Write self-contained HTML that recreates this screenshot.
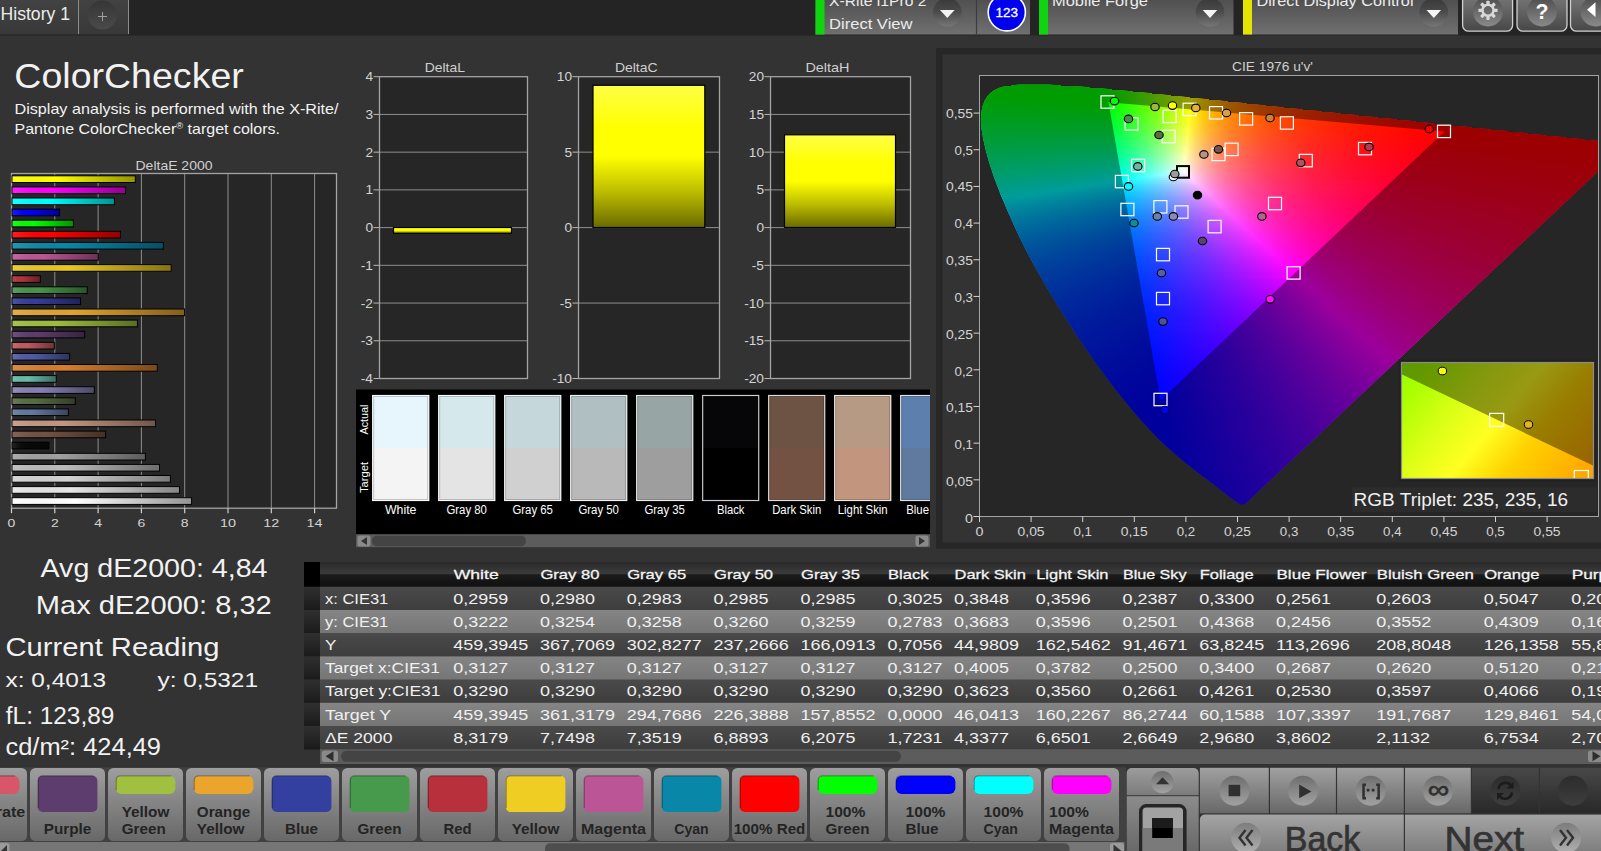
<!DOCTYPE html>
<html lang="en"><head><meta charset="utf-8"><title>ColorChecker</title>
<style>html,body{margin:0;padding:0;background:#333;overflow:hidden}svg{display:block;font-family:"Liberation Sans",sans-serif}</style>
</head><body>
<svg width="1601" height="851" viewBox="0 0 1601 851">
<defs>
<linearGradient id="gTab" x1="0" y1="0" x2="0" y2="1"><stop offset="0" stop-color="#424242"/><stop offset="1" stop-color="#383838"/></linearGradient>
<linearGradient id="gPanel" x1="0" y1="0" x2="0" y2="1"><stop offset="0" stop-color="#4e4e4e"/><stop offset="1" stop-color="#707070"/></linearGradient>
<linearGradient id="gBtn" x1="0" y1="0" x2="0" y2="1"><stop offset="0" stop-color="#7a7a7a"/><stop offset="0.35" stop-color="#6c6c6c"/><stop offset="1" stop-color="#474747"/></linearGradient>
<linearGradient id="gCirc" x1="0" y1="0" x2="0" y2="1"><stop offset="0" stop-color="#383838"/><stop offset="0.5" stop-color="#4c4c4c"/><stop offset="1" stop-color="#767676"/></linearGradient>
<linearGradient id="gCircBtn" x1="0" y1="0" x2="0" y2="1"><stop offset="0" stop-color="#4c4c4c"/><stop offset="1" stop-color="#8a8a8a"/></linearGradient>
<linearGradient id="gPlus" x1="0" y1="0" x2="0" y2="1"><stop offset="0" stop-color="#363636"/><stop offset="1" stop-color="#4a4a4a"/></linearGradient>
<linearGradient id="gShade" x1="0" y1="0" x2="1" y2="0"><stop offset="0" stop-color="#fff" stop-opacity="0.12"/><stop offset="0.35" stop-color="#000" stop-opacity="0"/><stop offset="1" stop-color="#000" stop-opacity="0.42"/></linearGradient>
<linearGradient id="gY" x1="0" y1="0" x2="0" y2="1"><stop offset="0" stop-color="#ffff46"/><stop offset="0.3" stop-color="#ffff00"/><stop offset="0.5" stop-color="#ffff00"/><stop offset="0.75" stop-color="#bcbc00"/><stop offset="1" stop-color="#6a6a00"/></linearGradient>
<linearGradient id="r0" gradientUnits="userSpaceOnUse" x1="1011" x2="1061"><stop offset="0" stop-color="#0f0"/><stop offset="1" stop-color="#0f0"/></linearGradient>
<linearGradient id="r1" gradientUnits="userSpaceOnUse" x1="999" x2="1090"><stop offset="0" stop-color="#0f0"/><stop offset="1" stop-color="#0f0"/></linearGradient>
<linearGradient id="r2" gradientUnits="userSpaceOnUse" x1="993" x2="1112"><stop offset="0" stop-color="#0f0"/><stop offset="0.9496" stop-color="#0f0"/><stop offset="1" stop-color="#0cff00"/></linearGradient>
<linearGradient id="r3" gradientUnits="userSpaceOnUse" x1="990" x2="1133"><stop offset="0" stop-color="#0f0"/><stop offset="0.8112" stop-color="#0f0"/><stop offset="1" stop-color="#3eff00"/></linearGradient>
<linearGradient id="r4" gradientUnits="userSpaceOnUse" x1="987" x2="1152"><stop offset="0" stop-color="#00ff02"/><stop offset="0.7273" stop-color="#0f0"/><stop offset="0.8606" stop-color="#3f0"/><stop offset="1" stop-color="#73ff00"/></linearGradient>
<linearGradient id="r5" gradientUnits="userSpaceOnUse" x1="985" x2="1171"><stop offset="0" stop-color="#00ff05"/><stop offset="0.2151" stop-color="#0f0"/><stop offset="0.6559" stop-color="#0f0"/><stop offset="0.7312" stop-color="#1eff00"/><stop offset="0.828" stop-color="#4dff00"/><stop offset="1" stop-color="#b1ff00"/></linearGradient>
<linearGradient id="r6" gradientUnits="userSpaceOnUse" x1="983" x2="1190"><stop offset="0" stop-color="#00ff09"/><stop offset="0.314" stop-color="#0f0"/><stop offset="0.6039" stop-color="#01ff00"/><stop offset="0.7005" stop-color="#2fff00"/><stop offset="0.8068" stop-color="#6dff00"/><stop offset="0.9082" stop-color="#b2ff00"/><stop offset="1" stop-color="#faff00"/></linearGradient>
<linearGradient id="r7" gradientUnits="userSpaceOnUse" x1="982" x2="1209"><stop offset="0" stop-color="#00ff0c"/><stop offset="0.3921" stop-color="#0f0"/><stop offset="0.5551" stop-color="#0f0"/><stop offset="0.6476" stop-color="#31ff00"/><stop offset="0.7445" stop-color="#70ff00"/><stop offset="0.837" stop-color="#b6ff00"/><stop offset="0.9207" stop-color="#ff0"/><stop offset="0.9604" stop-color="#fd0"/><stop offset="1" stop-color="#ffc200"/></linearGradient>
<linearGradient id="r8" gradientUnits="userSpaceOnUse" x1="981" x2="1228"><stop offset="0" stop-color="#00ff0f"/><stop offset="0.5142" stop-color="#0f0"/><stop offset="0.5911" stop-color="#2bff00"/><stop offset="0.6842" stop-color="#6cff00"/><stop offset="0.7652" stop-color="#afff00"/><stop offset="0.8502" stop-color="#fffe00"/><stop offset="0.919" stop-color="#ffc400"/><stop offset="1" stop-color="#ff9500"/></linearGradient>
<linearGradient id="r9" gradientUnits="userSpaceOnUse" x1="980" x2="1247"><stop offset="0" stop-color="#00ff13"/><stop offset="0.4831" stop-color="#01ff01"/><stop offset="0.5581" stop-color="#30ff00"/><stop offset="0.6367" stop-color="#6cff00"/><stop offset="0.7116" stop-color="#afff00"/><stop offset="0.7903" stop-color="#fffd00"/><stop offset="0.8315" stop-color="#ffd500"/><stop offset="0.8801" stop-color="#ffb100"/><stop offset="0.9363" stop-color="#ff9000"/><stop offset="1" stop-color="#ff7500"/></linearGradient>
<linearGradient id="r10" gradientUnits="userSpaceOnUse" x1="979" x2="1266"><stop offset="0" stop-color="#00ff16"/><stop offset="0.453" stop-color="#00ff06"/><stop offset="0.5226" stop-color="#30ff02"/><stop offset="0.5993" stop-color="#6fff00"/><stop offset="0.669" stop-color="#b3ff00"/><stop offset="0.7352" stop-color="#fdff00"/><stop offset="0.7875" stop-color="#ffcb00"/><stop offset="0.8467" stop-color="#ffa000"/><stop offset="0.9164" stop-color="#ff7b00"/><stop offset="1" stop-color="#ff5c00"/></linearGradient>
<linearGradient id="r11" gradientUnits="userSpaceOnUse" x1="979" x2="1284"><stop offset="0" stop-color="#00ff1a"/><stop offset="0.4262" stop-color="#00ff0a"/><stop offset="0.4885" stop-color="#2cff07"/><stop offset="0.5607" stop-color="#6cff03"/><stop offset="0.6295" stop-color="#b3ff00"/><stop offset="0.6918" stop-color="#feff00"/><stop offset="0.7508" stop-color="#ffc100"/><stop offset="0.8164" stop-color="#ff9200"/><stop offset="0.8984" stop-color="#ff6b00"/><stop offset="1" stop-color="#ff4a00"/></linearGradient>
<linearGradient id="r12" gradientUnits="userSpaceOnUse" x1="979" x2="1303"><stop offset="0" stop-color="#00ff1d"/><stop offset="0.4043" stop-color="#01ff0e"/><stop offset="0.466" stop-color="#31ff0b"/><stop offset="0.5309" stop-color="#6fff07"/><stop offset="0.5926" stop-color="#b3ff03"/><stop offset="0.6512" stop-color="#ff0"/><stop offset="0.679" stop-color="#ffdc00"/><stop offset="0.713" stop-color="#fb0"/><stop offset="0.787" stop-color="#ff8700"/><stop offset="0.8827" stop-color="#ff5c00"/><stop offset="1" stop-color="#ff3b00"/></linearGradient>
<linearGradient id="r13" gradientUnits="userSpaceOnUse" x1="979" x2="1322"><stop offset="0" stop-color="#00ff21"/><stop offset="0.3819" stop-color="#00ff13"/><stop offset="0.4402" stop-color="#30ff10"/><stop offset="0.5015" stop-color="#6eff0c"/><stop offset="0.5598" stop-color="#b3ff09"/><stop offset="0.6122" stop-color="#fcff05"/><stop offset="0.6152" stop-color="#fffe05"/><stop offset="0.6501" stop-color="#ffd101"/><stop offset="0.6822" stop-color="#ffb200"/><stop offset="0.7201" stop-color="#ff9500"/><stop offset="0.7609" stop-color="#ff7c00"/><stop offset="0.8659" stop-color="#ff5000"/><stop offset="1" stop-color="#ff2e00"/></linearGradient>
<linearGradient id="r14" gradientUnits="userSpaceOnUse" x1="979" x2="1341"><stop offset="0" stop-color="#00ff25"/><stop offset="0.3646" stop-color="#01ff18"/><stop offset="0.4171" stop-color="#30ff15"/><stop offset="0.4751" stop-color="#6eff12"/><stop offset="0.5304" stop-color="#b4ff0e"/><stop offset="0.5801" stop-color="#fcff0b"/><stop offset="0.616" stop-color="#ffd006"/><stop offset="0.6492" stop-color="#ffae03"/><stop offset="0.6878" stop-color="#ff9001"/><stop offset="0.7348" stop-color="#ff7300"/><stop offset="0.7873" stop-color="#ff5b00"/><stop offset="0.8481" stop-color="#ff4600"/><stop offset="1" stop-color="#ff2400"/></linearGradient>
<linearGradient id="r15" gradientUnits="userSpaceOnUse" x1="979" x2="1359"><stop offset="0" stop-color="#00ff28"/><stop offset="0.3474" stop-color="#01ff1d"/><stop offset="0.3974" stop-color="#2fff1a"/><stop offset="0.4526" stop-color="#6eff17"/><stop offset="0.5053" stop-color="#b4ff14"/><stop offset="0.5526" stop-color="#fdff11"/><stop offset="0.5868" stop-color="#ffd00b"/><stop offset="0.6237" stop-color="#ffa907"/><stop offset="0.6658" stop-color="#ff8704"/><stop offset="0.7132" stop-color="#ff6b01"/><stop offset="0.7711" stop-color="#ff5200"/><stop offset="0.8368" stop-color="#ff3d00"/><stop offset="1" stop-color="#ff1b00"/></linearGradient>
<linearGradient id="r16" gradientUnits="userSpaceOnUse" x1="979" x2="1378"><stop offset="0" stop-color="#00ff2c"/><stop offset="0.3308" stop-color="#0f2"/><stop offset="0.3784" stop-color="#2fff1f"/><stop offset="0.4311" stop-color="#6eff1d"/><stop offset="0.4812" stop-color="#b4ff1a"/><stop offset="0.5263" stop-color="#feff17"/><stop offset="0.5589" stop-color="#ffcf10"/><stop offset="0.5965" stop-color="#ffa50b"/><stop offset="0.6416" stop-color="#ff8107"/><stop offset="0.6917" stop-color="#ff6403"/><stop offset="0.7519" stop-color="#ff4b00"/><stop offset="0.8221" stop-color="#ff3500"/><stop offset="1" stop-color="#ff1400"/></linearGradient>
<linearGradient id="r17" gradientUnits="userSpaceOnUse" x1="979" x2="1397"><stop offset="0" stop-color="#00ff30"/><stop offset="0.3182" stop-color="#01ff27"/><stop offset="0.3636" stop-color="#31ff25"/><stop offset="0.4139" stop-color="#71ff22"/><stop offset="0.4593" stop-color="#b5ff20"/><stop offset="0.5024" stop-color="#ffff1d"/><stop offset="0.5359" stop-color="#ffca15"/><stop offset="0.5742" stop-color="#ffa00f"/><stop offset="0.6196" stop-color="#ff7b0a"/><stop offset="0.6722" stop-color="#ff5d05"/><stop offset="0.7344" stop-color="#ff4402"/><stop offset="0.8086" stop-color="#ff2e00"/><stop offset="1" stop-color="#ff0e00"/></linearGradient>
<linearGradient id="r18" gradientUnits="userSpaceOnUse" x1="979" x2="1416"><stop offset="0" stop-color="#00ff34"/><stop offset="0.3043" stop-color="#00ff2c"/><stop offset="0.3478" stop-color="#30ff2a"/><stop offset="0.3936" stop-color="#6dff28"/><stop offset="0.4371" stop-color="#b1ff26"/><stop offset="0.4805" stop-color="#fffe24"/><stop offset="0.5126" stop-color="#ffca1b"/><stop offset="0.5515" stop-color="#ff9d13"/><stop offset="0.5973" stop-color="#ff770d"/><stop offset="0.6522" stop-color="#ff5808"/><stop offset="0.7185" stop-color="#ff3e03"/><stop offset="0.7963" stop-color="#ff2800"/><stop offset="0.8902" stop-color="#ff1600"/><stop offset="1" stop-color="#ff0800"/></linearGradient>
<linearGradient id="r19" gradientUnits="userSpaceOnUse" x1="979" x2="1434"><stop offset="0" stop-color="#00ff38"/><stop offset="0.2923" stop-color="#00ff31"/><stop offset="0.3319" stop-color="#2dff30"/><stop offset="0.378" stop-color="#6dff2e"/><stop offset="0.4176" stop-color="#adff2d"/><stop offset="0.4615" stop-color="#fffd2a"/><stop offset="0.4945" stop-color="#ffc520"/><stop offset="0.5341" stop-color="#ff9717"/><stop offset="0.5802" stop-color="#ff7210"/><stop offset="0.6374" stop-color="#ff520a"/><stop offset="0.7055" stop-color="#ff3805"/><stop offset="0.7868" stop-color="#ff2301"/><stop offset="0.8835" stop-color="#f10"/><stop offset="1" stop-color="#ff0400"/></linearGradient>
<linearGradient id="r20" gradientUnits="userSpaceOnUse" x1="979" x2="1453"><stop offset="0" stop-color="#00ff3c"/><stop offset="0.2827" stop-color="#01ff37"/><stop offset="0.3207" stop-color="#2fff36"/><stop offset="0.3629" stop-color="#6dff34"/><stop offset="0.3987" stop-color="#af3"/><stop offset="0.443" stop-color="#fffc31"/><stop offset="0.4747" stop-color="#ffc425"/><stop offset="0.5148" stop-color="#ff941b"/><stop offset="0.5633" stop-color="#ff6d12"/><stop offset="0.6203" stop-color="#ff4d0c"/><stop offset="0.6899" stop-color="#ff3306"/><stop offset="0.7764" stop-color="#ff1e02"/><stop offset="0.8819" stop-color="#ff0c00"/><stop offset="1" stop-color="#f00"/></linearGradient>
<linearGradient id="r21" gradientUnits="userSpaceOnUse" x1="979" x2="1472"><stop offset="0" stop-color="#00ff40"/><stop offset="0.2718" stop-color="#00ff3c"/><stop offset="0.3083" stop-color="#2fff3b"/><stop offset="0.3469" stop-color="#69ff3b"/><stop offset="0.3813" stop-color="#a6ff3a"/><stop offset="0.4239" stop-color="#feff38"/><stop offset="0.426" stop-color="#fffb38"/><stop offset="0.4584" stop-color="#ffc02a"/><stop offset="0.499" stop-color="#ff8f1e"/><stop offset="0.5477" stop-color="#ff6815"/><stop offset="0.6085" stop-color="#ff470d"/><stop offset="0.6856" stop-color="#ff2c07"/><stop offset="0.7809" stop-color="#ff1602"/><stop offset="0.9209" stop-color="#ff0300"/><stop offset="1" stop-color="#f00"/></linearGradient>
<linearGradient id="r22" gradientUnits="userSpaceOnUse" x1="979" x2="1491"><stop offset="0" stop-color="#0f4"/><stop offset="0.2617" stop-color="#00ff42"/><stop offset="0.2969" stop-color="#2eff41"/><stop offset="0.3359" stop-color="#6cff41"/><stop offset="0.373" stop-color="#b2ff40"/><stop offset="0.4082" stop-color="#ffff40"/><stop offset="0.4238" stop-color="#ffde37"/><stop offset="0.4414" stop-color="#ffbf2f"/><stop offset="0.4824" stop-color="#ff8c22"/><stop offset="0.5332" stop-color="#ff6318"/><stop offset="0.5938" stop-color="#ff430f"/><stop offset="0.6777" stop-color="#ff2608"/><stop offset="0.7812" stop-color="#ff1103"/><stop offset="0.9141" stop-color="#f00"/><stop offset="1" stop-color="#f00"/></linearGradient>
<linearGradient id="r23" gradientUnits="userSpaceOnUse" x1="979" x2="1509"><stop offset="0" stop-color="#00ff48"/><stop offset="0.2547" stop-color="#01ff47"/><stop offset="0.2887" stop-color="#30ff47"/><stop offset="0.3264" stop-color="#70ff47"/><stop offset="0.3604" stop-color="#b2ff47"/><stop offset="0.3943" stop-color="#fffe47"/><stop offset="0.4094" stop-color="#ffdd3d"/><stop offset="0.4264" stop-color="#ffbe35"/><stop offset="0.4679" stop-color="#ff8926"/><stop offset="0.5189" stop-color="#ff601a"/><stop offset="0.583" stop-color="#ff3e11"/><stop offset="0.6717" stop-color="#ff2109"/><stop offset="0.783" stop-color="#ff0c03"/><stop offset="0.8792" stop-color="#f00"/><stop offset="1" stop-color="#f00"/></linearGradient>
<linearGradient id="r24" gradientUnits="userSpaceOnUse" x1="979" x2="1528"><stop offset="0" stop-color="#00ff4c"/><stop offset="0.2459" stop-color="#00ff4d"/><stop offset="0.2787" stop-color="#30ff4d"/><stop offset="0.3133" stop-color="#6cff4e"/><stop offset="0.3443" stop-color="#abff4e"/><stop offset="0.3807" stop-color="#fffd4e"/><stop offset="0.3971" stop-color="#ffd843"/><stop offset="0.4135" stop-color="#ffba3a"/><stop offset="0.4335" stop-color="#ff9e31"/><stop offset="0.4554" stop-color="#ff8529"/><stop offset="0.5064" stop-color="#ff5b1d"/><stop offset="0.5701" stop-color="#ff3a13"/><stop offset="0.663" stop-color="#ff1d0a"/><stop offset="0.7832" stop-color="#ff0703"/><stop offset="0.8452" stop-color="#ff0001"/><stop offset="1" stop-color="#f00"/></linearGradient>
<linearGradient id="r25" gradientUnits="userSpaceOnUse" x1="979" x2="1547"><stop offset="0" stop-color="#00ff50"/><stop offset="0.2377" stop-color="#00ff53"/><stop offset="0.2676" stop-color="#2cff54"/><stop offset="0.3011" stop-color="#68ff54"/><stop offset="0.331" stop-color="#a7ff55"/><stop offset="0.368" stop-color="#fffc55"/><stop offset="0.3838" stop-color="#ffd749"/><stop offset="0.4014" stop-color="#ffb73f"/><stop offset="0.4208" stop-color="#ff9a35"/><stop offset="0.4419" stop-color="#ff822d"/><stop offset="0.4947" stop-color="#ff571f"/><stop offset="0.5599" stop-color="#ff3614"/><stop offset="0.6567" stop-color="#ff190b"/><stop offset="0.7817" stop-color="#ff0304"/><stop offset="1" stop-color="#f00"/></linearGradient>
<linearGradient id="r26" gradientUnits="userSpaceOnUse" x1="979" x2="1566"><stop offset="0" stop-color="#00ff54"/><stop offset="0.2317" stop-color="#01ff59"/><stop offset="0.2606" stop-color="#2eff5a"/><stop offset="0.293" stop-color="#6bff5b"/><stop offset="0.3203" stop-color="#a7ff5c"/><stop offset="0.3543" stop-color="#feff5e"/><stop offset="0.356" stop-color="#fffb5d"/><stop offset="0.3714" stop-color="#ffd650"/><stop offset="0.3884" stop-color="#ffb644"/><stop offset="0.4072" stop-color="#ff993a"/><stop offset="0.4293" stop-color="#ff7f31"/><stop offset="0.4821" stop-color="#ff5422"/><stop offset="0.5486" stop-color="#ff3216"/><stop offset="0.6474" stop-color="#ff150c"/><stop offset="0.7734" stop-color="#ff0104"/><stop offset="1" stop-color="#f00"/></linearGradient>
<linearGradient id="r27" gradientUnits="userSpaceOnUse" x1="980" x2="1585"><stop offset="0" stop-color="#00ff59"/><stop offset="0.2231" stop-color="#00ff5f"/><stop offset="0.2529" stop-color="#31ff61"/><stop offset="0.2843" stop-color="#6fff62"/><stop offset="0.314" stop-color="#b4ff64"/><stop offset="0.3421" stop-color="#ff6"/><stop offset="0.357" stop-color="#ffd958"/><stop offset="0.3736" stop-color="#ffb74b"/><stop offset="0.3934" stop-color="#ff983f"/><stop offset="0.4149" stop-color="#ff7e36"/><stop offset="0.4678" stop-color="#ff5225"/><stop offset="0.5355" stop-color="#ff3018"/><stop offset="0.6314" stop-color="#ff140d"/><stop offset="0.7537" stop-color="#ff0006"/><stop offset="1" stop-color="#f00"/></linearGradient>
<linearGradient id="r28" gradientUnits="userSpaceOnUse" x1="980" x2="1601"><stop offset="0" stop-color="#00ff5d"/><stop offset="0.2174" stop-color="#0f6"/><stop offset="0.2448" stop-color="#2dff67"/><stop offset="0.2754" stop-color="#6bff69"/><stop offset="0.3043" stop-color="#b0ff6b"/><stop offset="0.3333" stop-color="#fffe6e"/><stop offset="0.3478" stop-color="#ffd85e"/><stop offset="0.3655" stop-color="#ffb350"/><stop offset="0.3849" stop-color="#ff9544"/><stop offset="0.4074" stop-color="#ff7a39"/><stop offset="0.4605" stop-color="#ff4e27"/><stop offset="0.5282" stop-color="#ff2c1a"/><stop offset="0.6184" stop-color="#ff120f"/><stop offset="0.7311" stop-color="#ff0007"/><stop offset="1" stop-color="#f00"/></linearGradient>
<linearGradient id="r29" gradientUnits="userSpaceOnUse" x1="981" x2="1601"><stop offset="0" stop-color="#00ff61"/><stop offset="0.2177" stop-color="#01ff6c"/><stop offset="0.2452" stop-color="#2fff6e"/><stop offset="0.2758" stop-color="#6eff71"/><stop offset="0.3016" stop-color="#acff73"/><stop offset="0.3323" stop-color="#fffd75"/><stop offset="0.3468" stop-color="#ffd765"/><stop offset="0.3645" stop-color="#ffb256"/><stop offset="0.3839" stop-color="#ff9449"/><stop offset="0.4065" stop-color="#ff793d"/><stop offset="0.4597" stop-color="#ff4d2a"/><stop offset="0.5274" stop-color="#ff2c1c"/><stop offset="0.6161" stop-color="#ff1211"/><stop offset="0.7274" stop-color="#ff0009"/><stop offset="1" stop-color="#f00"/></linearGradient>
<linearGradient id="r30" gradientUnits="userSpaceOnUse" x1="981" x2="1601"><stop offset="0" stop-color="#0f6"/><stop offset="0.2177" stop-color="#00ff72"/><stop offset="0.2452" stop-color="#2fff75"/><stop offset="0.2742" stop-color="#6aff78"/><stop offset="0.3" stop-color="#a8ff7b"/><stop offset="0.3323" stop-color="#fffc7d"/><stop offset="0.3468" stop-color="#ffd66c"/><stop offset="0.3645" stop-color="#ffb15c"/><stop offset="0.3839" stop-color="#ff934e"/><stop offset="0.4048" stop-color="#ff7942"/><stop offset="0.4581" stop-color="#ff4d2e"/><stop offset="0.5274" stop-color="#ff2b1f"/><stop offset="0.6145" stop-color="#ff1213"/><stop offset="0.7242" stop-color="#ff000a"/><stop offset="1" stop-color="#f00"/></linearGradient>
<linearGradient id="r31" gradientUnits="userSpaceOnUse" x1="981" x2="1601"><stop offset="0" stop-color="#00ff6a"/><stop offset="0.2177" stop-color="#00ff79"/><stop offset="0.2419" stop-color="#28ff7b"/><stop offset="0.2726" stop-color="#66ff7f"/><stop offset="0.2984" stop-color="#a4ff82"/><stop offset="0.3306" stop-color="#feff87"/><stop offset="0.3323" stop-color="#fffb85"/><stop offset="0.3468" stop-color="#ffd573"/><stop offset="0.3645" stop-color="#ffb062"/><stop offset="0.3839" stop-color="#ff9253"/><stop offset="0.4048" stop-color="#ff7847"/><stop offset="0.4581" stop-color="#ff4c32"/><stop offset="0.5258" stop-color="#ff2b22"/><stop offset="0.6129" stop-color="#ff1215"/><stop offset="0.721" stop-color="#ff000c"/><stop offset="1" stop-color="#ff0001"/></linearGradient>
<linearGradient id="r32" gradientUnits="userSpaceOnUse" x1="982" x2="1601"><stop offset="0" stop-color="#00ff6f"/><stop offset="0.2181" stop-color="#01ff80"/><stop offset="0.2456" stop-color="#30ff83"/><stop offset="0.2746" stop-color="#6dff87"/><stop offset="0.3021" stop-color="#b1ff8b"/><stop offset="0.3296" stop-color="#ffff90"/><stop offset="0.3441" stop-color="#ffd77c"/><stop offset="0.3619" stop-color="#ffb269"/><stop offset="0.3813" stop-color="#ff935a"/><stop offset="0.4023" stop-color="#ff794c"/><stop offset="0.4556" stop-color="#ff4c36"/><stop offset="0.5234" stop-color="#ff2b25"/><stop offset="0.609" stop-color="#ff1218"/><stop offset="0.7173" stop-color="#ff000e"/><stop offset="1" stop-color="#ff0002"/></linearGradient>
<linearGradient id="r33" gradientUnits="userSpaceOnUse" x1="982" x2="1601"><stop offset="0" stop-color="#00ff73"/><stop offset="0.2181" stop-color="#00ff87"/><stop offset="0.2456" stop-color="#30ff8a"/><stop offset="0.2746" stop-color="#6dff8f"/><stop offset="0.3021" stop-color="#b1ff94"/><stop offset="0.3296" stop-color="#fffe98"/><stop offset="0.3441" stop-color="#ffd683"/><stop offset="0.3619" stop-color="#ffb16f"/><stop offset="0.3813" stop-color="#ff925f"/><stop offset="0.4023" stop-color="#ff7851"/><stop offset="0.4556" stop-color="#ff4c39"/><stop offset="0.5234" stop-color="#ff2a27"/><stop offset="0.609" stop-color="#ff111a"/><stop offset="0.7141" stop-color="#ff0010"/><stop offset="1" stop-color="#ff0003"/></linearGradient>
<linearGradient id="r34" gradientUnits="userSpaceOnUse" x1="983" x2="1601"><stop offset="0" stop-color="#00ff78"/><stop offset="0.2168" stop-color="#00ff8e"/><stop offset="0.2411" stop-color="#29ff91"/><stop offset="0.2718" stop-color="#69ff96"/><stop offset="0.2977" stop-color="#a9ff9b"/><stop offset="0.3285" stop-color="#fffda1"/><stop offset="0.343" stop-color="#ffd58b"/><stop offset="0.3608" stop-color="#ffb076"/><stop offset="0.3803" stop-color="#ff9164"/><stop offset="0.4013" stop-color="#ff7756"/><stop offset="0.4547" stop-color="#ff4b3d"/><stop offset="0.5227" stop-color="#ff292a"/><stop offset="0.6052" stop-color="#ff121c"/><stop offset="0.7087" stop-color="#ff0012"/><stop offset="1" stop-color="#ff0003"/></linearGradient>
<linearGradient id="r35" gradientUnits="userSpaceOnUse" x1="984" x2="1601"><stop offset="0" stop-color="#00ff7d"/><stop offset="0.2172" stop-color="#01ff95"/><stop offset="0.2431" stop-color="#2eff99"/><stop offset="0.2723" stop-color="#6dff9f"/><stop offset="0.2966" stop-color="#a9ffa4"/><stop offset="0.3258" stop-color="#fdffab"/><stop offset="0.3274" stop-color="#fffca9"/><stop offset="0.342" stop-color="#ffd492"/><stop offset="0.3598" stop-color="#ffaf7c"/><stop offset="0.3793" stop-color="#ff906a"/><stop offset="0.4003" stop-color="#ff765b"/><stop offset="0.4538" stop-color="#ff4a40"/><stop offset="0.5219" stop-color="#ff292d"/><stop offset="0.6045" stop-color="#ff111e"/><stop offset="0.705" stop-color="#ff0013"/><stop offset="1" stop-color="#ff0004"/></linearGradient>
<linearGradient id="r36" gradientUnits="userSpaceOnUse" x1="984" x2="1601"><stop offset="0" stop-color="#00ff82"/><stop offset="0.2172" stop-color="#00ff9c"/><stop offset="0.2431" stop-color="#2effa1"/><stop offset="0.2707" stop-color="#69ffa7"/><stop offset="0.2998" stop-color="#b2ffae"/><stop offset="0.3258" stop-color="#feffb5"/><stop offset="0.3274" stop-color="#fffbb2"/><stop offset="0.342" stop-color="#ffd39a"/><stop offset="0.3582" stop-color="#ffb184"/><stop offset="0.3776" stop-color="#ff9171"/><stop offset="0.3987" stop-color="#ff7761"/><stop offset="0.423" stop-color="#ff5f52"/><stop offset="0.4522" stop-color="#ff4a45"/><stop offset="0.5203" stop-color="#ff2930"/><stop offset="0.6013" stop-color="#ff1121"/><stop offset="0.7018" stop-color="#ff0015"/><stop offset="1" stop-color="#ff0005"/></linearGradient>
<linearGradient id="r37" gradientUnits="userSpaceOnUse" x1="985" x2="1601"><stop offset="0" stop-color="#00ff87"/><stop offset="0.2159" stop-color="#00ffa3"/><stop offset="0.2403" stop-color="#2affa8"/><stop offset="0.2711" stop-color="#6cffaf"/><stop offset="0.2987" stop-color="#b2ffb6"/><stop offset="0.3247" stop-color="#ffffbe"/><stop offset="0.3393" stop-color="#ffd6a4"/><stop offset="0.3555" stop-color="#ffb38d"/><stop offset="0.375" stop-color="#ff9278"/><stop offset="0.3961" stop-color="#ff7867"/><stop offset="0.4205" stop-color="#ff6057"/><stop offset="0.4497" stop-color="#ff4a49"/><stop offset="0.5179" stop-color="#ff2833"/><stop offset="0.599" stop-color="#ff1123"/><stop offset="0.6981" stop-color="#ff0017"/><stop offset="1" stop-color="#ff0006"/></linearGradient>
<linearGradient id="r38" gradientUnits="userSpaceOnUse" x1="985" x2="1601"><stop offset="0" stop-color="#00ff8c"/><stop offset="0.2175" stop-color="#01ffab"/><stop offset="0.2435" stop-color="#30ffb1"/><stop offset="0.2711" stop-color="#6cffb8"/><stop offset="0.2971" stop-color="#aeffbf"/><stop offset="0.3247" stop-color="#fffec7"/><stop offset="0.3393" stop-color="#ffd5ab"/><stop offset="0.3555" stop-color="#ffb294"/><stop offset="0.375" stop-color="#ff917e"/><stop offset="0.3961" stop-color="#ff776c"/><stop offset="0.4205" stop-color="#ff5f5c"/><stop offset="0.4497" stop-color="#ff494d"/><stop offset="0.5179" stop-color="#ff2836"/><stop offset="0.5974" stop-color="#ff1125"/><stop offset="0.6948" stop-color="#ff0019"/><stop offset="1" stop-color="#ff0007"/></linearGradient>
<linearGradient id="r39" gradientUnits="userSpaceOnUse" x1="986" x2="1601"><stop offset="0" stop-color="#00ff91"/><stop offset="0.1187" stop-color="#00ffa0"/><stop offset="0.2163" stop-color="#00ffb3"/><stop offset="0.2423" stop-color="#2fffb9"/><stop offset="0.2699" stop-color="#6cffc0"/><stop offset="0.2943" stop-color="#aaffc8"/><stop offset="0.3236" stop-color="#fffdd0"/><stop offset="0.3382" stop-color="#ffd4b3"/><stop offset="0.3545" stop-color="#ffb19b"/><stop offset="0.374" stop-color="#ff9084"/><stop offset="0.3951" stop-color="#ff7671"/><stop offset="0.4195" stop-color="#ff5e60"/><stop offset="0.4488" stop-color="#ff4850"/><stop offset="0.5171" stop-color="#ff2738"/><stop offset="0.5951" stop-color="#ff1028"/><stop offset="0.6911" stop-color="#ff001b"/><stop offset="1" stop-color="#ff0008"/></linearGradient>
<linearGradient id="r40" gradientUnits="userSpaceOnUse" x1="987" x2="1601"><stop offset="0" stop-color="#00ff96"/><stop offset="0.1189" stop-color="#00ffa7"/><stop offset="0.2166" stop-color="#01ffbb"/><stop offset="0.241" stop-color="#2effc1"/><stop offset="0.2687" stop-color="#6bffc9"/><stop offset="0.2932" stop-color="#aaffd1"/><stop offset="0.3208" stop-color="#fdffdc"/><stop offset="0.3225" stop-color="#fffcda"/><stop offset="0.3371" stop-color="#ffd2bb"/><stop offset="0.3534" stop-color="#ffafa1"/><stop offset="0.373" stop-color="#ff8f8a"/><stop offset="0.3941" stop-color="#ff7576"/><stop offset="0.4463" stop-color="#ff4955"/><stop offset="0.5147" stop-color="#ff273c"/><stop offset="0.5928" stop-color="#ff102a"/><stop offset="0.6873" stop-color="#ff001d"/><stop offset="1" stop-color="#ff0009"/></linearGradient>
<linearGradient id="r41" gradientUnits="userSpaceOnUse" x1="987" x2="1601"><stop offset="0" stop-color="#00ff9b"/><stop offset="0.1189" stop-color="#00ffad"/><stop offset="0.2166" stop-color="#00ffc3"/><stop offset="0.241" stop-color="#2dffc9"/><stop offset="0.2687" stop-color="#6bffd2"/><stop offset="0.2948" stop-color="#afffdc"/><stop offset="0.3208" stop-color="#feffe6"/><stop offset="0.3225" stop-color="#fffae3"/><stop offset="0.3371" stop-color="#ffd1c3"/><stop offset="0.3534" stop-color="#ffaea8"/><stop offset="0.373" stop-color="#ff8e90"/><stop offset="0.3941" stop-color="#ff747b"/><stop offset="0.4463" stop-color="#ff4859"/><stop offset="0.5147" stop-color="#ff263f"/><stop offset="0.5912" stop-color="#ff102d"/><stop offset="0.684" stop-color="#ff001f"/><stop offset="1" stop-color="#ff000a"/></linearGradient>
<linearGradient id="r42" gradientUnits="userSpaceOnUse" x1="988" x2="1601"><stop offset="0" stop-color="#00ffa1"/><stop offset="0.1175" stop-color="#00ffb4"/><stop offset="0.2153" stop-color="#00ffcb"/><stop offset="0.2398" stop-color="#2dffd2"/><stop offset="0.2692" stop-color="#6fffdc"/><stop offset="0.2953" stop-color="#b4ffe6"/><stop offset="0.3197" stop-color="#fffff1"/><stop offset="0.3344" stop-color="#ffd4cf"/><stop offset="0.3507" stop-color="#ffb0b2"/><stop offset="0.3703" stop-color="#ff8f97"/><stop offset="0.3915" stop-color="#ff7482"/><stop offset="0.416" stop-color="#ff5c6e"/><stop offset="0.4437" stop-color="#ff485e"/><stop offset="0.5122" stop-color="#ff2642"/><stop offset="0.5889" stop-color="#ff102f"/><stop offset="0.6803" stop-color="#ff0021"/><stop offset="0.8189" stop-color="#ff0015"/><stop offset="1" stop-color="#ff000b"/></linearGradient>
<linearGradient id="r43" gradientUnits="userSpaceOnUse" x1="989" x2="1601"><stop offset="0" stop-color="#00ffa6"/><stop offset="0.1176" stop-color="#00ffba"/><stop offset="0.2157" stop-color="#01ffd3"/><stop offset="0.2402" stop-color="#2fffdb"/><stop offset="0.268" stop-color="#6effe5"/><stop offset="0.2925" stop-color="#b0fff0"/><stop offset="0.3186" stop-color="#fffefb"/><stop offset="0.3333" stop-color="#ffd3d7"/><stop offset="0.3497" stop-color="#ffafb9"/><stop offset="0.3676" stop-color="#ff91a0"/><stop offset="0.3889" stop-color="#ff7588"/><stop offset="0.4134" stop-color="#ff5d74"/><stop offset="0.4412" stop-color="#ff4862"/><stop offset="0.5098" stop-color="#ff2645"/><stop offset="0.585" stop-color="#ff1032"/><stop offset="0.6765" stop-color="#ff0024"/><stop offset="0.817" stop-color="#ff0016"/><stop offset="1" stop-color="#ff000c"/></linearGradient>
<linearGradient id="r44" gradientUnits="userSpaceOnUse" x1="989" x2="1600"><stop offset="0" stop-color="#00ffac"/><stop offset="0.1178" stop-color="#00ffc1"/><stop offset="0.216" stop-color="#00ffdb"/><stop offset="0.2373" stop-color="#28ffe3"/><stop offset="0.2619" stop-color="#5effec"/><stop offset="0.2831" stop-color="#94fff5"/><stop offset="0.3028" stop-color="#cdffff"/><stop offset="0.3208" stop-color="#fef6ff"/><stop offset="0.3224" stop-color="#fff2fc"/><stop offset="0.3372" stop-color="#ffcad9"/><stop offset="0.3535" stop-color="#ffa8bb"/><stop offset="0.3732" stop-color="#ff88a0"/><stop offset="0.3944" stop-color="#ff6f89"/><stop offset="0.4468" stop-color="#ff4464"/><stop offset="0.5155" stop-color="#ff2347"/><stop offset="0.5876" stop-color="#ff0f34"/><stop offset="0.6743" stop-color="#ff0026"/><stop offset="0.8151" stop-color="#ff0018"/><stop offset="1" stop-color="#ff000d"/></linearGradient>
<linearGradient id="r45" gradientUnits="userSpaceOnUse" x1="990" x2="1598"><stop offset="0" stop-color="#00ffb1"/><stop offset="0.1184" stop-color="#00ffc8"/><stop offset="0.2155" stop-color="#00ffe4"/><stop offset="0.2467" stop-color="#3cfff0"/><stop offset="0.2812" stop-color="#90ffff"/><stop offset="0.3257" stop-color="#ffe7fc"/><stop offset="0.3405" stop-color="#ffc1da"/><stop offset="0.3569" stop-color="#ffa1bd"/><stop offset="0.3766" stop-color="#ff83a2"/><stop offset="0.398" stop-color="#ff6a8b"/><stop offset="0.4523" stop-color="#ff4065"/><stop offset="0.5214" stop-color="#ff2148"/><stop offset="0.5905" stop-color="#ff0e36"/><stop offset="0.6711" stop-color="#ff0028"/><stop offset="0.8125" stop-color="#ff0019"/><stop offset="1" stop-color="#ff000e"/></linearGradient>
<linearGradient id="r46" gradientUnits="userSpaceOnUse" x1="991" x2="1596"><stop offset="0" stop-color="#00ffb7"/><stop offset="0.119" stop-color="#00ffcf"/><stop offset="0.2165" stop-color="#01ffed"/><stop offset="0.238" stop-color="#2afff5"/><stop offset="0.2612" stop-color="#5dffff"/><stop offset="0.3289" stop-color="#ffdcfd"/><stop offset="0.3438" stop-color="#ffb9dc"/><stop offset="0.362" stop-color="#ff97bc"/><stop offset="0.3818" stop-color="#ff7ba2"/><stop offset="0.4033" stop-color="#ff648c"/><stop offset="0.4579" stop-color="#ff3c66"/><stop offset="0.5273" stop-color="#ff1f49"/><stop offset="0.5934" stop-color="#ff0d38"/><stop offset="0.6694" stop-color="#ff002b"/><stop offset="0.8116" stop-color="#ff001b"/><stop offset="1" stop-color="#ff000f"/></linearGradient>
<linearGradient id="r47" gradientUnits="userSpaceOnUse" x1="991" x2="1594"><stop offset="0" stop-color="#00ffbd"/><stop offset="0.1194" stop-color="#00ffd6"/><stop offset="0.2172" stop-color="#00fff6"/><stop offset="0.2388" stop-color="#29ffff"/><stop offset="0.2687" stop-color="#68f2ff"/><stop offset="0.3333" stop-color="#ffd2fe"/><stop offset="0.3483" stop-color="#ffb1dd"/><stop offset="0.3665" stop-color="#ff91be"/><stop offset="0.3864" stop-color="#ff76a4"/><stop offset="0.408" stop-color="#ff608e"/><stop offset="0.4627" stop-color="#ff3a68"/><stop offset="0.5323" stop-color="#ff1d4b"/><stop offset="0.5954" stop-color="#ff0c3a"/><stop offset="0.6683" stop-color="#ff002d"/><stop offset="0.8109" stop-color="#ff001d"/><stop offset="1" stop-color="#ff0010"/></linearGradient>
<linearGradient id="r48" gradientUnits="userSpaceOnUse" x1="992" x2="1591"><stop offset="0" stop-color="#00ffc2"/><stop offset="0.1185" stop-color="#0fd"/><stop offset="0.217" stop-color="#0ff"/><stop offset="0.2387" stop-color="#27f6ff"/><stop offset="0.2705" stop-color="#67e8ff"/><stop offset="0.3372" stop-color="#ffc9ff"/><stop offset="0.3523" stop-color="#ffa9de"/><stop offset="0.3706" stop-color="#ff8bc0"/><stop offset="0.3907" stop-color="#ff71a6"/><stop offset="0.414" stop-color="#ff5b8e"/><stop offset="0.4691" stop-color="#ff3669"/><stop offset="0.5392" stop-color="#ff1a4c"/><stop offset="0.6678" stop-color="#ff002f"/><stop offset="0.8114" stop-color="#ff001e"/><stop offset="1" stop-color="#ff0012"/></linearGradient>
<linearGradient id="r49" gradientUnits="userSpaceOnUse" x1="993" x2="1589"><stop offset="0" stop-color="#00ffc8"/><stop offset="0.1057" stop-color="#00ffe1"/><stop offset="0.1946" stop-color="#0ff"/><stop offset="0.2181" stop-color="#01f6ff"/><stop offset="0.2752" stop-color="#6edeff"/><stop offset="0.3406" stop-color="#ffc0ff"/><stop offset="0.3574" stop-color="#ff9fdc"/><stop offset="0.3742" stop-color="#ff85c1"/><stop offset="0.3943" stop-color="#ff6da8"/><stop offset="0.4178" stop-color="#ff5790"/><stop offset="0.4732" stop-color="#ff346b"/><stop offset="0.5436" stop-color="#ff194e"/><stop offset="0.6661" stop-color="#ff0032"/><stop offset="0.8087" stop-color="#ff0020"/><stop offset="1" stop-color="#ff0013"/></linearGradient>
<linearGradient id="r50" gradientUnits="userSpaceOnUse" x1="994" x2="1587"><stop offset="0" stop-color="#00ffcf"/><stop offset="0.09275" stop-color="#00ffe5"/><stop offset="0.172" stop-color="#0ff"/><stop offset="0.2175" stop-color="#0ef"/><stop offset="0.2715" stop-color="#63d7ff"/><stop offset="0.3457" stop-color="#ffb4fc"/><stop offset="0.3609" stop-color="#ff98de"/><stop offset="0.3794" stop-color="#ff7dc0"/><stop offset="0.4233" stop-color="#ff5291"/><stop offset="0.4789" stop-color="#ff306c"/><stop offset="0.5514" stop-color="#ff164f"/><stop offset="0.6644" stop-color="#ff0034"/><stop offset="0.8078" stop-color="#f02"/><stop offset="1" stop-color="#ff0014"/></linearGradient>
<linearGradient id="r51" gradientUnits="userSpaceOnUse" x1="994" x2="1585"><stop offset="0" stop-color="#00ffd5"/><stop offset="0.1506" stop-color="#0ff"/><stop offset="0.2183" stop-color="#00e6ff"/><stop offset="0.2403" stop-color="#24ddff"/><stop offset="0.2741" stop-color="#62cfff"/><stop offset="0.3503" stop-color="#ffacfd"/><stop offset="0.3655" stop-color="#ff91df"/><stop offset="0.3824" stop-color="#ff7ac4"/><stop offset="0.423" stop-color="#ff5297"/><stop offset="0.4738" stop-color="#ff3373"/><stop offset="0.5364" stop-color="#ff1a57"/><stop offset="0.6633" stop-color="#ff0037"/><stop offset="0.8071" stop-color="#ff0024"/><stop offset="1" stop-color="#ff0015"/></linearGradient>
<linearGradient id="r52" gradientUnits="userSpaceOnUse" x1="995" x2="1583"><stop offset="0" stop-color="#00ffdb"/><stop offset="0.1276" stop-color="#0ff"/><stop offset="0.2194" stop-color="#01ddff"/><stop offset="0.2789" stop-color="#68c6ff"/><stop offset="0.3537" stop-color="#ffa4fd"/><stop offset="0.369" stop-color="#ff8be0"/><stop offset="0.3861" stop-color="#ff75c6"/><stop offset="0.4269" stop-color="#ff4e99"/><stop offset="0.4779" stop-color="#ff3075"/><stop offset="0.5408" stop-color="#ff1959"/><stop offset="0.6616" stop-color="#ff003a"/><stop offset="0.8061" stop-color="#ff0026"/><stop offset="1" stop-color="#ff0017"/></linearGradient>
<linearGradient id="r53" gradientUnits="userSpaceOnUse" x1="996" x2="1581"><stop offset="0" stop-color="#00ffe1"/><stop offset="0.106" stop-color="#0ff"/><stop offset="0.2188" stop-color="#00d6ff"/><stop offset="0.2803" stop-color="#68beff"/><stop offset="0.3573" stop-color="#ff9dfe"/><stop offset="0.3897" stop-color="#ff70c7"/><stop offset="0.4308" stop-color="#ff4b9b"/><stop offset="0.4821" stop-color="#ff2e77"/><stop offset="0.5453" stop-color="#ff175a"/><stop offset="0.6598" stop-color="#ff003c"/><stop offset="0.8051" stop-color="#ff0027"/><stop offset="1" stop-color="#ff0018"/></linearGradient>
<linearGradient id="r54" gradientUnits="userSpaceOnUse" x1="997" x2="1579"><stop offset="0" stop-color="#00ffe8"/><stop offset="0.08247" stop-color="#0ff"/><stop offset="0.2182" stop-color="#00cfff"/><stop offset="0.2423" stop-color="#24c6ff"/><stop offset="0.2818" stop-color="#67b7ff"/><stop offset="0.3608" stop-color="#ff96ff"/><stop offset="0.3935" stop-color="#ff6bc9"/><stop offset="0.4347" stop-color="#ff479c"/><stop offset="0.4863" stop-color="#ff2b78"/><stop offset="0.5498" stop-color="#ff155c"/><stop offset="0.6581" stop-color="#ff003f"/><stop offset="0.8041" stop-color="#ff0029"/><stop offset="1" stop-color="#ff0019"/></linearGradient>
<linearGradient id="r55" gradientUnits="userSpaceOnUse" x1="997" x2="1577"><stop offset="0" stop-color="#0fe"/><stop offset="0.06034" stop-color="#0ff"/><stop offset="0.2207" stop-color="#01c8ff"/><stop offset="0.2879" stop-color="#6dafff"/><stop offset="0.3655" stop-color="#ff8fff"/><stop offset="0.4" stop-color="#ff64c8"/><stop offset="0.4414" stop-color="#ff439c"/><stop offset="0.4931" stop-color="#ff2879"/><stop offset="0.5552" stop-color="#ff145e"/><stop offset="0.6569" stop-color="#ff0042"/><stop offset="0.8034" stop-color="#ff002b"/><stop offset="1" stop-color="#ff001a"/></linearGradient>
<linearGradient id="r56" gradientUnits="userSpaceOnUse" x1="998" x2="1574"><stop offset="0" stop-color="#00fff5"/><stop offset="0.03646" stop-color="#0ff"/><stop offset="0.2205" stop-color="#00c2ff"/><stop offset="0.2847" stop-color="#64aaff"/><stop offset="0.3715" stop-color="#ff86fc"/><stop offset="0.4045" stop-color="#ff60c9"/><stop offset="0.4462" stop-color="#ff409e"/><stop offset="0.4983" stop-color="#ff267b"/><stop offset="0.5608" stop-color="#ff125f"/><stop offset="0.6545" stop-color="#ff0045"/><stop offset="0.7344" stop-color="#ff0036"/><stop offset="1" stop-color="#ff001c"/></linearGradient>
<linearGradient id="r57" gradientUnits="userSpaceOnUse" x1="999" x2="1572"><stop offset="0" stop-color="#00fffc"/><stop offset="0.05934" stop-color="#00f1ff"/><stop offset="0.2199" stop-color="#00bcff"/><stop offset="0.2443" stop-color="#21b3ff"/><stop offset="0.2862" stop-color="#63a4ff"/><stop offset="0.3752" stop-color="#ff80fd"/><stop offset="0.4101" stop-color="#ff5ac8"/><stop offset="0.452" stop-color="#ff3c9e"/><stop offset="0.5026" stop-color="#ff247c"/><stop offset="0.5654" stop-color="#ff1061"/><stop offset="0.6527" stop-color="#ff0048"/><stop offset="0.7382" stop-color="#ff0038"/><stop offset="1" stop-color="#ff001d"/></linearGradient>
<linearGradient id="r58" gradientUnits="userSpaceOnUse" x1="1000" x2="1570"><stop offset="0" stop-color="#00fbff"/><stop offset="0.2211" stop-color="#00b6ff"/><stop offset="0.2912" stop-color="#689dff"/><stop offset="0.3789" stop-color="#ff7afe"/><stop offset="0.414" stop-color="#ff56c9"/><stop offset="0.4561" stop-color="#ff39a0"/><stop offset="0.507" stop-color="#ff227e"/><stop offset="0.5702" stop-color="#ff0f62"/><stop offset="0.6509" stop-color="#ff004b"/><stop offset="0.7421" stop-color="#ff0039"/><stop offset="1" stop-color="#ff001f"/></linearGradient>
<linearGradient id="r59" gradientUnits="userSpaceOnUse" x1="1001" x2="1568"><stop offset="0" stop-color="#00f5ff"/><stop offset="0.2205" stop-color="#00b0ff"/><stop offset="0.2928" stop-color="#6897ff"/><stop offset="0.3827" stop-color="#ff74fe"/><stop offset="0.418" stop-color="#ff52cb"/><stop offset="0.4603" stop-color="#ff36a1"/><stop offset="0.5115" stop-color="#ff1f80"/><stop offset="0.575" stop-color="#ff0d64"/><stop offset="0.649" stop-color="#ff004e"/><stop offset="0.746" stop-color="#ff003b"/><stop offset="1" stop-color="#ff0020"/></linearGradient>
<linearGradient id="r60" gradientUnits="userSpaceOnUse" x1="1002" x2="1566"><stop offset="0" stop-color="#0ef"/><stop offset="0.2216" stop-color="#01abff"/><stop offset="0.2979" stop-color="#6d90ff"/><stop offset="0.3865" stop-color="#ff6fff"/><stop offset="0.422" stop-color="#ff4ecc"/><stop offset="0.4645" stop-color="#ff33a3"/><stop offset="0.516" stop-color="#ff1d81"/><stop offset="0.578" stop-color="#ff0c66"/><stop offset="0.6472" stop-color="#ff0051"/><stop offset="0.7482" stop-color="#ff003d"/><stop offset="1" stop-color="#ff0021"/></linearGradient>
<linearGradient id="r61" gradientUnits="userSpaceOnUse" x1="1002" x2="1564"><stop offset="0" stop-color="#00e8ff"/><stop offset="0.2224" stop-color="#00a6ff"/><stop offset="0.3007" stop-color="#6d8bff"/><stop offset="0.3915" stop-color="#ff6aff"/><stop offset="0.427" stop-color="#ff4acd"/><stop offset="0.4698" stop-color="#ff30a4"/><stop offset="0.5214" stop-color="#ff1b83"/><stop offset="0.5836" stop-color="#ff0b67"/><stop offset="0.6459" stop-color="#ff0054"/><stop offset="0.7509" stop-color="#ff003e"/><stop offset="1" stop-color="#ff0023"/></linearGradient>
<linearGradient id="r62" gradientUnits="userSpaceOnUse" x1="1003" x2="1562"><stop offset="0" stop-color="#00e2ff"/><stop offset="0.2218" stop-color="#00a1ff"/><stop offset="0.297" stop-color="#6488ff"/><stop offset="0.3971" stop-color="#ff63fd"/><stop offset="0.4329" stop-color="#ff45cc"/><stop offset="0.4758" stop-color="#ff2da4"/><stop offset="0.5277" stop-color="#ff1983"/><stop offset="0.5886" stop-color="#ff0969"/><stop offset="0.644" stop-color="#ff0057"/><stop offset="0.7549" stop-color="#ff0040"/><stop offset="1" stop-color="#ff0024"/></linearGradient>
<linearGradient id="r63" gradientUnits="userSpaceOnUse" x1="1004" x2="1560"><stop offset="0" stop-color="#00dcff"/><stop offset="0.223" stop-color="#019bff"/><stop offset="0.3022" stop-color="#6982ff"/><stop offset="0.4011" stop-color="#ff5efd"/><stop offset="0.4371" stop-color="#ff42cd"/><stop offset="0.4802" stop-color="#ff2aa5"/><stop offset="0.5324" stop-color="#ff1785"/><stop offset="0.5935" stop-color="#ff086a"/><stop offset="0.6421" stop-color="#ff005b"/><stop offset="0.759" stop-color="#ff0041"/><stop offset="1" stop-color="#ff0026"/></linearGradient>
<linearGradient id="r64" gradientUnits="userSpaceOnUse" x1="1005" x2="1557"><stop offset="0" stop-color="#00d7ff"/><stop offset="0.2228" stop-color="#0097ff"/><stop offset="0.3043" stop-color="#697dff"/><stop offset="0.4058" stop-color="#ff5afe"/><stop offset="0.442" stop-color="#ff3ece"/><stop offset="0.4837" stop-color="#ff28a8"/><stop offset="0.5362" stop-color="#ff1687"/><stop offset="0.5978" stop-color="#ff076c"/><stop offset="0.6413" stop-color="#ff005e"/><stop offset="0.7627" stop-color="#ff0043"/><stop offset="1" stop-color="#ff0027"/></linearGradient>
<linearGradient id="r65" gradientUnits="userSpaceOnUse" x1="1006" x2="1555"><stop offset="0" stop-color="#00d1ff"/><stop offset="0.2222" stop-color="#0093ff"/><stop offset="0.2568" stop-color="#2888ff"/><stop offset="0.306" stop-color="#6878ff"/><stop offset="0.4098" stop-color="#ff55fe"/><stop offset="0.4463" stop-color="#ff3bcf"/><stop offset="0.49" stop-color="#ff25a8"/><stop offset="0.541" stop-color="#ff1488"/><stop offset="0.6029" stop-color="#ff066d"/><stop offset="0.6375" stop-color="#ff0062"/><stop offset="0.765" stop-color="#ff0045"/><stop offset="1" stop-color="#ff0029"/></linearGradient>
<linearGradient id="r66" gradientUnits="userSpaceOnUse" x1="1007" x2="1553"><stop offset="0" stop-color="#0cf"/><stop offset="0.2234" stop-color="#018eff"/><stop offset="0.3114" stop-color="#6d73ff"/><stop offset="0.4139" stop-color="#ff51ff"/><stop offset="0.4505" stop-color="#ff38d0"/><stop offset="0.4927" stop-color="#ff24ab"/><stop offset="0.544" stop-color="#ff138b"/><stop offset="0.6062" stop-color="#ff056f"/><stop offset="0.6355" stop-color="#f06"/><stop offset="0.7674" stop-color="#ff0047"/><stop offset="1" stop-color="#ff002a"/></linearGradient>
<linearGradient id="r67" gradientUnits="userSpaceOnUse" x1="1008" x2="1551"><stop offset="0" stop-color="#00c7ff"/><stop offset="0.2228" stop-color="#008aff"/><stop offset="0.3131" stop-color="#6c6fff"/><stop offset="0.418" stop-color="#ff4dff"/><stop offset="0.4549" stop-color="#ff35d1"/><stop offset="0.4991" stop-color="#ff20ab"/><stop offset="0.5506" stop-color="#ff108b"/><stop offset="0.6114" stop-color="#ff0371"/><stop offset="0.6851" stop-color="#ff005a"/><stop offset="0.7716" stop-color="#ff0048"/><stop offset="1" stop-color="#ff002c"/></linearGradient>
<linearGradient id="r68" gradientUnits="userSpaceOnUse" x1="1009" x2="1549"><stop offset="0" stop-color="#00c2ff"/><stop offset="0.2222" stop-color="#0086ff"/><stop offset="0.3093" stop-color="#656cff"/><stop offset="0.4241" stop-color="#ff47fd"/><stop offset="0.4611" stop-color="#ff31d0"/><stop offset="0.5037" stop-color="#ff1eac"/><stop offset="0.5556" stop-color="#ff0f8c"/><stop offset="0.6167" stop-color="#ff0272"/><stop offset="0.6889" stop-color="#ff005c"/><stop offset="0.7759" stop-color="#ff004a"/><stop offset="1" stop-color="#ff002d"/></linearGradient>
<linearGradient id="r69" gradientUnits="userSpaceOnUse" x1="1009" x2="1547"><stop offset="0" stop-color="#00bdff"/><stop offset="0.2249" stop-color="#0182ff"/><stop offset="0.316" stop-color="#6967ff"/><stop offset="0.4294" stop-color="#ff43fd"/><stop offset="0.4665" stop-color="#ff2ed1"/><stop offset="0.5093" stop-color="#ff1cad"/><stop offset="0.5595" stop-color="#ff0d8f"/><stop offset="0.6208" stop-color="#ff0174"/><stop offset="0.6933" stop-color="#ff005e"/><stop offset="0.7788" stop-color="#ff004b"/><stop offset="1" stop-color="#ff002f"/></linearGradient>
<linearGradient id="r70" gradientUnits="userSpaceOnUse" x1="1010" x2="1545"><stop offset="0" stop-color="#00b9ff"/><stop offset="0.2243" stop-color="#007fff"/><stop offset="0.3178" stop-color="#6964ff"/><stop offset="0.4336" stop-color="#ff40fe"/><stop offset="0.471" stop-color="#ff2bd2"/><stop offset="0.514" stop-color="#ff1aae"/><stop offset="0.5664" stop-color="#ff0b8f"/><stop offset="0.6262" stop-color="#ff0075"/><stop offset="0.6972" stop-color="#ff0060"/><stop offset="0.7813" stop-color="#ff004d"/><stop offset="1" stop-color="#ff0030"/></linearGradient>
<linearGradient id="r71" gradientUnits="userSpaceOnUse" x1="1011" x2="1543"><stop offset="0" stop-color="#00b4ff"/><stop offset="0.2237" stop-color="#007bff"/><stop offset="0.2632" stop-color="#2870ff"/><stop offset="0.3195" stop-color="#6860ff"/><stop offset="0.438" stop-color="#ff3cfe"/><stop offset="0.4756" stop-color="#ff28d3"/><stop offset="0.5188" stop-color="#ff18af"/><stop offset="0.5695" stop-color="#ff0a91"/><stop offset="0.6297" stop-color="#f07"/><stop offset="0.7011" stop-color="#ff0061"/><stop offset="0.7838" stop-color="#ff004f"/><stop offset="1" stop-color="#ff0032"/></linearGradient>
<linearGradient id="r72" gradientUnits="userSpaceOnUse" x1="1012" x2="1540"><stop offset="0" stop-color="#00b0ff"/><stop offset="0.2254" stop-color="#0177ff"/><stop offset="0.3258" stop-color="#6c5bff"/><stop offset="0.4432" stop-color="#ff39ff"/><stop offset="0.4792" stop-color="#ff26d6"/><stop offset="0.5227" stop-color="#ff16b2"/><stop offset="0.5739" stop-color="#ff0993"/><stop offset="0.6345" stop-color="#ff0079"/><stop offset="0.7045" stop-color="#ff0063"/><stop offset="0.7879" stop-color="#ff0051"/><stop offset="1" stop-color="#ff0034"/></linearGradient>
<linearGradient id="r73" gradientUnits="userSpaceOnUse" x1="1013" x2="1538"><stop offset="0" stop-color="#00abff"/><stop offset="0.2248" stop-color="#0074ff"/><stop offset="0.3276" stop-color="#6c58ff"/><stop offset="0.4476" stop-color="#ff35ff"/><stop offset="0.4857" stop-color="#ff23d5"/><stop offset="0.5295" stop-color="#ff14b2"/><stop offset="0.581" stop-color="#ff0793"/><stop offset="0.64" stop-color="#ff007a"/><stop offset="0.7105" stop-color="#ff0065"/><stop offset="0.7924" stop-color="#ff0052"/><stop offset="1" stop-color="#ff0035"/></linearGradient>
<linearGradient id="r74" gradientUnits="userSpaceOnUse" x1="1014" x2="1536"><stop offset="0" stop-color="#00a7ff"/><stop offset="0.2261" stop-color="#0170ff"/><stop offset="0.3257" stop-color="#6756ff"/><stop offset="0.454" stop-color="#ff31fd"/><stop offset="0.4904" stop-color="#ff20d6"/><stop offset="0.5345" stop-color="#ff12b3"/><stop offset="0.5862" stop-color="#ff0695"/><stop offset="0.6456" stop-color="#ff007c"/><stop offset="0.7146" stop-color="#f06"/><stop offset="0.795" stop-color="#ff0054"/><stop offset="1" stop-color="#ff0037"/></linearGradient>
<linearGradient id="r75" gradientUnits="userSpaceOnUse" x1="1015" x2="1534"><stop offset="0" stop-color="#00a3ff"/><stop offset="0.2254" stop-color="#006dff"/><stop offset="0.3295" stop-color="#6952ff"/><stop offset="0.4586" stop-color="#ff2efe"/><stop offset="0.4952" stop-color="#ff1ed7"/><stop offset="0.5395" stop-color="#ff10b4"/><stop offset="0.6146" stop-color="#ff008b"/><stop offset="0.6493" stop-color="#ff007d"/><stop offset="0.7187" stop-color="#ff0068"/><stop offset="0.7977" stop-color="#ff0056"/><stop offset="1" stop-color="#ff0039"/></linearGradient>
<linearGradient id="r76" gradientUnits="userSpaceOnUse" x1="1016" x2="1532"><stop offset="0" stop-color="#009fff"/><stop offset="0.2248" stop-color="#006bff"/><stop offset="0.3314" stop-color="#694fff"/><stop offset="0.4632" stop-color="#ff2bfe"/><stop offset="0.5" stop-color="#ff1cd7"/><stop offset="0.5446" stop-color="#ff0eb5"/><stop offset="0.6143" stop-color="#ff008f"/><stop offset="0.6531" stop-color="#ff007f"/><stop offset="0.7209" stop-color="#ff006a"/><stop offset="0.8004" stop-color="#ff0058"/><stop offset="1" stop-color="#ff003a"/></linearGradient>
<linearGradient id="r77" gradientUnits="userSpaceOnUse" x1="1017" x2="1530"><stop offset="0" stop-color="#009bff"/><stop offset="0.2261" stop-color="#0167ff"/><stop offset="0.3372" stop-color="#6c4bff"/><stop offset="0.4678" stop-color="#ff28fe"/><stop offset="0.5049" stop-color="#ff19d8"/><stop offset="0.5478" stop-color="#ff0db7"/><stop offset="0.6121" stop-color="#ff0093"/><stop offset="0.6569" stop-color="#ff0081"/><stop offset="0.8031" stop-color="#ff0059"/><stop offset="1" stop-color="#ff003c"/></linearGradient>
<linearGradient id="r78" gradientUnits="userSpaceOnUse" x1="1018" x2="1528"><stop offset="0" stop-color="#0098ff"/><stop offset="0.2255" stop-color="#0065ff"/><stop offset="0.3392" stop-color="#6c48ff"/><stop offset="0.4725" stop-color="#ff25ff"/><stop offset="0.5098" stop-color="#ff17d9"/><stop offset="0.5549" stop-color="#ff0ab7"/><stop offset="0.6098" stop-color="#ff0098"/><stop offset="0.6627" stop-color="#ff0082"/><stop offset="0.8078" stop-color="#ff005b"/><stop offset="1" stop-color="#ff003e"/></linearGradient>
<linearGradient id="r79" gradientUnits="userSpaceOnUse" x1="1019" x2="1526"><stop offset="0" stop-color="#0094ff"/><stop offset="0.2249" stop-color="#0062ff"/><stop offset="0.2742" stop-color="#2b56ff"/><stop offset="0.3412" stop-color="#6c46ff"/><stop offset="0.4773" stop-color="#f2f"/><stop offset="0.5148" stop-color="#ff15da"/><stop offset="0.5582" stop-color="#ff09b9"/><stop offset="0.6075" stop-color="#ff009d"/><stop offset="0.6667" stop-color="#ff0084"/><stop offset="0.8087" stop-color="#ff005d"/><stop offset="1" stop-color="#ff0040"/></linearGradient>
<linearGradient id="r80" gradientUnits="userSpaceOnUse" x1="1020" x2="1523"><stop offset="0" stop-color="#0090ff"/><stop offset="0.2266" stop-color="#015fff"/><stop offset="0.34" stop-color="#6744ff"/><stop offset="0.4851" stop-color="#ff1ffd"/><stop offset="0.5229" stop-color="#ff12d9"/><stop offset="0.5666" stop-color="#ff07b9"/><stop offset="0.6064" stop-color="#ff00a2"/><stop offset="0.672" stop-color="#ff0086"/><stop offset="0.8131" stop-color="#ff005f"/><stop offset="1" stop-color="#ff0042"/></linearGradient>
<linearGradient id="r81" gradientUnits="userSpaceOnUse" x1="1021" x2="1521"><stop offset="0" stop-color="#008dff"/><stop offset="0.226" stop-color="#005cff"/><stop offset="0.344" stop-color="#6941ff"/><stop offset="0.49" stop-color="#ff1cfe"/><stop offset="0.528" stop-color="#ff10d9"/><stop offset="0.57" stop-color="#ff06bb"/><stop offset="0.604" stop-color="#ff00a7"/><stop offset="0.676" stop-color="#f08"/><stop offset="0.816" stop-color="#ff0061"/><stop offset="1" stop-color="#f04"/></linearGradient>
<linearGradient id="r82" gradientUnits="userSpaceOnUse" x1="1022" x2="1519"><stop offset="0" stop-color="#008aff"/><stop offset="0.2254" stop-color="#005aff"/><stop offset="0.3461" stop-color="#693eff"/><stop offset="0.495" stop-color="#ff1afe"/><stop offset="0.5332" stop-color="#ff0eda"/><stop offset="0.5755" stop-color="#ff04bc"/><stop offset="0.6258" stop-color="#ff00a0"/><stop offset="0.6821" stop-color="#ff0089"/><stop offset="0.8189" stop-color="#ff0063"/><stop offset="1" stop-color="#ff0045"/></linearGradient>
<linearGradient id="r83" gradientUnits="userSpaceOnUse" x1="1023" x2="1517"><stop offset="0" stop-color="#0086ff"/><stop offset="0.2267" stop-color="#0157ff"/><stop offset="0.3522" stop-color="#6c3bff"/><stop offset="0.5" stop-color="#ff17fe"/><stop offset="0.5385" stop-color="#ff0cdb"/><stop offset="0.581" stop-color="#ff03bd"/><stop offset="0.6296" stop-color="#ff00a2"/><stop offset="0.6862" stop-color="#ff008b"/><stop offset="0.8219" stop-color="#ff0065"/><stop offset="1" stop-color="#ff0047"/></linearGradient>
<linearGradient id="r84" gradientUnits="userSpaceOnUse" x1="1024" x2="1515"><stop offset="0" stop-color="#0083ff"/><stop offset="0.2261" stop-color="#05f"/><stop offset="0.3544" stop-color="#6c38ff"/><stop offset="0.5051" stop-color="#ff15ff"/><stop offset="0.5438" stop-color="#ff0adc"/><stop offset="0.5866" stop-color="#ff01be"/><stop offset="0.6354" stop-color="#ff00a3"/><stop offset="0.6904" stop-color="#ff008c"/><stop offset="0.8248" stop-color="#f06"/><stop offset="1" stop-color="#ff0049"/></linearGradient>
<linearGradient id="r85" gradientUnits="userSpaceOnUse" x1="1025" x2="1513"><stop offset="0" stop-color="#0080ff"/><stop offset="0.2254" stop-color="#0053ff"/><stop offset="0.2807" stop-color="#2a47ff"/><stop offset="0.3566" stop-color="#6b36ff"/><stop offset="0.5102" stop-color="#ff13ff"/><stop offset="0.5492" stop-color="#ff08dc"/><stop offset="0.5902" stop-color="#ff00c0"/><stop offset="0.6393" stop-color="#ff00a5"/><stop offset="0.6947" stop-color="#ff008e"/><stop offset="0.8279" stop-color="#ff0068"/><stop offset="1" stop-color="#ff004b"/></linearGradient>
<linearGradient id="r86" gradientUnits="userSpaceOnUse" x1="1026" x2="1511"><stop offset="0" stop-color="#007dff"/><stop offset="0.2268" stop-color="#0150ff"/><stop offset="0.3567" stop-color="#6934ff"/><stop offset="0.5175" stop-color="#ff10fd"/><stop offset="0.5546" stop-color="#ff07dd"/><stop offset="0.5979" stop-color="#ff00bf"/><stop offset="0.6454" stop-color="#ff00a6"/><stop offset="0.701" stop-color="#ff008f"/><stop offset="0.833" stop-color="#ff006a"/><stop offset="1" stop-color="#ff004d"/></linearGradient>
<linearGradient id="r87" gradientUnits="userSpaceOnUse" x1="1027" x2="1509"><stop offset="0" stop-color="#007aff"/><stop offset="0.2261" stop-color="#004eff"/><stop offset="0.3589" stop-color="#6932ff"/><stop offset="0.5228" stop-color="#ff0efe"/><stop offset="0.5602" stop-color="#ff05de"/><stop offset="0.6037" stop-color="#ff00c0"/><stop offset="0.7054" stop-color="#ff0091"/><stop offset="0.834" stop-color="#ff006c"/><stop offset="1" stop-color="#ff004f"/></linearGradient>
<linearGradient id="r88" gradientUnits="userSpaceOnUse" x1="1028" x2="1506"><stop offset="0" stop-color="#07f"/><stop offset="0.228" stop-color="#014cff"/><stop offset="0.364" stop-color="#6a2fff"/><stop offset="0.5293" stop-color="#ff0cfe"/><stop offset="0.5669" stop-color="#ff03de"/><stop offset="0.6088" stop-color="#ff00c2"/><stop offset="0.7092" stop-color="#ff0093"/><stop offset="0.8368" stop-color="#ff006e"/><stop offset="1" stop-color="#ff0051"/></linearGradient>
<linearGradient id="r89" gradientUnits="userSpaceOnUse" x1="1029" x2="1504"><stop offset="0" stop-color="#0074ff"/><stop offset="0.2274" stop-color="#004aff"/><stop offset="0.3684" stop-color="#6c2dff"/><stop offset="0.5347" stop-color="#ff0aff"/><stop offset="0.5811" stop-color="#ff00d9"/><stop offset="0.6147" stop-color="#ff00c3"/><stop offset="0.7137" stop-color="#ff0095"/><stop offset="0.84" stop-color="#ff0070"/><stop offset="1" stop-color="#ff0054"/></linearGradient>
<linearGradient id="r90" gradientUnits="userSpaceOnUse" x1="1030" x2="1502"><stop offset="0" stop-color="#0072ff"/><stop offset="0.2267" stop-color="#0048ff"/><stop offset="0.3708" stop-color="#6b2bff"/><stop offset="0.5403" stop-color="#ff08ff"/><stop offset="0.5784" stop-color="#ff00df"/><stop offset="0.6186" stop-color="#ff00c5"/><stop offset="0.7182" stop-color="#ff0097"/><stop offset="0.8432" stop-color="#ff0072"/><stop offset="1" stop-color="#ff0056"/></linearGradient>
<linearGradient id="r91" gradientUnits="userSpaceOnUse" x1="1032" x2="1500"><stop offset="0" stop-color="#006fff"/><stop offset="0.2265" stop-color="#0145ff"/><stop offset="0.3739" stop-color="#6d29ff"/><stop offset="0.5449" stop-color="#ff06ff"/><stop offset="0.5748" stop-color="#ff00e6"/><stop offset="0.6239" stop-color="#ff00c6"/><stop offset="0.7222" stop-color="#ff0098"/><stop offset="0.8462" stop-color="#ff0074"/><stop offset="1" stop-color="#ff0058"/></linearGradient>
<linearGradient id="r92" gradientUnits="userSpaceOnUse" x1="1033" x2="1498"><stop offset="0" stop-color="#006cff"/><stop offset="0.2258" stop-color="#04f"/><stop offset="0.3763" stop-color="#6d27ff"/><stop offset="0.5505" stop-color="#fe04ff"/><stop offset="0.6301" stop-color="#ff00c7"/><stop offset="0.7269" stop-color="#ff009a"/><stop offset="0.8495" stop-color="#ff0076"/><stop offset="1" stop-color="#ff005a"/></linearGradient>
<linearGradient id="r93" gradientUnits="userSpaceOnUse" x1="1034" x2="1496"><stop offset="0" stop-color="#006aff"/><stop offset="0.2251" stop-color="#0042ff"/><stop offset="0.3745" stop-color="#6926ff"/><stop offset="0.5584" stop-color="#ff02fe"/><stop offset="0.6364" stop-color="#ff00c7"/><stop offset="0.7316" stop-color="#ff009c"/><stop offset="0.8506" stop-color="#ff0079"/><stop offset="1" stop-color="#ff005c"/></linearGradient>
<linearGradient id="r94" gradientUnits="userSpaceOnUse" x1="1035" x2="1494"><stop offset="0" stop-color="#0067ff"/><stop offset="0.2266" stop-color="#0140ff"/><stop offset="0.3813" stop-color="#6c23ff"/><stop offset="0.5643" stop-color="#ff00fe"/><stop offset="0.6405" stop-color="#ff00c9"/><stop offset="0.7364" stop-color="#ff009e"/><stop offset="0.854" stop-color="#ff007b"/><stop offset="1" stop-color="#ff005e"/></linearGradient>
<linearGradient id="r95" gradientUnits="userSpaceOnUse" x1="1036" x2="1492"><stop offset="0" stop-color="#0065ff"/><stop offset="0.2259" stop-color="#003eff"/><stop offset="0.3838" stop-color="#6c21ff"/><stop offset="0.5702" stop-color="#f0f"/><stop offset="0.6469" stop-color="#ff00ca"/><stop offset="0.7412" stop-color="#ff009f"/><stop offset="0.8575" stop-color="#ff007d"/><stop offset="1" stop-color="#ff0060"/></linearGradient>
<linearGradient id="r96" gradientUnits="userSpaceOnUse" x1="1037" x2="1489"><stop offset="0" stop-color="#0062ff"/><stop offset="0.2257" stop-color="#003cff"/><stop offset="0.3872" stop-color="#6b20ff"/><stop offset="0.5774" stop-color="#f0f"/><stop offset="0.6549" stop-color="#ff00cb"/><stop offset="0.7478" stop-color="#ff00a1"/><stop offset="0.8606" stop-color="#ff007f"/><stop offset="1" stop-color="#ff0063"/></linearGradient>
<linearGradient id="r97" gradientUnits="userSpaceOnUse" x1="1038" x2="1487"><stop offset="0" stop-color="#0060ff"/><stop offset="0.2272" stop-color="#013aff"/><stop offset="0.392" stop-color="#6d1dff"/><stop offset="0.5568" stop-color="#e900ff"/><stop offset="0.5835" stop-color="#f0f"/><stop offset="0.6592" stop-color="#ff00cd"/><stop offset="0.7528" stop-color="#ff00a3"/><stop offset="0.8641" stop-color="#ff0081"/><stop offset="1" stop-color="#ff0065"/></linearGradient>
<linearGradient id="r98" gradientUnits="userSpaceOnUse" x1="1039" x2="1485"><stop offset="0" stop-color="#005eff"/><stop offset="0.2265" stop-color="#0039ff"/><stop offset="0.3946" stop-color="#6c1cff"/><stop offset="0.5538" stop-color="#e200ff"/><stop offset="0.5897" stop-color="#fe00ff"/><stop offset="0.6659" stop-color="#ff00cd"/><stop offset="0.7578" stop-color="#ff00a4"/><stop offset="0.8677" stop-color="#ff0083"/><stop offset="1" stop-color="#ff0068"/></linearGradient>
<linearGradient id="r99" gradientUnits="userSpaceOnUse" x1="1041" x2="1483"><stop offset="0" stop-color="#005bff"/><stop offset="0.224" stop-color="#0037ff"/><stop offset="0.3914" stop-color="#691bff"/><stop offset="0.5498" stop-color="#db00ff"/><stop offset="0.5973" stop-color="#ff00fe"/><stop offset="0.6719" stop-color="#ff00ce"/><stop offset="0.7624" stop-color="#ff00a6"/><stop offset="0.871" stop-color="#ff0085"/><stop offset="1" stop-color="#ff006a"/></linearGradient>
<linearGradient id="r100" gradientUnits="userSpaceOnUse" x1="1042" x2="1481"><stop offset="0" stop-color="#0059ff"/><stop offset="0.2255" stop-color="#0135ff"/><stop offset="0.3986" stop-color="#6c19ff"/><stop offset="0.5467" stop-color="#d500ff"/><stop offset="0.6036" stop-color="#ff00fe"/><stop offset="0.6765" stop-color="#ff00d0"/><stop offset="0.7654" stop-color="#ff00a8"/><stop offset="0.8724" stop-color="#f08"/><stop offset="1" stop-color="#ff006d"/></linearGradient>
<linearGradient id="r101" gradientUnits="userSpaceOnUse" x1="1043" x2="1479"><stop offset="0" stop-color="#0057ff"/><stop offset="0.2248" stop-color="#0034ff"/><stop offset="0.4014" stop-color="#6b17ff"/><stop offset="0.5436" stop-color="#ce00ff"/><stop offset="0.6101" stop-color="#f0f"/><stop offset="0.6835" stop-color="#ff00d0"/><stop offset="0.7706" stop-color="#f0a"/><stop offset="0.8761" stop-color="#ff008a"/><stop offset="1" stop-color="#ff006f"/></linearGradient>
<linearGradient id="r102" gradientUnits="userSpaceOnUse" x1="1044" x2="1477"><stop offset="0" stop-color="#05f"/><stop offset="0.2263" stop-color="#0132ff"/><stop offset="0.3695" stop-color="#551bff"/><stop offset="0.5404" stop-color="#c800ff"/><stop offset="0.6166" stop-color="#f0f"/><stop offset="0.6905" stop-color="#ff00d1"/><stop offset="0.776" stop-color="#ff00ac"/><stop offset="0.8776" stop-color="#ff008c"/><stop offset="1" stop-color="#ff0071"/></linearGradient>
<linearGradient id="r103" gradientUnits="userSpaceOnUse" x1="1045" x2="1475"><stop offset="0" stop-color="#0053ff"/><stop offset="0.2256" stop-color="#0131ff"/><stop offset="0.3674" stop-color="#521bff"/><stop offset="0.5372" stop-color="#c200ff"/><stop offset="0.6233" stop-color="#f0f"/><stop offset="0.6953" stop-color="#ff00d3"/><stop offset="0.7814" stop-color="#ff00ad"/><stop offset="0.8814" stop-color="#ff008e"/><stop offset="1" stop-color="#ff0074"/></linearGradient>
<linearGradient id="r104" gradientUnits="userSpaceOnUse" x1="1047" x2="1473"><stop offset="0" stop-color="#0050ff"/><stop offset="0.223" stop-color="#002fff"/><stop offset="0.3615" stop-color="#4e1aff"/><stop offset="0.5305" stop-color="#ba00ff"/><stop offset="0.6291" stop-color="#f0f"/><stop offset="0.7019" stop-color="#ff00d3"/><stop offset="0.7864" stop-color="#ff00af"/><stop offset="0.885" stop-color="#ff0090"/><stop offset="1" stop-color="#f07"/></linearGradient>
<linearGradient id="r105" gradientUnits="userSpaceOnUse" x1="1048" x2="1470"><stop offset="0" stop-color="#004eff"/><stop offset="0.2251" stop-color="#012eff"/><stop offset="0.3626" stop-color="#4c19ff"/><stop offset="0.5284" stop-color="#b400ff"/><stop offset="0.6398" stop-color="#ff00fe"/><stop offset="0.7085" stop-color="#ff00d5"/><stop offset="0.7915" stop-color="#ff00b1"/><stop offset="0.8886" stop-color="#ff0093"/><stop offset="1" stop-color="#ff007a"/></linearGradient>
<linearGradient id="r106" gradientUnits="userSpaceOnUse" x1="1049" x2="1468"><stop offset="0" stop-color="#004cff"/><stop offset="0.2243" stop-color="#002dff"/><stop offset="0.3604" stop-color="#4a18ff"/><stop offset="0.5251" stop-color="#af00ff"/><stop offset="0.6468" stop-color="#ff00fe"/><stop offset="0.716" stop-color="#ff00d6"/><stop offset="0.7971" stop-color="#ff00b3"/><stop offset="0.8902" stop-color="#ff0096"/><stop offset="1" stop-color="#ff007c"/></linearGradient>
<linearGradient id="r107" gradientUnits="userSpaceOnUse" x1="1050" x2="1466"><stop offset="0" stop-color="#004bff"/><stop offset="0.2236" stop-color="#002bff"/><stop offset="0.3582" stop-color="#4718ff"/><stop offset="0.5216" stop-color="#a900ff"/><stop offset="0.6538" stop-color="#f0f"/><stop offset="0.7212" stop-color="#ff00d8"/><stop offset="0.8005" stop-color="#ff00b5"/><stop offset="0.8918" stop-color="#ff0098"/><stop offset="1" stop-color="#ff007f"/></linearGradient>
<linearGradient id="r108" gradientUnits="userSpaceOnUse" x1="1051" x2="1464"><stop offset="0" stop-color="#0049ff"/><stop offset="0.2252" stop-color="#012aff"/><stop offset="0.3559" stop-color="#4417ff"/><stop offset="0.5182" stop-color="#a400ff"/><stop offset="0.661" stop-color="#f0f"/><stop offset="0.7288" stop-color="#ff00d8"/><stop offset="0.8063" stop-color="#ff00b7"/><stop offset="0.8959" stop-color="#ff009a"/><stop offset="1" stop-color="#ff0082"/></linearGradient>
<linearGradient id="r109" gradientUnits="userSpaceOnUse" x1="1053" x2="1462"><stop offset="0" stop-color="#0047ff"/><stop offset="0.2225" stop-color="#0029ff"/><stop offset="0.3521" stop-color="#4216ff"/><stop offset="0.5134" stop-color="#9e00ff"/><stop offset="0.6675" stop-color="#f0f"/><stop offset="0.7359" stop-color="#ff00d9"/><stop offset="0.8117" stop-color="#ff00b9"/><stop offset="0.8998" stop-color="#ff009d"/><stop offset="1" stop-color="#ff0085"/></linearGradient>
<linearGradient id="r110" gradientUnits="userSpaceOnUse" x1="1054" x2="1460"><stop offset="0" stop-color="#0045ff"/><stop offset="0.2217" stop-color="#0027ff"/><stop offset="0.3498" stop-color="#3f16ff"/><stop offset="0.5099" stop-color="#90f"/><stop offset="0.6749" stop-color="#f0f"/><stop offset="0.7414" stop-color="#ff00da"/><stop offset="0.8153" stop-color="#f0b"/><stop offset="0.9015" stop-color="#ff009f"/><stop offset="1" stop-color="#ff0087"/></linearGradient>
<linearGradient id="r111" gradientUnits="userSpaceOnUse" x1="1055" x2="1458"><stop offset="0" stop-color="#0043ff"/><stop offset="0.2233" stop-color="#0126ff"/><stop offset="0.3499" stop-color="#3e15ff"/><stop offset="0.5062" stop-color="#9400ff"/><stop offset="0.6849" stop-color="#ff00fe"/><stop offset="0.7494" stop-color="#ff00db"/><stop offset="0.8213" stop-color="#ff00bd"/><stop offset="0.9057" stop-color="#ff00a1"/><stop offset="1" stop-color="#ff008a"/></linearGradient>
<linearGradient id="r112" gradientUnits="userSpaceOnUse" x1="1056" x2="1456"><stop offset="0" stop-color="#0041ff"/><stop offset="0.2225" stop-color="#0025ff"/><stop offset="0.3475" stop-color="#3c14ff"/><stop offset="0.5025" stop-color="#8f00ff"/><stop offset="0.69" stop-color="#fe00ff"/><stop offset="0.7575" stop-color="#ff00db"/><stop offset="0.8275" stop-color="#ff00be"/><stop offset="0.9075" stop-color="#ff00a4"/><stop offset="1" stop-color="#ff008d"/></linearGradient>
<linearGradient id="r113" gradientUnits="userSpaceOnUse" x1="1058" x2="1453"><stop offset="0" stop-color="#003fff"/><stop offset="0.2203" stop-color="#0024ff"/><stop offset="0.3418" stop-color="#3814ff"/><stop offset="0.4987" stop-color="#8a00ff"/><stop offset="0.6987" stop-color="#fe00ff"/><stop offset="0.7671" stop-color="#ff00dc"/><stop offset="0.8329" stop-color="#ff00c1"/><stop offset="1" stop-color="#ff0091"/></linearGradient>
<linearGradient id="r114" gradientUnits="userSpaceOnUse" x1="1059" x2="1451"><stop offset="0" stop-color="#003eff"/><stop offset="0.2219" stop-color="#0122ff"/><stop offset="0.3418" stop-color="#3713ff"/><stop offset="0.4949" stop-color="#8600ff"/><stop offset="0.7092" stop-color="#f0f"/><stop offset="0.7704" stop-color="#ff00df"/><stop offset="0.8367" stop-color="#ff00c3"/><stop offset="1" stop-color="#ff0094"/></linearGradient>
<linearGradient id="r115" gradientUnits="userSpaceOnUse" x1="1060" x2="1449"><stop offset="0" stop-color="#003cff"/><stop offset="0.2211" stop-color="#0021ff"/><stop offset="0.3393" stop-color="#3512ff"/><stop offset="0.4884" stop-color="#8000ff"/><stop offset="0.7172" stop-color="#f0f"/><stop offset="0.7763" stop-color="#ff00e0"/><stop offset="0.8432" stop-color="#ff00c5"/><stop offset="1" stop-color="#ff0097"/></linearGradient>
<linearGradient id="r116" gradientUnits="userSpaceOnUse" x1="1061" x2="1447"><stop offset="0" stop-color="#003bff"/><stop offset="0.2228" stop-color="#0120ff"/><stop offset="0.3394" stop-color="#3412ff"/><stop offset="0.4845" stop-color="#7c00ff"/><stop offset="0.7254" stop-color="#f0f"/><stop offset="0.8497" stop-color="#ff00c6"/><stop offset="1" stop-color="#ff009a"/></linearGradient>
<linearGradient id="r117" gradientUnits="userSpaceOnUse" x1="1063" x2="1445"><stop offset="0" stop-color="#0039ff"/><stop offset="0.2199" stop-color="#011fff"/><stop offset="0.3325" stop-color="#3111ff"/><stop offset="0.4791" stop-color="#70f"/><stop offset="0.733" stop-color="#fe00ff"/><stop offset="0.8534" stop-color="#ff00c9"/><stop offset="1" stop-color="#ff009d"/></linearGradient>
<linearGradient id="r118" gradientUnits="userSpaceOnUse" x1="1064" x2="1443"><stop offset="0" stop-color="#0037ff"/><stop offset="0.219" stop-color="#001eff"/><stop offset="0.3298" stop-color="#2f11ff"/><stop offset="0.4749" stop-color="#7300ff"/><stop offset="0.7414" stop-color="#fe00ff"/><stop offset="0.8602" stop-color="#ff00ca"/><stop offset="1" stop-color="#ff00a0"/></linearGradient>
<linearGradient id="r119" gradientUnits="userSpaceOnUse" x1="1065" x2="1441"><stop offset="0" stop-color="#0036ff"/><stop offset="0.2207" stop-color="#011dff"/><stop offset="0.4707" stop-color="#6f00ff"/><stop offset="0.75" stop-color="#fe00ff"/><stop offset="0.867" stop-color="#f0c"/><stop offset="1" stop-color="#ff00a4"/></linearGradient>
<linearGradient id="r120" gradientUnits="userSpaceOnUse" x1="1067" x2="1439"><stop offset="0" stop-color="#0034ff"/><stop offset="0.2177" stop-color="#011cff"/><stop offset="0.4651" stop-color="#6b00ff"/><stop offset="0.7608" stop-color="#f0f"/><stop offset="0.8683" stop-color="#ff00cf"/><stop offset="1" stop-color="#ff00a7"/></linearGradient>
<linearGradient id="r121" gradientUnits="userSpaceOnUse" x1="1068" x2="1436"><stop offset="0" stop-color="#03f"/><stop offset="0.2174" stop-color="#001bff"/><stop offset="0.462" stop-color="#6700ff"/><stop offset="0.7717" stop-color="#f0f"/><stop offset="0.8777" stop-color="#ff00d1"/><stop offset="1" stop-color="#ff00ab"/></linearGradient>
<linearGradient id="r122" gradientUnits="userSpaceOnUse" x1="1069" x2="1434"><stop offset="0" stop-color="#0031ff"/><stop offset="0.2192" stop-color="#011aff"/><stop offset="0.4575" stop-color="#6300ff"/><stop offset="0.7808" stop-color="#f0f"/><stop offset="0.8822" stop-color="#ff00d3"/><stop offset="1" stop-color="#ff00af"/></linearGradient>
<linearGradient id="r123" gradientUnits="userSpaceOnUse" x1="1071" x2="1432"><stop offset="0" stop-color="#002fff"/><stop offset="0.2161" stop-color="#0019ff"/><stop offset="0.4515" stop-color="#5f00ff"/><stop offset="0.7895" stop-color="#fe00ff"/><stop offset="0.8892" stop-color="#ff00d5"/><stop offset="1" stop-color="#ff00b2"/></linearGradient>
<linearGradient id="r124" gradientUnits="userSpaceOnUse" x1="1072" x2="1430"><stop offset="0" stop-color="#002eff"/><stop offset="0.2179" stop-color="#0118ff"/><stop offset="0.4469" stop-color="#5b00ff"/><stop offset="0.6229" stop-color="#a0f"/><stop offset="0.7989" stop-color="#fe00ff"/><stop offset="0.8966" stop-color="#ff00d6"/><stop offset="1" stop-color="#ff00b6"/></linearGradient>
<linearGradient id="r125" gradientUnits="userSpaceOnUse" x1="1073" x2="1428"><stop offset="0" stop-color="#002dff"/><stop offset="0.2169" stop-color="#0117ff"/><stop offset="0.4394" stop-color="#5700ff"/><stop offset="0.6225" stop-color="#a600ff"/><stop offset="0.8085" stop-color="#fe00ff"/><stop offset="0.9014" stop-color="#ff00d9"/><stop offset="1" stop-color="#ff00b9"/></linearGradient>
<linearGradient id="r126" gradientUnits="userSpaceOnUse" x1="1074" x2="1426"><stop offset="0" stop-color="#002bff"/><stop offset="0.2159" stop-color="#0016ff"/><stop offset="0.4347" stop-color="#5300ff"/><stop offset="0.625" stop-color="#a400ff"/><stop offset="0.821" stop-color="#f0f"/><stop offset="0.9034" stop-color="#ff00dc"/><stop offset="1" stop-color="#ff00bd"/></linearGradient>
<linearGradient id="r127" gradientUnits="userSpaceOnUse" x1="1076" x2="1424"><stop offset="0" stop-color="#002aff"/><stop offset="0.2126" stop-color="#0015ff"/><stop offset="0.4282" stop-color="#5000ff"/><stop offset="0.6264" stop-color="#a200ff"/><stop offset="0.8305" stop-color="#f0f"/><stop offset="0.9109" stop-color="#ff00de"/><stop offset="1" stop-color="#ff00c1"/></linearGradient>
<linearGradient id="r128" gradientUnits="userSpaceOnUse" x1="1077" x2="1422"><stop offset="0" stop-color="#0029ff"/><stop offset="0.2145" stop-color="#0114ff"/><stop offset="0.4232" stop-color="#4c00ff"/><stop offset="0.629" stop-color="#a000ff"/><stop offset="0.8406" stop-color="#f0f"/><stop offset="0.9188" stop-color="#ff00df"/><stop offset="1" stop-color="#ff00c5"/></linearGradient>
<linearGradient id="r129" gradientUnits="userSpaceOnUse" x1="1078" x2="1419"><stop offset="0" stop-color="#0027ff"/><stop offset="0.2141" stop-color="#0013ff"/><stop offset="0.4194" stop-color="#4900ff"/><stop offset="0.6334" stop-color="#9f00ff"/><stop offset="0.8534" stop-color="#fe00ff"/><stop offset="1" stop-color="#ff00ca"/></linearGradient>
<linearGradient id="r130" gradientUnits="userSpaceOnUse" x1="1080" x2="1417"><stop offset="0" stop-color="#0026ff"/><stop offset="0.2107" stop-color="#0012ff"/><stop offset="0.4125" stop-color="#4600ff"/><stop offset="0.635" stop-color="#9d00ff"/><stop offset="0.8635" stop-color="#fe00ff"/><stop offset="1" stop-color="#ff00ce"/></linearGradient>
<linearGradient id="r131" gradientUnits="userSpaceOnUse" x1="1081" x2="1415"><stop offset="0" stop-color="#0025ff"/><stop offset="0.2126" stop-color="#0111ff"/><stop offset="0.4072" stop-color="#4300ff"/><stop offset="0.6347" stop-color="#9a00ff"/><stop offset="0.8772" stop-color="#f0f"/><stop offset="1" stop-color="#ff00d2"/></linearGradient>
<linearGradient id="r132" gradientUnits="userSpaceOnUse" x1="1083" x2="1413"><stop offset="0" stop-color="#0023ff"/><stop offset="0.2091" stop-color="#01f"/><stop offset="0.4" stop-color="#3f00ff"/><stop offset="0.6394" stop-color="#90f"/><stop offset="0.8879" stop-color="#f0f"/><stop offset="1" stop-color="#ff00d6"/></linearGradient>
<linearGradient id="r133" gradientUnits="userSpaceOnUse" x1="1084" x2="1411"><stop offset="0" stop-color="#02f"/><stop offset="0.208" stop-color="#0010ff"/><stop offset="0.3945" stop-color="#3c00ff"/><stop offset="0.6422" stop-color="#9700ff"/><stop offset="0.8991" stop-color="#f0f"/><stop offset="1" stop-color="#ff00da"/></linearGradient>
<linearGradient id="r134" gradientUnits="userSpaceOnUse" x1="1085" x2="1409"><stop offset="0" stop-color="#0021ff"/><stop offset="0.2099" stop-color="#010fff"/><stop offset="0.3889" stop-color="#3900ff"/><stop offset="0.6451" stop-color="#9600ff"/><stop offset="0.9105" stop-color="#f0f"/><stop offset="1" stop-color="#ff00df"/></linearGradient>
<linearGradient id="r135" gradientUnits="userSpaceOnUse" x1="1087" x2="1407"><stop offset="0" stop-color="#0020ff"/><stop offset="0.2062" stop-color="#000eff"/><stop offset="0.3812" stop-color="#3700ff"/><stop offset="0.6469" stop-color="#9400ff"/><stop offset="0.9219" stop-color="#fe00ff"/><stop offset="1" stop-color="#ff00e3"/></linearGradient>
<linearGradient id="r136" gradientUnits="userSpaceOnUse" x1="1088" x2="1405"><stop offset="0" stop-color="#001fff"/><stop offset="0.2082" stop-color="#010dff"/><stop offset="0.3722" stop-color="#30f"/><stop offset="0.6467" stop-color="#9100ff"/><stop offset="0.9338" stop-color="#fe00ff"/><stop offset="1" stop-color="#ff00e8"/></linearGradient>
<linearGradient id="r137" gradientUnits="userSpaceOnUse" x1="1089" x2="1402"><stop offset="0" stop-color="#001dff"/><stop offset="0.2109" stop-color="#010cff"/><stop offset="0.3674" stop-color="#3000ff"/><stop offset="0.6518" stop-color="#8f00ff"/><stop offset="0.9489" stop-color="#fe00ff"/><stop offset="1" stop-color="#ff00ed"/></linearGradient>
<linearGradient id="r138" gradientUnits="userSpaceOnUse" x1="1091" x2="1400"><stop offset="0" stop-color="#001cff"/><stop offset="0.2104" stop-color="#020bff"/><stop offset="0.3592" stop-color="#2d00ff"/><stop offset="0.5631" stop-color="#6f00ff"/><stop offset="0.9644" stop-color="#f0f"/><stop offset="1" stop-color="#ff00f2"/></linearGradient>
<linearGradient id="r139" gradientUnits="userSpaceOnUse" x1="1092" x2="1398"><stop offset="0" stop-color="#001bff"/><stop offset="0.2124" stop-color="#020bff"/><stop offset="0.3529" stop-color="#2a00ff"/><stop offset="0.6569" stop-color="#8c00ff"/><stop offset="0.9771" stop-color="#f0f"/><stop offset="1" stop-color="#ff00f7"/></linearGradient>
<linearGradient id="r140" gradientUnits="userSpaceOnUse" x1="1094" x2="1396"><stop offset="0" stop-color="#001aff"/><stop offset="0.1987" stop-color="#000bff"/><stop offset="0.2152" stop-color="#0409ff"/><stop offset="0.3444" stop-color="#2800ff"/><stop offset="0.5464" stop-color="#60f"/><stop offset="0.9901" stop-color="#f0f"/><stop offset="1" stop-color="#ff00fc"/></linearGradient>
<linearGradient id="r141" gradientUnits="userSpaceOnUse" x1="1095" x2="1394"><stop offset="0" stop-color="#0019ff"/><stop offset="0.1973" stop-color="#000aff"/><stop offset="0.2174" stop-color="#0409ff"/><stop offset="0.3378" stop-color="#2500ff"/><stop offset="0.5853" stop-color="#7000ff"/><stop offset="1" stop-color="#fd00ff"/></linearGradient>
<linearGradient id="r142" gradientUnits="userSpaceOnUse" x1="1097" x2="1392"><stop offset="0" stop-color="#0018ff"/><stop offset="0.1966" stop-color="#0009ff"/><stop offset="0.2169" stop-color="#0508ff"/><stop offset="0.3288" stop-color="#2300ff"/><stop offset="0.5864" stop-color="#6f00ff"/><stop offset="1" stop-color="#f800ff"/></linearGradient>
<linearGradient id="r143" gradientUnits="userSpaceOnUse" x1="1098" x2="1390"><stop offset="0" stop-color="#0017ff"/><stop offset="0.1952" stop-color="#0009ff"/><stop offset="0.2158" stop-color="#0407ff"/><stop offset="0.3219" stop-color="#2000ff"/><stop offset="0.5856" stop-color="#6d00ff"/><stop offset="1" stop-color="#f300ff"/></linearGradient>
<linearGradient id="r144" gradientUnits="userSpaceOnUse" x1="1100" x2="1388"><stop offset="0" stop-color="#0015ff"/><stop offset="0.191" stop-color="#0008ff"/><stop offset="0.2118" stop-color="#0407ff"/><stop offset="0.309" stop-color="#1d00ff"/><stop offset="0.5799" stop-color="#6900ff"/><stop offset="1" stop-color="#ef00ff"/></linearGradient>
<linearGradient id="r145" gradientUnits="userSpaceOnUse" x1="1101" x2="1385"><stop offset="0" stop-color="#0014ff"/><stop offset="0.1937" stop-color="#0007ff"/><stop offset="0.2148" stop-color="#0506ff"/><stop offset="0.3028" stop-color="#1a00ff"/><stop offset="0.581" stop-color="#6700ff"/><stop offset="1" stop-color="#e900ff"/></linearGradient>
<linearGradient id="r146" gradientUnits="userSpaceOnUse" x1="1102" x2="1383"><stop offset="0" stop-color="#0014ff"/><stop offset="0.1922" stop-color="#0007ff"/><stop offset="0.2135" stop-color="#0405ff"/><stop offset="0.2954" stop-color="#1800ff"/><stop offset="0.5801" stop-color="#6500ff"/><stop offset="1" stop-color="#e400ff"/></linearGradient>
<linearGradient id="r147" gradientUnits="userSpaceOnUse" x1="1104" x2="1381"><stop offset="0" stop-color="#0012ff"/><stop offset="0.1877" stop-color="#0006ff"/><stop offset="0.2094" stop-color="#0405ff"/><stop offset="0.2852" stop-color="#1600ff"/><stop offset="0.5776" stop-color="#6300ff"/><stop offset="1" stop-color="#e000ff"/></linearGradient>
<linearGradient id="r148" gradientUnits="userSpaceOnUse" x1="1106" x2="1379"><stop offset="0" stop-color="#01f"/><stop offset="0.1868" stop-color="#0005ff"/><stop offset="0.2088" stop-color="#0404ff"/><stop offset="0.2747" stop-color="#1400ff"/><stop offset="0.5788" stop-color="#6200ff"/><stop offset="1" stop-color="#db00ff"/></linearGradient>
<linearGradient id="r149" gradientUnits="userSpaceOnUse" x1="1107" x2="1377"><stop offset="0" stop-color="#0010ff"/><stop offset="0.1852" stop-color="#0005ff"/><stop offset="0.2074" stop-color="#0403ff"/><stop offset="0.5778" stop-color="#6000ff"/><stop offset="1" stop-color="#d700ff"/></linearGradient>
<linearGradient id="r150" gradientUnits="userSpaceOnUse" x1="1109" x2="1375"><stop offset="0" stop-color="#000fff"/><stop offset="0.1842" stop-color="#0004ff"/><stop offset="0.2068" stop-color="#0503ff"/><stop offset="0.5752" stop-color="#5e00ff"/><stop offset="1" stop-color="#d300ff"/></linearGradient>
<linearGradient id="r151" gradientUnits="userSpaceOnUse" x1="1110" x2="1373"><stop offset="0" stop-color="#000eff"/><stop offset="0.1825" stop-color="#0004ff"/><stop offset="0.2053" stop-color="#0402ff"/><stop offset="0.5741" stop-color="#5c00ff"/><stop offset="1" stop-color="#ce00ff"/></linearGradient>
<linearGradient id="r152" gradientUnits="userSpaceOnUse" x1="1112" x2="1371"><stop offset="0" stop-color="#000dff"/><stop offset="0.1776" stop-color="#0003ff"/><stop offset="0.2008" stop-color="#0402ff"/><stop offset="0.5714" stop-color="#5a00ff"/><stop offset="1" stop-color="#ca00ff"/></linearGradient>
<linearGradient id="r153" gradientUnits="userSpaceOnUse" x1="1113" x2="1368"><stop offset="0" stop-color="#000dff"/><stop offset="0.1804" stop-color="#0002ff"/><stop offset="0.2" stop-color="#0401ff"/><stop offset="0.5686" stop-color="#5700ff"/><stop offset="1" stop-color="#c500ff"/></linearGradient>
<linearGradient id="r154" gradientUnits="userSpaceOnUse" x1="1115" x2="1366"><stop offset="0" stop-color="#000cff"/><stop offset="0.1753" stop-color="#0002ff"/><stop offset="0.1992" stop-color="#0401ff"/><stop offset="0.5697" stop-color="#5600ff"/><stop offset="1" stop-color="#c100ff"/></linearGradient>
<linearGradient id="r155" gradientUnits="userSpaceOnUse" x1="1116" x2="1364"><stop offset="0" stop-color="#000bff"/><stop offset="0.1734" stop-color="#0001ff"/><stop offset="0.1976" stop-color="#0400ff"/><stop offset="0.5685" stop-color="#5400ff"/><stop offset="1" stop-color="#bd00ff"/></linearGradient>
<linearGradient id="r156" gradientUnits="userSpaceOnUse" x1="1118" x2="1362"><stop offset="0" stop-color="#000aff"/><stop offset="0.1721" stop-color="#0001ff"/><stop offset="0.1967" stop-color="#0400ff"/><stop offset="0.5697" stop-color="#5300ff"/><stop offset="1" stop-color="#b900ff"/></linearGradient>
<linearGradient id="r157" gradientUnits="userSpaceOnUse" x1="1120" x2="1360"><stop offset="0" stop-color="#0009ff"/><stop offset="0.1667" stop-color="#00f"/><stop offset="0.1958" stop-color="#0500ff"/><stop offset="0.5667" stop-color="#5100ff"/><stop offset="1" stop-color="#b600ff"/></linearGradient>
<linearGradient id="r158" gradientUnits="userSpaceOnUse" x1="1121" x2="1358"><stop offset="0" stop-color="#0008ff"/><stop offset="0.1646" stop-color="#00f"/><stop offset="0.1941" stop-color="#0500ff"/><stop offset="0.5654" stop-color="#4f00ff"/><stop offset="1" stop-color="#b200ff"/></linearGradient>
<linearGradient id="r159" gradientUnits="userSpaceOnUse" x1="1123" x2="1356"><stop offset="0" stop-color="#0007ff"/><stop offset="0.1631" stop-color="#00f"/><stop offset="0.1931" stop-color="#0500ff"/><stop offset="0.5665" stop-color="#4e00ff"/><stop offset="1" stop-color="#ae00ff"/></linearGradient>
<linearGradient id="r160" gradientUnits="userSpaceOnUse" x1="1124" x2="1354"><stop offset="0" stop-color="#0006ff"/><stop offset="0.1609" stop-color="#00f"/><stop offset="0.1913" stop-color="#0500ff"/><stop offset="0.5652" stop-color="#4d00ff"/><stop offset="1" stop-color="#ab00ff"/></linearGradient>
<linearGradient id="r161" gradientUnits="userSpaceOnUse" x1="1126" x2="1351"><stop offset="0" stop-color="#0006ff"/><stop offset="0.1556" stop-color="#00f"/><stop offset="0.1867" stop-color="#0400ff"/><stop offset="0.56" stop-color="#4a00ff"/><stop offset="1" stop-color="#a600ff"/></linearGradient>
<linearGradient id="r162" gradientUnits="userSpaceOnUse" x1="1128" x2="1349"><stop offset="0" stop-color="#0005ff"/><stop offset="0.1538" stop-color="#00f"/><stop offset="0.1855" stop-color="#0500ff"/><stop offset="0.5611" stop-color="#4900ff"/><stop offset="1" stop-color="#a300ff"/></linearGradient>
<linearGradient id="r163" gradientUnits="userSpaceOnUse" x1="1130" x2="1347"><stop offset="0" stop-color="#0004ff"/><stop offset="0.1475" stop-color="#00f"/><stop offset="0.1843" stop-color="#0500ff"/><stop offset="0.5576" stop-color="#4700ff"/><stop offset="1" stop-color="#9f00ff"/></linearGradient>
<linearGradient id="r164" gradientUnits="userSpaceOnUse" x1="1131" x2="1345"><stop offset="0" stop-color="#0003ff"/><stop offset="0.1495" stop-color="#00f"/><stop offset="0.1822" stop-color="#0500ff"/><stop offset="0.5561" stop-color="#4600ff"/><stop offset="1" stop-color="#9c00ff"/></linearGradient>
<linearGradient id="r165" gradientUnits="userSpaceOnUse" x1="1133" x2="1343"><stop offset="0" stop-color="#0002ff"/><stop offset="0.1429" stop-color="#00f"/><stop offset="0.181" stop-color="#0500ff"/><stop offset="0.5571" stop-color="#4500ff"/><stop offset="1" stop-color="#9800ff"/></linearGradient>
<linearGradient id="r166" gradientUnits="userSpaceOnUse" x1="1135" x2="1341"><stop offset="0" stop-color="#0001ff"/><stop offset="0.1359" stop-color="#00f"/><stop offset="0.1796" stop-color="#0600ff"/><stop offset="0.5583" stop-color="#40f"/><stop offset="1" stop-color="#9500ff"/></linearGradient>
<linearGradient id="r167" gradientUnits="userSpaceOnUse" x1="1136" x2="1339"><stop offset="0" stop-color="#0001ff"/><stop offset="0.1379" stop-color="#00f"/><stop offset="0.1823" stop-color="#0600ff"/><stop offset="0.5567" stop-color="#4300ff"/><stop offset="1" stop-color="#9200ff"/></linearGradient>
<linearGradient id="r168" gradientUnits="userSpaceOnUse" x1="1138" x2="1337"><stop offset="0" stop-color="#00f"/><stop offset="0.1307" stop-color="#00f"/><stop offset="0.1809" stop-color="#0700ff"/><stop offset="0.5578" stop-color="#4200ff"/><stop offset="1" stop-color="#8f00ff"/></linearGradient>
<linearGradient id="r169" gradientUnits="userSpaceOnUse" x1="1140" x2="1334"><stop offset="0" stop-color="#00f"/><stop offset="0.1237" stop-color="#00f"/><stop offset="0.1804" stop-color="#0700ff"/><stop offset="0.5567" stop-color="#4000ff"/><stop offset="1" stop-color="#8b00ff"/></linearGradient>
<linearGradient id="r170" gradientUnits="userSpaceOnUse" x1="1142" x2="1332"><stop offset="0" stop-color="#00f"/><stop offset="0.1211" stop-color="#00f"/><stop offset="0.1789" stop-color="#0800ff"/><stop offset="0.5579" stop-color="#4000ff"/><stop offset="1" stop-color="#80f"/></linearGradient>
<linearGradient id="r171" gradientUnits="userSpaceOnUse" x1="1144" x2="1330"><stop offset="0" stop-color="#00f"/><stop offset="0.1129" stop-color="#00f"/><stop offset="0.1828" stop-color="#0900ff"/><stop offset="1" stop-color="#8500ff"/></linearGradient>
<linearGradient id="r172" gradientUnits="userSpaceOnUse" x1="1146" x2="1328"><stop offset="0" stop-color="#00f"/><stop offset="0.1099" stop-color="#00f"/><stop offset="0.1813" stop-color="#0900ff"/><stop offset="1" stop-color="#8200ff"/></linearGradient>
<linearGradient id="r173" gradientUnits="userSpaceOnUse" x1="1147" x2="1326"><stop offset="0" stop-color="#00f"/><stop offset="0.1061" stop-color="#00f"/><stop offset="0.1844" stop-color="#0900ff"/><stop offset="1" stop-color="#7f00ff"/></linearGradient>
<linearGradient id="r174" gradientUnits="userSpaceOnUse" x1="1149" x2="1324"><stop offset="0" stop-color="#00f"/><stop offset="0.09714" stop-color="#00f"/><stop offset="0.1886" stop-color="#0b00ff"/><stop offset="1" stop-color="#7c00ff"/></linearGradient>
<linearGradient id="r175" gradientUnits="userSpaceOnUse" x1="1151" x2="1322"><stop offset="0" stop-color="#00f"/><stop offset="0.09357" stop-color="#00f"/><stop offset="0.193" stop-color="#0c00ff"/><stop offset="1" stop-color="#7900ff"/></linearGradient>
<linearGradient id="r176" gradientUnits="userSpaceOnUse" x1="1153" x2="1320"><stop offset="0" stop-color="#00f"/><stop offset="0.08383" stop-color="#00f"/><stop offset="0.1976" stop-color="#0d00ff"/><stop offset="1" stop-color="#7600ff"/></linearGradient>
<linearGradient id="r177" gradientUnits="userSpaceOnUse" x1="1155" x2="1317"><stop offset="0" stop-color="#00f"/><stop offset="0.08025" stop-color="#00f"/><stop offset="0.2099" stop-color="#0f00ff"/><stop offset="1" stop-color="#7300ff"/></linearGradient>
<linearGradient id="r178" gradientUnits="userSpaceOnUse" x1="1157" x2="1315"><stop offset="0" stop-color="#00f"/><stop offset="0.06962" stop-color="#00f"/><stop offset="0.2215" stop-color="#1000ff"/><stop offset="1" stop-color="#7000ff"/></linearGradient>
<linearGradient id="r179" gradientUnits="userSpaceOnUse" x1="1159" x2="1313"><stop offset="0" stop-color="#00f"/><stop offset="0.05844" stop-color="#00f"/><stop offset="0.2338" stop-color="#1200ff"/><stop offset="1" stop-color="#6e00ff"/></linearGradient>
<linearGradient id="r180" gradientUnits="userSpaceOnUse" x1="1162" x2="1311"><stop offset="0" stop-color="#00f"/><stop offset="0.04698" stop-color="#00f"/><stop offset="0.2752" stop-color="#1700ff"/><stop offset="1" stop-color="#6b00ff"/></linearGradient>
<linearGradient id="r181" gradientUnits="userSpaceOnUse" x1="1164" x2="1309"><stop offset="0" stop-color="#00f"/><stop offset="0.3034" stop-color="#1b00ff"/><stop offset="1" stop-color="#6800ff"/></linearGradient>
<linearGradient id="r182" gradientUnits="userSpaceOnUse" x1="1166" x2="1307"><stop offset="0" stop-color="#00f"/><stop offset="0.3333" stop-color="#1e00ff"/><stop offset="1" stop-color="#60f"/></linearGradient>
<linearGradient id="r183" gradientUnits="userSpaceOnUse" x1="1168" x2="1305"><stop offset="0" stop-color="#00f"/><stop offset="0.3796" stop-color="#20f"/><stop offset="1" stop-color="#6300ff"/></linearGradient>
<linearGradient id="r184" gradientUnits="userSpaceOnUse" x1="1170" x2="1303"><stop offset="0" stop-color="#00f"/><stop offset="1" stop-color="#6100ff"/></linearGradient>
<linearGradient id="r185" gradientUnits="userSpaceOnUse" x1="1173" x2="1300"><stop offset="0" stop-color="#0200ff"/><stop offset="1" stop-color="#5e00ff"/></linearGradient>
<linearGradient id="r186" gradientUnits="userSpaceOnUse" x1="1175" x2="1298"><stop offset="0" stop-color="#0300ff"/><stop offset="1" stop-color="#5b00ff"/></linearGradient>
<linearGradient id="r187" gradientUnits="userSpaceOnUse" x1="1177" x2="1296"><stop offset="0" stop-color="#0400ff"/><stop offset="1" stop-color="#5900ff"/></linearGradient>
<linearGradient id="r188" gradientUnits="userSpaceOnUse" x1="1180" x2="1294"><stop offset="0" stop-color="#0500ff"/><stop offset="1" stop-color="#5600ff"/></linearGradient>
<linearGradient id="r189" gradientUnits="userSpaceOnUse" x1="1182" x2="1292"><stop offset="0" stop-color="#0600ff"/><stop offset="1" stop-color="#5400ff"/></linearGradient>
<linearGradient id="r190" gradientUnits="userSpaceOnUse" x1="1185" x2="1290"><stop offset="0" stop-color="#0800ff"/><stop offset="1" stop-color="#5200ff"/></linearGradient>
<linearGradient id="r191" gradientUnits="userSpaceOnUse" x1="1187" x2="1288"><stop offset="0" stop-color="#0900ff"/><stop offset="1" stop-color="#5000ff"/></linearGradient>
<linearGradient id="r192" gradientUnits="userSpaceOnUse" x1="1190" x2="1286"><stop offset="0" stop-color="#0b00ff"/><stop offset="1" stop-color="#4d00ff"/></linearGradient>
<linearGradient id="r193" gradientUnits="userSpaceOnUse" x1="1192" x2="1284"><stop offset="0" stop-color="#0c00ff"/><stop offset="1" stop-color="#4b00ff"/></linearGradient>
<linearGradient id="r194" gradientUnits="userSpaceOnUse" x1="1195" x2="1281"><stop offset="0" stop-color="#0d00ff"/><stop offset="1" stop-color="#4800ff"/></linearGradient>
<linearGradient id="r195" gradientUnits="userSpaceOnUse" x1="1198" x2="1279"><stop offset="0" stop-color="#0f00ff"/><stop offset="1" stop-color="#4600ff"/></linearGradient>
<linearGradient id="r196" gradientUnits="userSpaceOnUse" x1="1200" x2="1277"><stop offset="0" stop-color="#1000ff"/><stop offset="1" stop-color="#40f"/></linearGradient>
<linearGradient id="r197" gradientUnits="userSpaceOnUse" x1="1203" x2="1275"><stop offset="0" stop-color="#10f"/><stop offset="1" stop-color="#4200ff"/></linearGradient>
<linearGradient id="r198" gradientUnits="userSpaceOnUse" x1="1206" x2="1273"><stop offset="0" stop-color="#1300ff"/><stop offset="1" stop-color="#4000ff"/></linearGradient>
<linearGradient id="r199" gradientUnits="userSpaceOnUse" x1="1208" x2="1271"><stop offset="0" stop-color="#1400ff"/><stop offset="1" stop-color="#3e00ff"/></linearGradient>
<linearGradient id="r200" gradientUnits="userSpaceOnUse" x1="1211" x2="1269"><stop offset="0" stop-color="#1600ff"/><stop offset="1" stop-color="#3c00ff"/></linearGradient>
<linearGradient id="r201" gradientUnits="userSpaceOnUse" x1="1213" x2="1267"><stop offset="0" stop-color="#1600ff"/><stop offset="1" stop-color="#3a00ff"/></linearGradient>
<linearGradient id="r202" gradientUnits="userSpaceOnUse" x1="1216" x2="1264"><stop offset="0" stop-color="#1800ff"/><stop offset="1" stop-color="#3800ff"/></linearGradient>
<linearGradient id="r203" gradientUnits="userSpaceOnUse" x1="1219" x2="1262"><stop offset="0" stop-color="#1a00ff"/><stop offset="1" stop-color="#3600ff"/></linearGradient>
<linearGradient id="r204" gradientUnits="userSpaceOnUse" x1="1221" x2="1260"><stop offset="0" stop-color="#1a00ff"/><stop offset="1" stop-color="#3400ff"/></linearGradient>
<linearGradient id="r205" gradientUnits="userSpaceOnUse" x1="1224" x2="1258"><stop offset="0" stop-color="#1c00ff"/><stop offset="1" stop-color="#3200ff"/></linearGradient>
<linearGradient id="r206" gradientUnits="userSpaceOnUse" x1="1226" x2="1256"><stop offset="0" stop-color="#1d00ff"/><stop offset="1" stop-color="#3000ff"/></linearGradient>
<linearGradient id="r207" gradientUnits="userSpaceOnUse" x1="1229" x2="1254"><stop offset="0" stop-color="#1e00ff"/><stop offset="1" stop-color="#2e00ff"/></linearGradient>
<linearGradient id="r208" gradientUnits="userSpaceOnUse" x1="1232" x2="1252"><stop offset="0" stop-color="#2000ff"/><stop offset="1" stop-color="#2d00ff"/></linearGradient>
<linearGradient id="r209" gradientUnits="userSpaceOnUse" x1="1234" x2="1250"><stop offset="0" stop-color="#2100ff"/><stop offset="1" stop-color="#2b00ff"/></linearGradient>
<linearGradient id="gIn" gradientUnits="userSpaceOnUse" x1="1412.03" y1="349.46" x2="1582.97" y2="491.54"><stop offset="0" stop-color="#98ff00"/><stop offset="0.112613" stop-color="#a8ff00"/><stop offset="0.337838" stop-color="#e0ff18"/><stop offset="0.5" stop-color="#ffff20"/><stop offset="0.68018" stop-color="#ffd000"/><stop offset="1" stop-color="#ffa000"/></linearGradient>
<linearGradient id="gH1" x1="0" y1="0" x2="0" y2="1"><stop offset="0" stop-color="#2a2a2a"/><stop offset="1" stop-color="#3c3c3c"/></linearGradient>
<linearGradient id="gH2" x1="0" y1="0" x2="0" y2="1"><stop offset="0" stop-color="#1c1c1c"/><stop offset="1" stop-color="#0f0f0f"/></linearGradient>
<linearGradient id="gRd" x1="0" y1="0" x2="0" y2="1"><stop offset="0" stop-color="#4a4a4a"/><stop offset="1" stop-color="#3d3d3d"/></linearGradient>
<linearGradient id="gRl" x1="0" y1="0" x2="0" y2="1"><stop offset="0" stop-color="#858585"/><stop offset="1" stop-color="#757575"/></linearGradient>
<linearGradient id="gRh" x1="0" y1="0" x2="0" y2="1"><stop offset="0" stop-color="#303030"/><stop offset="1" stop-color="#1a1a1a"/></linearGradient>
<linearGradient id="gSB" x1="0" y1="0" x2="0" y2="1"><stop offset="0" stop-color="#9e9e9e"/><stop offset="1" stop-color="#686868"/></linearGradient>
<linearGradient id="gSw" x1="0" y1="0" x2="0" y2="1"><stop offset="0" stop-color="#000"/><stop offset="0.25" stop-color="#000"/></linearGradient>
<linearGradient id="gB1" x1="0" y1="0" x2="0" y2="1"><stop offset="0" stop-color="#a0a0a0"/><stop offset="1" stop-color="#686868"/></linearGradient>
<linearGradient id="gB2" x1="0" y1="0" x2="0" y2="1"><stop offset="0" stop-color="#9c9c9c"/><stop offset="1" stop-color="#7c7c7c"/></linearGradient>
<linearGradient id="gB3" x1="0" y1="0" x2="0" y2="1"><stop offset="0" stop-color="#8c8c8c"/><stop offset="1" stop-color="#686868"/></linearGradient>
<linearGradient id="gBd" x1="0" y1="0" x2="0" y2="1"><stop offset="0" stop-color="#484848"/><stop offset="1" stop-color="#282828"/></linearGradient>
<linearGradient id="gBN" x1="0" y1="0" x2="0" y2="1"><stop offset="0" stop-color="#a4a4a4"/><stop offset="1" stop-color="#7e7e7e"/></linearGradient>
<linearGradient id="gC1" x1="0" y1="0" x2="0" y2="1"><stop offset="0" stop-color="#6e6e6e"/><stop offset="1" stop-color="#a2a2a2"/></linearGradient>
<linearGradient id="gC2" x1="0" y1="0" x2="0" y2="1"><stop offset="0" stop-color="#2c2c2c"/><stop offset="1" stop-color="#3e3e3e"/></linearGradient>
<linearGradient id="gC3" x1="0" y1="0" x2="0" y2="1"><stop offset="0" stop-color="#7c7c7c"/><stop offset="1" stop-color="#b0b0b0"/></linearGradient>
</defs>
<rect x="0" y="0" width="1601" height="851" fill="#333"/>
<rect x="0" y="0" width="1601" height="35.5" fill="#242424"/>
<rect x="0" y="0" width="128.5" height="34.5" fill="url(#gTab)"/>
<line x1="78.5" y1="0" x2="78.5" y2="34" stroke="#8c8c8c" stroke-width="1"/>
<line x1="128.5" y1="0" x2="128.5" y2="34" stroke="#8c8c8c" stroke-width="1"/>
<text x="0.5" y="20.2" font-size="18" fill="#ececec" textLength="69.5" lengthAdjust="spacingAndGlyphs">History 1</text>
<circle cx="102.3" cy="15" r="14.5" fill="url(#gPlus)"/>
<line x1="98" y1="16.5" x2="107" y2="16.5" stroke="#a0a0a0" stroke-width="1"/>
<line x1="102.5" y1="12" x2="102.5" y2="21" stroke="#a0a0a0" stroke-width="1"/>
<rect x="815.5" y="-2" width="214.5" height="36.5" fill="url(#gPanel)"/>
<rect x="815.5" y="-2" width="9" height="36.5" fill="#0fd40f"/>
<line x1="976.5" y1="0" x2="976.5" y2="34.5" stroke="#3c3c3c" stroke-width="1.2"/>
<rect x="1039" y="-2" width="194.5" height="36.5" fill="url(#gPanel)"/>
<rect x="1039" y="-2" width="9" height="36.5" fill="#0fd40f"/>
<rect x="1243" y="-2" width="215" height="36.5" fill="url(#gPanel)"/>
<rect x="1243" y="-2" width="9" height="36.5" fill="#e4e400"/>
<circle cx="947.3" cy="12.3" r="14.3" fill="url(#gCirc)"/>
<path d="M940.0 10.0h14.6l-7.3 8z" fill="#f4f4f4"/>
<circle cx="1210" cy="12.3" r="14.3" fill="url(#gCirc)"/>
<path d="M1202.7 10.0h14.6l-7.3 8z" fill="#f4f4f4"/>
<circle cx="1433.8" cy="12.3" r="14.3" fill="url(#gCirc)"/>
<path d="M1426.5 10.0h14.6l-7.3 8z" fill="#f4f4f4"/>
<text x="829" y="6.3" font-size="14.8" fill="#ececec" textLength="97.5" lengthAdjust="spacingAndGlyphs">X-Rite i1Pro 2</text>
<text x="829" y="28.7" font-size="14.8" fill="#ececec" textLength="83.5" lengthAdjust="spacingAndGlyphs">Direct View</text>
<text x="1052" y="6.3" font-size="14.8" fill="#ececec" textLength="96" lengthAdjust="spacingAndGlyphs">Mobile Forge</text>
<text x="1256.5" y="6.3" font-size="14.8" fill="#ececec" textLength="157" lengthAdjust="spacingAndGlyphs">Direct Display Control</text>
<circle cx="1006.8" cy="12.3" r="18.6" fill="#0000ee" stroke="#fff" stroke-width="1.6"/>
<text x="1006.8" y="16.8" font-size="12.5" fill="#fff" text-anchor="middle" textLength="22.5" lengthAdjust="spacingAndGlyphs" stroke="#fff" stroke-width="0.3">123</text>
<rect x="1462.6" y="-10" width="50" height="41.2" rx="6" fill="url(#gBtn)" stroke="#d0d0d0" stroke-width="1.3"/>
<rect x="1517" y="-10" width="50" height="41.2" rx="6" fill="url(#gBtn)" stroke="#d0d0d0" stroke-width="1.3"/>
<rect x="1570.5" y="-10" width="50" height="41.2" rx="6" fill="url(#gBtn)" stroke="#d0d0d0" stroke-width="1.3"/>
<circle cx="1488" cy="11.5" r="15" fill="url(#gCircBtn)"/>
<circle cx="1542" cy="11.5" r="15" fill="url(#gCircBtn)"/>
<circle cx="1595.5" cy="11.5" r="15" fill="url(#gCircBtn)"/>
<g transform="translate(1488,10.3)" fill="#d8d8d8"><rect x="-1.65" y="-9.6" width="3.3" height="4" rx="0.7" transform="rotate(0)"/><rect x="-1.65" y="-9.6" width="3.3" height="4" rx="0.7" transform="rotate(45)"/><rect x="-1.65" y="-9.6" width="3.3" height="4" rx="0.7" transform="rotate(90)"/><rect x="-1.65" y="-9.6" width="3.3" height="4" rx="0.7" transform="rotate(135)"/><rect x="-1.65" y="-9.6" width="3.3" height="4" rx="0.7" transform="rotate(180)"/><rect x="-1.65" y="-9.6" width="3.3" height="4" rx="0.7" transform="rotate(225)"/><rect x="-1.65" y="-9.6" width="3.3" height="4" rx="0.7" transform="rotate(270)"/><rect x="-1.65" y="-9.6" width="3.3" height="4" rx="0.7" transform="rotate(315)"/></g><circle cx="1488" cy="10.3" r="5.5" fill="none" stroke="#d8d8d8" stroke-width="2.4"/>
<text x="1542" y="19.3" font-size="22" fill="#fff" text-anchor="middle" textLength="13" lengthAdjust="spacingAndGlyphs" font-weight="bold">?</text>
<path d="M1587 9.7L1595.5 2.3V17.1z" fill="#fff"/>
<text x="14.3" y="87.5" font-size="35" fill="#f2f2f2" textLength="229.5" lengthAdjust="spacingAndGlyphs">ColorChecker</text>
<text x="14.5" y="114.3" font-size="14.5" fill="#f2f2f2" textLength="324" lengthAdjust="spacingAndGlyphs">Display analysis is performed with the X-Rite/</text>
<text x="14.5" y="134.3" font-size="14.5" fill="#f2f2f2" textLength="265.5" lengthAdjust="spacingAndGlyphs">Pantone ColorChecker<tspan font-size="8.5" dy="-5.5">®</tspan><tspan dy="5.5"> target colors.</tspan></text>
<text x="174" y="170" font-size="13.5" fill="#d0d0d0" text-anchor="middle" textLength="77" lengthAdjust="spacingAndGlyphs">DeltaE 2000</text>
<rect x="11.5" y="173.5" width="325" height="334.7" fill="#262626"/>
<line x1="54.8" y1="173.5" x2="54.8" y2="508.2" stroke="#8e8e8e" stroke-width="1"/>
<line x1="98.1" y1="173.5" x2="98.1" y2="508.2" stroke="#8e8e8e" stroke-width="1"/>
<line x1="141.4" y1="173.5" x2="141.4" y2="508.2" stroke="#8e8e8e" stroke-width="1"/>
<line x1="184.7" y1="173.5" x2="184.7" y2="508.2" stroke="#8e8e8e" stroke-width="1"/>
<line x1="228" y1="173.5" x2="228" y2="508.2" stroke="#8e8e8e" stroke-width="1"/>
<line x1="271.3" y1="173.5" x2="271.3" y2="508.2" stroke="#8e8e8e" stroke-width="1"/>
<line x1="314.6" y1="173.5" x2="314.6" y2="508.2" stroke="#8e8e8e" stroke-width="1"/>
<rect x="11.5" y="173.5" width="325.0" height="334.7" fill="none" stroke="#a4a4a4" stroke-width="1.3"/>
<line x1="11.5" y1="508.2" x2="11.5" y2="513.2" stroke="#d0d0d0" stroke-width="1.2"/>
<text x="11.5" y="526.9" font-size="11.6" fill="#d4d4d4" text-anchor="middle" textLength="7.8" lengthAdjust="spacingAndGlyphs">0</text>
<line x1="54.8" y1="508.2" x2="54.8" y2="513.2" stroke="#d0d0d0" stroke-width="1.2"/>
<text x="54.8" y="526.9" font-size="11.6" fill="#d4d4d4" text-anchor="middle" textLength="7.8" lengthAdjust="spacingAndGlyphs">2</text>
<line x1="98.1" y1="508.2" x2="98.1" y2="513.2" stroke="#d0d0d0" stroke-width="1.2"/>
<text x="98.1" y="526.9" font-size="11.6" fill="#d4d4d4" text-anchor="middle" textLength="7.8" lengthAdjust="spacingAndGlyphs">4</text>
<line x1="141.4" y1="508.2" x2="141.4" y2="513.2" stroke="#d0d0d0" stroke-width="1.2"/>
<text x="141.4" y="526.9" font-size="11.6" fill="#d4d4d4" text-anchor="middle" textLength="7.8" lengthAdjust="spacingAndGlyphs">6</text>
<line x1="184.7" y1="508.2" x2="184.7" y2="513.2" stroke="#d0d0d0" stroke-width="1.2"/>
<text x="184.7" y="526.9" font-size="11.6" fill="#d4d4d4" text-anchor="middle" textLength="7.8" lengthAdjust="spacingAndGlyphs">8</text>
<line x1="228" y1="508.2" x2="228" y2="513.2" stroke="#d0d0d0" stroke-width="1.2"/>
<text x="228" y="526.9" font-size="11.6" fill="#d4d4d4" text-anchor="middle" textLength="16" lengthAdjust="spacingAndGlyphs">10</text>
<line x1="271.3" y1="508.2" x2="271.3" y2="513.2" stroke="#d0d0d0" stroke-width="1.2"/>
<text x="271.3" y="526.9" font-size="11.6" fill="#d4d4d4" text-anchor="middle" textLength="16" lengthAdjust="spacingAndGlyphs">12</text>
<line x1="314.6" y1="508.2" x2="314.6" y2="513.2" stroke="#d0d0d0" stroke-width="1.2"/>
<text x="314.6" y="526.9" font-size="11.6" fill="#d4d4d4" text-anchor="middle" textLength="16" lengthAdjust="spacingAndGlyphs">14</text>
<rect x="12" y="175.8" width="123.3" height="6.7" fill="#ffff00"/>
<rect x="12" y="175.8" width="123.3" height="6.7" fill="url(#gShade)" stroke="#000" stroke-width="1"/>
<rect x="12" y="186.9" width="113.6" height="6.7" fill="#ff00ff"/>
<rect x="12" y="186.9" width="113.6" height="6.7" fill="url(#gShade)" stroke="#000" stroke-width="1"/>
<rect x="12" y="198" width="102.4" height="6.7" fill="#00ffff"/>
<rect x="12" y="198" width="102.4" height="6.7" fill="url(#gShade)" stroke="#000" stroke-width="1"/>
<rect x="12" y="209.1" width="47.6" height="6.7" fill="#0000ff"/>
<rect x="12" y="209.1" width="47.6" height="6.7" fill="url(#gShade)" stroke="#000" stroke-width="1"/>
<rect x="12" y="220.2" width="61.4" height="6.7" fill="#00ff00"/>
<rect x="12" y="220.2" width="61.4" height="6.7" fill="url(#gShade)" stroke="#000" stroke-width="1"/>
<rect x="12" y="231.3" width="108.5" height="6.7" fill="#ff0000"/>
<rect x="12" y="231.3" width="108.5" height="6.7" fill="url(#gShade)" stroke="#000" stroke-width="1"/>
<rect x="12" y="242.4" width="151.4" height="6.7" fill="#0888a8"/>
<rect x="12" y="242.4" width="151.4" height="6.7" fill="url(#gShade)" stroke="#000" stroke-width="1"/>
<rect x="12" y="253.5" width="86.3" height="6.7" fill="#bb5695"/>
<rect x="12" y="253.5" width="86.3" height="6.7" fill="url(#gShade)" stroke="#000" stroke-width="1"/>
<rect x="12" y="264.6" width="159.2" height="6.7" fill="#e7c71f"/>
<rect x="12" y="264.6" width="159.2" height="6.7" fill="url(#gShade)" stroke="#000" stroke-width="1"/>
<rect x="12" y="275.7" width="28.4" height="6.7" fill="#af363c"/>
<rect x="12" y="275.7" width="28.4" height="6.7" fill="url(#gShade)" stroke="#000" stroke-width="1"/>
<rect x="12" y="286.8" width="75.3" height="6.7" fill="#469449"/>
<rect x="12" y="286.8" width="75.3" height="6.7" fill="url(#gShade)" stroke="#000" stroke-width="1"/>
<rect x="12" y="297.9" width="68.5" height="6.7" fill="#383d96"/>
<rect x="12" y="297.9" width="68.5" height="6.7" fill="url(#gShade)" stroke="#000" stroke-width="1"/>
<rect x="12" y="309" width="172.6" height="6.7" fill="#e0a32e"/>
<rect x="12" y="309" width="172.6" height="6.7" fill="url(#gShade)" stroke="#000" stroke-width="1"/>
<rect x="12" y="320.1" width="125.4" height="6.7" fill="#9dbc40"/>
<rect x="12" y="320.1" width="125.4" height="6.7" fill="url(#gShade)" stroke="#000" stroke-width="1"/>
<rect x="12" y="331.2" width="72.7" height="6.7" fill="#5e3c6c"/>
<rect x="12" y="331.2" width="72.7" height="6.7" fill="url(#gShade)" stroke="#000" stroke-width="1"/>
<rect x="12" y="342.3" width="42.3" height="6.7" fill="#c15a63"/>
<rect x="12" y="342.3" width="42.3" height="6.7" fill="url(#gShade)" stroke="#000" stroke-width="1"/>
<rect x="12" y="353.4" width="57.6" height="6.7" fill="#505ba6"/>
<rect x="12" y="353.4" width="57.6" height="6.7" fill="url(#gShade)" stroke="#000" stroke-width="1"/>
<rect x="12" y="364.5" width="145.3" height="6.7" fill="#d67e2c"/>
<rect x="12" y="364.5" width="145.3" height="6.7" fill="url(#gShade)" stroke="#000" stroke-width="1"/>
<rect x="12" y="375.6" width="44.3" height="6.7" fill="#67bdaa"/>
<rect x="12" y="375.6" width="44.3" height="6.7" fill="url(#gShade)" stroke="#000" stroke-width="1"/>
<rect x="12" y="386.7" width="82.3" height="6.7" fill="#8580b1"/>
<rect x="12" y="386.7" width="82.3" height="6.7" fill="url(#gShade)" stroke="#000" stroke-width="1"/>
<rect x="12" y="397.8" width="63.3" height="6.7" fill="#576c43"/>
<rect x="12" y="397.8" width="63.3" height="6.7" fill="url(#gShade)" stroke="#000" stroke-width="1"/>
<rect x="12" y="408.9" width="56.4" height="6.7" fill="#627a9d"/>
<rect x="12" y="408.9" width="56.4" height="6.7" fill="url(#gShade)" stroke="#000" stroke-width="1"/>
<rect x="12" y="420" width="143.6" height="6.7" fill="#c29682"/>
<rect x="12" y="420" width="143.6" height="6.7" fill="url(#gShade)" stroke="#000" stroke-width="1"/>
<rect x="12" y="431.1" width="93.7" height="6.7" fill="#735244"/>
<rect x="12" y="431.1" width="93.7" height="6.7" fill="url(#gShade)" stroke="#000" stroke-width="1"/>
<rect x="12" y="442.2" width="36.9" height="6.7" fill="#0a0a0a"/>
<rect x="12" y="442.2" width="36.9" height="6.7" fill="url(#gShade)" stroke="#000" stroke-width="1"/>
<rect x="12" y="453.3" width="133.4" height="6.7" fill="#a0a0a0"/>
<rect x="12" y="453.3" width="133.4" height="6.7" fill="url(#gShade)" stroke="#000" stroke-width="1"/>
<rect x="12" y="464.4" width="147.5" height="6.7" fill="#bcbcbc"/>
<rect x="12" y="464.4" width="147.5" height="6.7" fill="url(#gShade)" stroke="#000" stroke-width="1"/>
<rect x="12" y="475.5" width="158.4" height="6.7" fill="#d2d2d2"/>
<rect x="12" y="475.5" width="158.4" height="6.7" fill="url(#gShade)" stroke="#000" stroke-width="1"/>
<rect x="12" y="486.6" width="167.5" height="6.7" fill="#e6e6e6"/>
<rect x="12" y="486.6" width="167.5" height="6.7" fill="url(#gShade)" stroke="#000" stroke-width="1"/>
<rect x="12" y="497.7" width="179.6" height="6.7" fill="#ffffff"/>
<rect x="12" y="497.7" width="179.6" height="6.7" fill="url(#gShade)" stroke="#000" stroke-width="1"/>
<text x="40.5" y="577" font-size="26" fill="#f2f2f2" textLength="227" lengthAdjust="spacingAndGlyphs">Avg dE2000: 4,84</text>
<text x="35.8" y="613.5" font-size="26" fill="#f2f2f2" textLength="236" lengthAdjust="spacingAndGlyphs">Max dE2000: 8,32</text>
<text x="5.5" y="655.7" font-size="26" fill="#f2f2f2" textLength="214" lengthAdjust="spacingAndGlyphs">Current Reading</text>
<text x="5.5" y="687.3" font-size="21" fill="#f2f2f2" textLength="100.5" lengthAdjust="spacingAndGlyphs">x: 0,4013</text>
<text x="157.5" y="687.3" font-size="21" fill="#f2f2f2" textLength="100.5" lengthAdjust="spacingAndGlyphs">y: 0,5321</text>
<text x="5.8" y="724.3" font-size="23" fill="#f2f2f2" textLength="108.5" lengthAdjust="spacingAndGlyphs">fL: 123,89</text>
<text x="5.5" y="754.6" font-size="23" fill="#f2f2f2" textLength="155.5" lengthAdjust="spacingAndGlyphs">cd/m²: 424,49</text>
<rect x="379.5" y="76.7" width="148" height="301.8" fill="#262626"/>
<line x1="373.5" y1="76.7" x2="379.5" y2="76.7" stroke="#b8b8b8" stroke-width="1"/>
<text x="373" y="81.2" font-size="12.5" fill="#d4d4d4" text-anchor="end" textLength="7.6" lengthAdjust="spacingAndGlyphs">4</text>
<line x1="379.5" y1="114.425" x2="527.5" y2="114.425" stroke="#8e8e8e" stroke-width="1"/>
<line x1="373.5" y1="114.425" x2="379.5" y2="114.425" stroke="#b8b8b8" stroke-width="1"/>
<text x="373" y="118.925" font-size="12.5" fill="#d4d4d4" text-anchor="end" textLength="7.6" lengthAdjust="spacingAndGlyphs">3</text>
<line x1="379.5" y1="152.15" x2="527.5" y2="152.15" stroke="#8e8e8e" stroke-width="1"/>
<line x1="373.5" y1="152.15" x2="379.5" y2="152.15" stroke="#b8b8b8" stroke-width="1"/>
<text x="373" y="156.65" font-size="12.5" fill="#d4d4d4" text-anchor="end" textLength="7.6" lengthAdjust="spacingAndGlyphs">2</text>
<line x1="379.5" y1="189.875" x2="527.5" y2="189.875" stroke="#8e8e8e" stroke-width="1"/>
<line x1="373.5" y1="189.875" x2="379.5" y2="189.875" stroke="#b8b8b8" stroke-width="1"/>
<text x="373" y="194.375" font-size="12.5" fill="#d4d4d4" text-anchor="end" textLength="7.6" lengthAdjust="spacingAndGlyphs">1</text>
<line x1="379.5" y1="227.6" x2="527.5" y2="227.6" stroke="#8e8e8e" stroke-width="1"/>
<line x1="373.5" y1="227.6" x2="379.5" y2="227.6" stroke="#b8b8b8" stroke-width="1"/>
<text x="373" y="232.1" font-size="12.5" fill="#d4d4d4" text-anchor="end" textLength="7.6" lengthAdjust="spacingAndGlyphs">0</text>
<line x1="379.5" y1="265.325" x2="527.5" y2="265.325" stroke="#8e8e8e" stroke-width="1"/>
<line x1="373.5" y1="265.325" x2="379.5" y2="265.325" stroke="#b8b8b8" stroke-width="1"/>
<text x="373" y="269.825" font-size="12.5" fill="#d4d4d4" text-anchor="end" textLength="12.2" lengthAdjust="spacingAndGlyphs">-1</text>
<line x1="379.5" y1="303.05" x2="527.5" y2="303.05" stroke="#8e8e8e" stroke-width="1"/>
<line x1="373.5" y1="303.05" x2="379.5" y2="303.05" stroke="#b8b8b8" stroke-width="1"/>
<text x="373" y="307.55" font-size="12.5" fill="#d4d4d4" text-anchor="end" textLength="12.2" lengthAdjust="spacingAndGlyphs">-2</text>
<line x1="379.5" y1="340.775" x2="527.5" y2="340.775" stroke="#8e8e8e" stroke-width="1"/>
<line x1="373.5" y1="340.775" x2="379.5" y2="340.775" stroke="#b8b8b8" stroke-width="1"/>
<text x="373" y="345.275" font-size="12.5" fill="#d4d4d4" text-anchor="end" textLength="12.2" lengthAdjust="spacingAndGlyphs">-3</text>
<line x1="373.5" y1="378.5" x2="379.5" y2="378.5" stroke="#b8b8b8" stroke-width="1"/>
<text x="373" y="383" font-size="12.5" fill="#d4d4d4" text-anchor="end" textLength="12.2" lengthAdjust="spacingAndGlyphs">-4</text>
<rect x="379.5" y="76.7" width="148.0" height="301.8" fill="none" stroke="#a4a4a4" stroke-width="1.3"/>
<text x="424.7" y="71.5" font-size="13.5" fill="#d0d0d0" textLength="40.3" lengthAdjust="spacingAndGlyphs">DeltaL</text>
<rect x="393.5" y="227.5" width="118.0" height="5.800000000000011" fill="url(#gY)" stroke="#000" stroke-width="1.2"/>
<rect x="578.5" y="76.7" width="141" height="301.8" fill="#262626"/>
<line x1="572.5" y1="76.7" x2="578.5" y2="76.7" stroke="#b8b8b8" stroke-width="1"/>
<text x="572" y="81.2" font-size="12.5" fill="#d4d4d4" text-anchor="end" textLength="15.2" lengthAdjust="spacingAndGlyphs">10</text>
<line x1="578.5" y1="152.15" x2="719.5" y2="152.15" stroke="#8e8e8e" stroke-width="1"/>
<line x1="572.5" y1="152.15" x2="578.5" y2="152.15" stroke="#b8b8b8" stroke-width="1"/>
<text x="572" y="156.65" font-size="12.5" fill="#d4d4d4" text-anchor="end" textLength="7.6" lengthAdjust="spacingAndGlyphs">5</text>
<line x1="578.5" y1="227.6" x2="719.5" y2="227.6" stroke="#8e8e8e" stroke-width="1"/>
<line x1="572.5" y1="227.6" x2="578.5" y2="227.6" stroke="#b8b8b8" stroke-width="1"/>
<text x="572" y="232.1" font-size="12.5" fill="#d4d4d4" text-anchor="end" textLength="7.6" lengthAdjust="spacingAndGlyphs">0</text>
<line x1="578.5" y1="303.05" x2="719.5" y2="303.05" stroke="#8e8e8e" stroke-width="1"/>
<line x1="572.5" y1="303.05" x2="578.5" y2="303.05" stroke="#b8b8b8" stroke-width="1"/>
<text x="572" y="307.55" font-size="12.5" fill="#d4d4d4" text-anchor="end" textLength="12.2" lengthAdjust="spacingAndGlyphs">-5</text>
<line x1="572.5" y1="378.5" x2="578.5" y2="378.5" stroke="#b8b8b8" stroke-width="1"/>
<text x="572" y="383" font-size="12.5" fill="#d4d4d4" text-anchor="end" textLength="19.8" lengthAdjust="spacingAndGlyphs">-10</text>
<rect x="578.5" y="76.7" width="141.0" height="301.8" fill="none" stroke="#a4a4a4" stroke-width="1.3"/>
<text x="614.9" y="71.5" font-size="13.5" fill="#d0d0d0" textLength="42.7" lengthAdjust="spacingAndGlyphs">DeltaC</text>
<rect x="593" y="85.3" width="111.79999999999995" height="142.2" fill="url(#gY)" stroke="#000" stroke-width="1.2"/>
<rect x="770.5" y="76.7" width="140" height="301.8" fill="#262626"/>
<line x1="764.5" y1="76.7" x2="770.5" y2="76.7" stroke="#b8b8b8" stroke-width="1"/>
<text x="764" y="81.2" font-size="12.5" fill="#d4d4d4" text-anchor="end" textLength="15.2" lengthAdjust="spacingAndGlyphs">20</text>
<line x1="770.5" y1="114.425" x2="910.5" y2="114.425" stroke="#8e8e8e" stroke-width="1"/>
<line x1="764.5" y1="114.425" x2="770.5" y2="114.425" stroke="#b8b8b8" stroke-width="1"/>
<text x="764" y="118.925" font-size="12.5" fill="#d4d4d4" text-anchor="end" textLength="15.2" lengthAdjust="spacingAndGlyphs">15</text>
<line x1="770.5" y1="152.15" x2="910.5" y2="152.15" stroke="#8e8e8e" stroke-width="1"/>
<line x1="764.5" y1="152.15" x2="770.5" y2="152.15" stroke="#b8b8b8" stroke-width="1"/>
<text x="764" y="156.65" font-size="12.5" fill="#d4d4d4" text-anchor="end" textLength="15.2" lengthAdjust="spacingAndGlyphs">10</text>
<line x1="770.5" y1="189.875" x2="910.5" y2="189.875" stroke="#8e8e8e" stroke-width="1"/>
<line x1="764.5" y1="189.875" x2="770.5" y2="189.875" stroke="#b8b8b8" stroke-width="1"/>
<text x="764" y="194.375" font-size="12.5" fill="#d4d4d4" text-anchor="end" textLength="7.6" lengthAdjust="spacingAndGlyphs">5</text>
<line x1="770.5" y1="227.6" x2="910.5" y2="227.6" stroke="#8e8e8e" stroke-width="1"/>
<line x1="764.5" y1="227.6" x2="770.5" y2="227.6" stroke="#b8b8b8" stroke-width="1"/>
<text x="764" y="232.1" font-size="12.5" fill="#d4d4d4" text-anchor="end" textLength="7.6" lengthAdjust="spacingAndGlyphs">0</text>
<line x1="770.5" y1="265.325" x2="910.5" y2="265.325" stroke="#8e8e8e" stroke-width="1"/>
<line x1="764.5" y1="265.325" x2="770.5" y2="265.325" stroke="#b8b8b8" stroke-width="1"/>
<text x="764" y="269.825" font-size="12.5" fill="#d4d4d4" text-anchor="end" textLength="12.2" lengthAdjust="spacingAndGlyphs">-5</text>
<line x1="770.5" y1="303.05" x2="910.5" y2="303.05" stroke="#8e8e8e" stroke-width="1"/>
<line x1="764.5" y1="303.05" x2="770.5" y2="303.05" stroke="#b8b8b8" stroke-width="1"/>
<text x="764" y="307.55" font-size="12.5" fill="#d4d4d4" text-anchor="end" textLength="19.8" lengthAdjust="spacingAndGlyphs">-10</text>
<line x1="770.5" y1="340.775" x2="910.5" y2="340.775" stroke="#8e8e8e" stroke-width="1"/>
<line x1="764.5" y1="340.775" x2="770.5" y2="340.775" stroke="#b8b8b8" stroke-width="1"/>
<text x="764" y="345.275" font-size="12.5" fill="#d4d4d4" text-anchor="end" textLength="19.8" lengthAdjust="spacingAndGlyphs">-15</text>
<line x1="764.5" y1="378.5" x2="770.5" y2="378.5" stroke="#b8b8b8" stroke-width="1"/>
<text x="764" y="383" font-size="12.5" fill="#d4d4d4" text-anchor="end" textLength="19.8" lengthAdjust="spacingAndGlyphs">-20</text>
<rect x="770.5" y="76.7" width="140.0" height="301.8" fill="none" stroke="#a4a4a4" stroke-width="1.3"/>
<text x="805.4" y="71.5" font-size="13.5" fill="#d0d0d0" textLength="44" lengthAdjust="spacingAndGlyphs">DeltaH</text>
<rect x="784.5" y="134.8" width="111.0" height="92.69999999999999" fill="url(#gY)" stroke="#000" stroke-width="1.2"/>
<rect x="356" y="389.5" width="574" height="158" fill="#000"/>
<clipPath id="cSw"><rect x="356" y="389.5" width="574" height="158"/></clipPath><g clip-path="url(#cSw)">
<rect x="372.2" y="395" width="57" height="53" fill="#e6f6fc"/>
<rect x="372.2" y="448" width="57" height="53" fill="#f4f4f4"/>
<rect x="372.7" y="395.5" width="56" height="105" fill="none" stroke="#fff" stroke-opacity="0.8" stroke-width="1.2"/>
<rect x="373.7" y="396.5" width="54" height="103" fill="none" stroke="#000" stroke-opacity="0.2" stroke-width="1"/>
<text x="400.7" y="514.2" font-size="12" fill="#fff" text-anchor="middle" textLength="31.5" lengthAdjust="spacingAndGlyphs">White</text>
<rect x="438.2" y="395" width="57" height="53" fill="#d5e8ec"/>
<rect x="438.2" y="448" width="57" height="53" fill="#e4e4e4"/>
<rect x="438.7" y="395.5" width="56" height="105" fill="none" stroke="#fff" stroke-opacity="0.8" stroke-width="1.2"/>
<rect x="439.7" y="396.5" width="54" height="103" fill="none" stroke="#000" stroke-opacity="0.2" stroke-width="1"/>
<text x="466.7" y="514.2" font-size="12" fill="#fff" text-anchor="middle" textLength="40.5" lengthAdjust="spacingAndGlyphs">Gray 80</text>
<rect x="504.2" y="395" width="57" height="53" fill="#c5d7da"/>
<rect x="504.2" y="448" width="57" height="53" fill="#d0d0d0"/>
<rect x="504.7" y="395.5" width="56" height="105" fill="none" stroke="#fff" stroke-opacity="0.8" stroke-width="1.2"/>
<rect x="505.7" y="396.5" width="54" height="103" fill="none" stroke="#000" stroke-opacity="0.2" stroke-width="1"/>
<text x="532.7" y="514.2" font-size="12" fill="#fff" text-anchor="middle" textLength="40.5" lengthAdjust="spacingAndGlyphs">Gray 65</text>
<rect x="570.2" y="395" width="57" height="53" fill="#b0c0c2"/>
<rect x="570.2" y="448" width="57" height="53" fill="#b9b9b9"/>
<rect x="570.7" y="395.5" width="56" height="105" fill="none" stroke="#fff" stroke-opacity="0.8" stroke-width="1.2"/>
<rect x="571.7" y="396.5" width="54" height="103" fill="none" stroke="#000" stroke-opacity="0.2" stroke-width="1"/>
<text x="598.7" y="514.2" font-size="12" fill="#fff" text-anchor="middle" textLength="40.5" lengthAdjust="spacingAndGlyphs">Gray 50</text>
<rect x="636.2" y="395" width="57" height="53" fill="#98a5a5"/>
<rect x="636.2" y="448" width="57" height="53" fill="#9e9e9e"/>
<rect x="636.7" y="395.5" width="56" height="105" fill="none" stroke="#fff" stroke-opacity="0.8" stroke-width="1.2"/>
<rect x="637.7" y="396.5" width="54" height="103" fill="none" stroke="#000" stroke-opacity="0.2" stroke-width="1"/>
<text x="664.7" y="514.2" font-size="12" fill="#fff" text-anchor="middle" textLength="40.5" lengthAdjust="spacingAndGlyphs">Gray 35</text>
<rect x="702.2" y="395" width="57" height="53" fill="#060507"/>
<rect x="702.2" y="448" width="57" height="53" fill="#000000"/>
<rect x="702.7" y="395.5" width="56" height="105" fill="none" stroke="#fff" stroke-opacity="0.8" stroke-width="1.2"/>
<rect x="703.7" y="396.5" width="54" height="103" fill="none" stroke="#000" stroke-opacity="0.2" stroke-width="1"/>
<text x="730.7" y="514.2" font-size="12" fill="#fff" text-anchor="middle" textLength="27.5" lengthAdjust="spacingAndGlyphs">Black</text>
<rect x="768.2" y="395" width="57" height="53" fill="#6c5343"/>
<rect x="768.2" y="448" width="57" height="53" fill="#735243"/>
<rect x="768.7" y="395.5" width="56" height="105" fill="none" stroke="#fff" stroke-opacity="0.8" stroke-width="1.2"/>
<rect x="769.7" y="396.5" width="54" height="103" fill="none" stroke="#000" stroke-opacity="0.2" stroke-width="1"/>
<text x="796.7" y="514.2" font-size="12" fill="#fff" text-anchor="middle" textLength="49" lengthAdjust="spacingAndGlyphs">Dark Skin</text>
<rect x="834.2" y="395" width="57" height="53" fill="#b69a84"/>
<rect x="834.2" y="448" width="57" height="53" fill="#c2957f"/>
<rect x="834.7" y="395.5" width="56" height="105" fill="none" stroke="#fff" stroke-opacity="0.8" stroke-width="1.2"/>
<rect x="835.7" y="396.5" width="54" height="103" fill="none" stroke="#000" stroke-opacity="0.2" stroke-width="1"/>
<text x="862.7" y="514.2" font-size="12" fill="#fff" text-anchor="middle" textLength="50" lengthAdjust="spacingAndGlyphs">Light Skin</text>
<rect x="900.2" y="395" width="57" height="53" fill="#5d7fae"/>
<rect x="900.2" y="448" width="57" height="53" fill="#5f7a9c"/>
<rect x="900.7" y="395.5" width="56" height="105" fill="none" stroke="#fff" stroke-opacity="0.8" stroke-width="1.2"/>
<rect x="901.7" y="396.5" width="54" height="103" fill="none" stroke="#000" stroke-opacity="0.2" stroke-width="1"/>
<text x="928.7" y="514.2" font-size="12" fill="#fff" text-anchor="middle" textLength="45" lengthAdjust="spacingAndGlyphs">Blue Sky</text>
</g>
<text transform="translate(367.7,419.5) rotate(-90)" font-size="11.5" fill="#fff" text-anchor="middle" textLength="30" lengthAdjust="spacingAndGlyphs">Actual</text>
<text transform="translate(367.7,477.5) rotate(-90)" font-size="11.5" fill="#fff" text-anchor="middle" textLength="31" lengthAdjust="spacingAndGlyphs">Target</text>
<rect x="356" y="534.2" width="574" height="13.3" fill="#5c5c5c"/>
<rect x="357.5" y="535.5" width="13" height="11" rx="2" fill="#8a8a8a"/><path d="M361 541l6-4v8z" fill="#333"/>
<rect x="915.5" y="535.5" width="13" height="11" rx="2" fill="#8a8a8a"/><path d="M925 541l-6-4v8z" fill="#333"/>
<rect x="372" y="535.8" width="154" height="10.4" rx="5" fill="#444"/>
<rect x="936" y="48" width="680" height="500.7" fill="#272727"/>
<rect x="942.7" y="54.5" width="680" height="488" fill="#333"/>
<rect x="979.5" y="75.5" width="619" height="441" fill="#262626"/>
<text x="1272.5" y="70.6" font-size="13.5" fill="#d0d0d0" text-anchor="middle" textLength="81" lengthAdjust="spacingAndGlyphs">CIE 1976 u'v'</text>
<clipPath id="cPlot"><rect x="979.5" y="75.5" width="619.0" height="441.0"/></clipPath>
<clipPath id="cLoc"><path d="M1244.6 504.4L1244.5 504.3L1244.4 504.3L1244.3 504.4L1244.2 504.5L1244.1 504.5L1243.9 504.4L1243.7 504.4L1243.6 504.5L1243.6 504.7L1243.4 504.8L1243.3 504.8L1243.1 504.8L1242.8 504.8L1242.4 504.8L1242.1 504.8L1241.8 504.8L1241.5 504.7L1241.1 504.6L1240.5 504.4L1239.8 504.1L1238.8 503.5L1237.7 502.8L1236.5 502.0L1235.1 501.0L1233.5 499.8L1231.6 498.5L1229.5 496.9L1227.1 495.1L1224.6 493.0L1221.8 490.8L1218.7 488.4L1215.3 485.8L1211.4 482.8L1207.2 479.6L1202.5 476.0L1197.5 472.2L1192.2 468.0L1186.3 463.4L1180.0 458.2L1173.2 452.3L1166.0 445.9L1158.1 438.4L1149.3 429.3L1139.3 418.2L1128.2 405.3L1116.5 390.8L1104.2 374.6L1091.4 356.8L1078.2 337.4L1065.0 317.0L1051.9 296.1L1039.3 274.8L1027.7 253.5L1017.5 232.9L1008.6 213.3L1000.8 194.9L994.4 178.2L989.4 163.2L985.7 150.1L983.1 138.6L981.5 128.7L980.9 120.2L981.2 112.9L982.4 106.6L984.3 101.2L987.0 96.7L990.3 93.1L994.2 90.2L998.6 88.1L1003.4 86.6L1008.5 85.6L1013.9 85.0L1019.5 84.6L1025.3 84.4L1031.2 84.4L1037.0 84.4L1042.9 84.4L1048.9 84.6L1055.0 84.9L1061.3 85.2L1067.7 85.6L1074.4 86.0L1081.3 86.6L1088.4 87.2L1095.8 87.8L1103.5 88.5L1111.5 89.3L1119.8 90.1L1128.5 90.9L1137.5 91.8L1146.9 92.8L1156.7 93.8L1166.9 94.9L1177.5 96.0L1188.6 97.2L1200.0 98.4L1211.9 99.6L1224.3 101.0L1237.1 102.3L1250.2 103.7L1263.8 105.2L1277.8 106.7L1292.1 108.2L1306.7 109.8L1321.6 111.3L1336.7 113.0L1351.9 114.6L1366.8 116.2L1381.4 117.7L1395.9 119.3L1410.4 120.8L1424.6 122.3L1438.2 123.8L1451.2 125.2L1463.6 126.5L1475.5 127.7L1486.7 128.9L1497.3 130.1L1507.2 131.1L1516.4 132.1L1524.9 133.0L1532.9 133.9L1540.4 134.7L1547.3 135.4L1553.8 136.1L1560.0 136.8L1565.9 137.4L1571.3 138.0L1576.4 138.5L1581.2 139.0L1585.6 139.5L1589.6 139.9L1593.2 140.3L1596.4 140.6L1599.2 140.9L1601.8 141.2L1604.2 141.5L1606.3 141.7L1608.2 141.9L1609.8 142.1L1611.2 142.2L1612.4 142.3L1613.4 142.5L1614.4 142.6L1615.4 142.7L1616.2 142.8L1617.0 142.8L1617.7 142.9L1618.5 143.0L1619.3 143.1L1620.0 143.2L1620.7 143.2L1621.3 143.3L1621.7 143.3L1622.0 143.4L1622.2 143.4L1622.5 143.4L1622.6 143.4L1622.8 143.5L1622.8 143.5L1627.2 144.0Z"/></clipPath>
<g clip-path="url(#cPlot)"><g clip-path="url(#cLoc)">
<rect x="1011" y="84" width="50" height="2.6" fill="url(#r0)"/>
<rect x="999" y="86" width="91" height="2.6" fill="url(#r1)"/>
<rect x="993" y="88" width="119" height="2.6" fill="url(#r2)"/>
<rect x="990" y="90" width="143" height="2.6" fill="url(#r3)"/>
<rect x="987" y="92" width="165" height="2.6" fill="url(#r4)"/>
<rect x="985" y="94" width="186" height="2.6" fill="url(#r5)"/>
<rect x="983" y="96" width="207" height="2.6" fill="url(#r6)"/>
<rect x="982" y="98" width="227" height="2.6" fill="url(#r7)"/>
<rect x="981" y="100" width="247" height="2.6" fill="url(#r8)"/>
<rect x="980" y="102" width="267" height="2.6" fill="url(#r9)"/>
<rect x="979" y="104" width="287" height="2.6" fill="url(#r10)"/>
<rect x="979" y="106" width="305" height="2.6" fill="url(#r11)"/>
<rect x="979" y="108" width="324" height="2.6" fill="url(#r12)"/>
<rect x="979" y="110" width="343" height="2.6" fill="url(#r13)"/>
<rect x="979" y="112" width="362" height="2.6" fill="url(#r14)"/>
<rect x="979" y="114" width="380" height="2.6" fill="url(#r15)"/>
<rect x="979" y="116" width="399" height="2.6" fill="url(#r16)"/>
<rect x="979" y="118" width="418" height="2.6" fill="url(#r17)"/>
<rect x="979" y="120" width="437" height="2.6" fill="url(#r18)"/>
<rect x="979" y="122" width="455" height="2.6" fill="url(#r19)"/>
<rect x="979" y="124" width="474" height="2.6" fill="url(#r20)"/>
<rect x="979" y="126" width="493" height="2.6" fill="url(#r21)"/>
<rect x="979" y="128" width="512" height="2.6" fill="url(#r22)"/>
<rect x="979" y="130" width="530" height="2.6" fill="url(#r23)"/>
<rect x="979" y="132" width="549" height="2.6" fill="url(#r24)"/>
<rect x="979" y="134" width="568" height="2.6" fill="url(#r25)"/>
<rect x="979" y="136" width="587" height="2.6" fill="url(#r26)"/>
<rect x="980" y="138" width="605" height="2.6" fill="url(#r27)"/>
<rect x="980" y="140" width="621" height="2.6" fill="url(#r28)"/>
<rect x="981" y="142" width="620" height="2.6" fill="url(#r29)"/>
<rect x="981" y="144" width="620" height="2.6" fill="url(#r30)"/>
<rect x="981" y="146" width="620" height="2.6" fill="url(#r31)"/>
<rect x="982" y="148" width="619" height="2.6" fill="url(#r32)"/>
<rect x="982" y="150" width="619" height="2.6" fill="url(#r33)"/>
<rect x="983" y="152" width="618" height="2.6" fill="url(#r34)"/>
<rect x="984" y="154" width="617" height="2.6" fill="url(#r35)"/>
<rect x="984" y="156" width="617" height="2.6" fill="url(#r36)"/>
<rect x="985" y="158" width="616" height="2.6" fill="url(#r37)"/>
<rect x="985" y="160" width="616" height="2.6" fill="url(#r38)"/>
<rect x="986" y="162" width="615" height="2.6" fill="url(#r39)"/>
<rect x="987" y="164" width="614" height="2.6" fill="url(#r40)"/>
<rect x="987" y="166" width="614" height="2.6" fill="url(#r41)"/>
<rect x="988" y="168" width="613" height="2.6" fill="url(#r42)"/>
<rect x="989" y="170" width="612" height="2.6" fill="url(#r43)"/>
<rect x="989" y="172" width="611" height="2.6" fill="url(#r44)"/>
<rect x="990" y="174" width="608" height="2.6" fill="url(#r45)"/>
<rect x="991" y="176" width="605" height="2.6" fill="url(#r46)"/>
<rect x="991" y="178" width="603" height="2.6" fill="url(#r47)"/>
<rect x="992" y="180" width="599" height="2.6" fill="url(#r48)"/>
<rect x="993" y="182" width="596" height="2.6" fill="url(#r49)"/>
<rect x="994" y="184" width="593" height="2.6" fill="url(#r50)"/>
<rect x="994" y="186" width="591" height="2.6" fill="url(#r51)"/>
<rect x="995" y="188" width="588" height="2.6" fill="url(#r52)"/>
<rect x="996" y="190" width="585" height="2.6" fill="url(#r53)"/>
<rect x="997" y="192" width="582" height="2.6" fill="url(#r54)"/>
<rect x="997" y="194" width="580" height="2.6" fill="url(#r55)"/>
<rect x="998" y="196" width="576" height="2.6" fill="url(#r56)"/>
<rect x="999" y="198" width="573" height="2.6" fill="url(#r57)"/>
<rect x="1000" y="200" width="570" height="2.6" fill="url(#r58)"/>
<rect x="1001" y="202" width="567" height="2.6" fill="url(#r59)"/>
<rect x="1002" y="204" width="564" height="2.6" fill="url(#r60)"/>
<rect x="1002" y="206" width="562" height="2.6" fill="url(#r61)"/>
<rect x="1003" y="208" width="559" height="2.6" fill="url(#r62)"/>
<rect x="1004" y="210" width="556" height="2.6" fill="url(#r63)"/>
<rect x="1005" y="212" width="552" height="2.6" fill="url(#r64)"/>
<rect x="1006" y="214" width="549" height="2.6" fill="url(#r65)"/>
<rect x="1007" y="216" width="546" height="2.6" fill="url(#r66)"/>
<rect x="1008" y="218" width="543" height="2.6" fill="url(#r67)"/>
<rect x="1009" y="220" width="540" height="2.6" fill="url(#r68)"/>
<rect x="1009" y="222" width="538" height="2.6" fill="url(#r69)"/>
<rect x="1010" y="224" width="535" height="2.6" fill="url(#r70)"/>
<rect x="1011" y="226" width="532" height="2.6" fill="url(#r71)"/>
<rect x="1012" y="228" width="528" height="2.6" fill="url(#r72)"/>
<rect x="1013" y="230" width="525" height="2.6" fill="url(#r73)"/>
<rect x="1014" y="232" width="522" height="2.6" fill="url(#r74)"/>
<rect x="1015" y="234" width="519" height="2.6" fill="url(#r75)"/>
<rect x="1016" y="236" width="516" height="2.6" fill="url(#r76)"/>
<rect x="1017" y="238" width="513" height="2.6" fill="url(#r77)"/>
<rect x="1018" y="240" width="510" height="2.6" fill="url(#r78)"/>
<rect x="1019" y="242" width="507" height="2.6" fill="url(#r79)"/>
<rect x="1020" y="244" width="503" height="2.6" fill="url(#r80)"/>
<rect x="1021" y="246" width="500" height="2.6" fill="url(#r81)"/>
<rect x="1022" y="248" width="497" height="2.6" fill="url(#r82)"/>
<rect x="1023" y="250" width="494" height="2.6" fill="url(#r83)"/>
<rect x="1024" y="252" width="491" height="2.6" fill="url(#r84)"/>
<rect x="1025" y="254" width="488" height="2.6" fill="url(#r85)"/>
<rect x="1026" y="256" width="485" height="2.6" fill="url(#r86)"/>
<rect x="1027" y="258" width="482" height="2.6" fill="url(#r87)"/>
<rect x="1028" y="260" width="478" height="2.6" fill="url(#r88)"/>
<rect x="1029" y="262" width="475" height="2.6" fill="url(#r89)"/>
<rect x="1030" y="264" width="472" height="2.6" fill="url(#r90)"/>
<rect x="1032" y="266" width="468" height="2.6" fill="url(#r91)"/>
<rect x="1033" y="268" width="465" height="2.6" fill="url(#r92)"/>
<rect x="1034" y="270" width="462" height="2.6" fill="url(#r93)"/>
<rect x="1035" y="272" width="459" height="2.6" fill="url(#r94)"/>
<rect x="1036" y="274" width="456" height="2.6" fill="url(#r95)"/>
<rect x="1037" y="276" width="452" height="2.6" fill="url(#r96)"/>
<rect x="1038" y="278" width="449" height="2.6" fill="url(#r97)"/>
<rect x="1039" y="280" width="446" height="2.6" fill="url(#r98)"/>
<rect x="1041" y="282" width="442" height="2.6" fill="url(#r99)"/>
<rect x="1042" y="284" width="439" height="2.6" fill="url(#r100)"/>
<rect x="1043" y="286" width="436" height="2.6" fill="url(#r101)"/>
<rect x="1044" y="288" width="433" height="2.6" fill="url(#r102)"/>
<rect x="1045" y="290" width="430" height="2.6" fill="url(#r103)"/>
<rect x="1047" y="292" width="426" height="2.6" fill="url(#r104)"/>
<rect x="1048" y="294" width="422" height="2.6" fill="url(#r105)"/>
<rect x="1049" y="296" width="419" height="2.6" fill="url(#r106)"/>
<rect x="1050" y="298" width="416" height="2.6" fill="url(#r107)"/>
<rect x="1051" y="300" width="413" height="2.6" fill="url(#r108)"/>
<rect x="1053" y="302" width="409" height="2.6" fill="url(#r109)"/>
<rect x="1054" y="304" width="406" height="2.6" fill="url(#r110)"/>
<rect x="1055" y="306" width="403" height="2.6" fill="url(#r111)"/>
<rect x="1056" y="308" width="400" height="2.6" fill="url(#r112)"/>
<rect x="1058" y="310" width="395" height="2.6" fill="url(#r113)"/>
<rect x="1059" y="312" width="392" height="2.6" fill="url(#r114)"/>
<rect x="1060" y="314" width="389" height="2.6" fill="url(#r115)"/>
<rect x="1061" y="316" width="386" height="2.6" fill="url(#r116)"/>
<rect x="1063" y="318" width="382" height="2.6" fill="url(#r117)"/>
<rect x="1064" y="320" width="379" height="2.6" fill="url(#r118)"/>
<rect x="1065" y="322" width="376" height="2.6" fill="url(#r119)"/>
<rect x="1067" y="324" width="372" height="2.6" fill="url(#r120)"/>
<rect x="1068" y="326" width="368" height="2.6" fill="url(#r121)"/>
<rect x="1069" y="328" width="365" height="2.6" fill="url(#r122)"/>
<rect x="1071" y="330" width="361" height="2.6" fill="url(#r123)"/>
<rect x="1072" y="332" width="358" height="2.6" fill="url(#r124)"/>
<rect x="1073" y="334" width="355" height="2.6" fill="url(#r125)"/>
<rect x="1074" y="336" width="352" height="2.6" fill="url(#r126)"/>
<rect x="1076" y="338" width="348" height="2.6" fill="url(#r127)"/>
<rect x="1077" y="340" width="345" height="2.6" fill="url(#r128)"/>
<rect x="1078" y="342" width="341" height="2.6" fill="url(#r129)"/>
<rect x="1080" y="344" width="337" height="2.6" fill="url(#r130)"/>
<rect x="1081" y="346" width="334" height="2.6" fill="url(#r131)"/>
<rect x="1083" y="348" width="330" height="2.6" fill="url(#r132)"/>
<rect x="1084" y="350" width="327" height="2.6" fill="url(#r133)"/>
<rect x="1085" y="352" width="324" height="2.6" fill="url(#r134)"/>
<rect x="1087" y="354" width="320" height="2.6" fill="url(#r135)"/>
<rect x="1088" y="356" width="317" height="2.6" fill="url(#r136)"/>
<rect x="1089" y="358" width="313" height="2.6" fill="url(#r137)"/>
<rect x="1091" y="360" width="309" height="2.6" fill="url(#r138)"/>
<rect x="1092" y="362" width="306" height="2.6" fill="url(#r139)"/>
<rect x="1094" y="364" width="302" height="2.6" fill="url(#r140)"/>
<rect x="1095" y="366" width="299" height="2.6" fill="url(#r141)"/>
<rect x="1097" y="368" width="295" height="2.6" fill="url(#r142)"/>
<rect x="1098" y="370" width="292" height="2.6" fill="url(#r143)"/>
<rect x="1100" y="372" width="288" height="2.6" fill="url(#r144)"/>
<rect x="1101" y="374" width="284" height="2.6" fill="url(#r145)"/>
<rect x="1102" y="376" width="281" height="2.6" fill="url(#r146)"/>
<rect x="1104" y="378" width="277" height="2.6" fill="url(#r147)"/>
<rect x="1106" y="380" width="273" height="2.6" fill="url(#r148)"/>
<rect x="1107" y="382" width="270" height="2.6" fill="url(#r149)"/>
<rect x="1109" y="384" width="266" height="2.6" fill="url(#r150)"/>
<rect x="1110" y="386" width="263" height="2.6" fill="url(#r151)"/>
<rect x="1112" y="388" width="259" height="2.6" fill="url(#r152)"/>
<rect x="1113" y="390" width="255" height="2.6" fill="url(#r153)"/>
<rect x="1115" y="392" width="251" height="2.6" fill="url(#r154)"/>
<rect x="1116" y="394" width="248" height="2.6" fill="url(#r155)"/>
<rect x="1118" y="396" width="244" height="2.6" fill="url(#r156)"/>
<rect x="1120" y="398" width="240" height="2.6" fill="url(#r157)"/>
<rect x="1121" y="400" width="237" height="2.6" fill="url(#r158)"/>
<rect x="1123" y="402" width="233" height="2.6" fill="url(#r159)"/>
<rect x="1124" y="404" width="230" height="2.6" fill="url(#r160)"/>
<rect x="1126" y="406" width="225" height="2.6" fill="url(#r161)"/>
<rect x="1128" y="408" width="221" height="2.6" fill="url(#r162)"/>
<rect x="1130" y="410" width="217" height="2.6" fill="url(#r163)"/>
<rect x="1131" y="412" width="214" height="2.6" fill="url(#r164)"/>
<rect x="1133" y="414" width="210" height="2.6" fill="url(#r165)"/>
<rect x="1135" y="416" width="206" height="2.6" fill="url(#r166)"/>
<rect x="1136" y="418" width="203" height="2.6" fill="url(#r167)"/>
<rect x="1138" y="420" width="199" height="2.6" fill="url(#r168)"/>
<rect x="1140" y="422" width="194" height="2.6" fill="url(#r169)"/>
<rect x="1142" y="424" width="190" height="2.6" fill="url(#r170)"/>
<rect x="1144" y="426" width="186" height="2.6" fill="url(#r171)"/>
<rect x="1146" y="428" width="182" height="2.6" fill="url(#r172)"/>
<rect x="1147" y="430" width="179" height="2.6" fill="url(#r173)"/>
<rect x="1149" y="432" width="175" height="2.6" fill="url(#r174)"/>
<rect x="1151" y="434" width="171" height="2.6" fill="url(#r175)"/>
<rect x="1153" y="436" width="167" height="2.6" fill="url(#r176)"/>
<rect x="1155" y="438" width="162" height="2.6" fill="url(#r177)"/>
<rect x="1157" y="440" width="158" height="2.6" fill="url(#r178)"/>
<rect x="1159" y="442" width="154" height="2.6" fill="url(#r179)"/>
<rect x="1162" y="444" width="149" height="2.6" fill="url(#r180)"/>
<rect x="1164" y="446" width="145" height="2.6" fill="url(#r181)"/>
<rect x="1166" y="448" width="141" height="2.6" fill="url(#r182)"/>
<rect x="1168" y="450" width="137" height="2.6" fill="url(#r183)"/>
<rect x="1170" y="452" width="133" height="2.6" fill="url(#r184)"/>
<rect x="1173" y="454" width="127" height="2.6" fill="url(#r185)"/>
<rect x="1175" y="456" width="123" height="2.6" fill="url(#r186)"/>
<rect x="1177" y="458" width="119" height="2.6" fill="url(#r187)"/>
<rect x="1180" y="460" width="114" height="2.6" fill="url(#r188)"/>
<rect x="1182" y="462" width="110" height="2.6" fill="url(#r189)"/>
<rect x="1185" y="464" width="105" height="2.6" fill="url(#r190)"/>
<rect x="1187" y="466" width="101" height="2.6" fill="url(#r191)"/>
<rect x="1190" y="468" width="96" height="2.6" fill="url(#r192)"/>
<rect x="1192" y="470" width="92" height="2.6" fill="url(#r193)"/>
<rect x="1195" y="472" width="86" height="2.6" fill="url(#r194)"/>
<rect x="1198" y="474" width="81" height="2.6" fill="url(#r195)"/>
<rect x="1200" y="476" width="77" height="2.6" fill="url(#r196)"/>
<rect x="1203" y="478" width="72" height="2.6" fill="url(#r197)"/>
<rect x="1206" y="480" width="67" height="2.6" fill="url(#r198)"/>
<rect x="1208" y="482" width="63" height="2.6" fill="url(#r199)"/>
<rect x="1211" y="484" width="58" height="2.6" fill="url(#r200)"/>
<rect x="1213" y="486" width="54" height="2.6" fill="url(#r201)"/>
<rect x="1216" y="488" width="48" height="2.6" fill="url(#r202)"/>
<rect x="1219" y="490" width="43" height="2.6" fill="url(#r203)"/>
<rect x="1221" y="492" width="39" height="2.6" fill="url(#r204)"/>
<rect x="1224" y="494" width="34" height="2.6" fill="url(#r205)"/>
<rect x="1226" y="496" width="30" height="2.6" fill="url(#r206)"/>
<rect x="1229" y="498" width="25" height="2.6" fill="url(#r207)"/>
<rect x="1232" y="500" width="20" height="2.6" fill="url(#r208)"/>
<rect x="1234" y="502" width="16" height="2.6" fill="url(#r209)"/>
<path d="M1244.6 504.4L1244.5 504.3L1244.4 504.3L1244.3 504.4L1244.2 504.5L1244.1 504.5L1243.9 504.4L1243.7 504.4L1243.6 504.5L1243.6 504.7L1243.4 504.8L1243.3 504.8L1243.1 504.8L1242.8 504.8L1242.4 504.8L1242.1 504.8L1241.8 504.8L1241.5 504.7L1241.1 504.6L1240.5 504.4L1239.8 504.1L1238.8 503.5L1237.7 502.8L1236.5 502.0L1235.1 501.0L1233.5 499.8L1231.6 498.5L1229.5 496.9L1227.1 495.1L1224.6 493.0L1221.8 490.8L1218.7 488.4L1215.3 485.8L1211.4 482.8L1207.2 479.6L1202.5 476.0L1197.5 472.2L1192.2 468.0L1186.3 463.4L1180.0 458.2L1173.2 452.3L1166.0 445.9L1158.1 438.4L1149.3 429.3L1139.3 418.2L1128.2 405.3L1116.5 390.8L1104.2 374.6L1091.4 356.8L1078.2 337.4L1065.0 317.0L1051.9 296.1L1039.3 274.8L1027.7 253.5L1017.5 232.9L1008.6 213.3L1000.8 194.9L994.4 178.2L989.4 163.2L985.7 150.1L983.1 138.6L981.5 128.7L980.9 120.2L981.2 112.9L982.4 106.6L984.3 101.2L987.0 96.7L990.3 93.1L994.2 90.2L998.6 88.1L1003.4 86.6L1008.5 85.6L1013.9 85.0L1019.5 84.6L1025.3 84.4L1031.2 84.4L1037.0 84.4L1042.9 84.4L1048.9 84.6L1055.0 84.9L1061.3 85.2L1067.7 85.6L1074.4 86.0L1081.3 86.6L1088.4 87.2L1095.8 87.8L1103.5 88.5L1111.5 89.3L1119.8 90.1L1128.5 90.9L1137.5 91.8L1146.9 92.8L1156.7 93.8L1166.9 94.9L1177.5 96.0L1188.6 97.2L1200.0 98.4L1211.9 99.6L1224.3 101.0L1237.1 102.3L1250.2 103.7L1263.8 105.2L1277.8 106.7L1292.1 108.2L1306.7 109.8L1321.6 111.3L1336.7 113.0L1351.9 114.6L1366.8 116.2L1381.4 117.7L1395.9 119.3L1410.4 120.8L1424.6 122.3L1438.2 123.8L1451.2 125.2L1463.6 126.5L1475.5 127.7L1486.7 128.9L1497.3 130.1L1507.2 131.1L1516.4 132.1L1524.9 133.0L1532.9 133.9L1540.4 134.7L1547.3 135.4L1553.8 136.1L1560.0 136.8L1565.9 137.4L1571.3 138.0L1576.4 138.5L1581.2 139.0L1585.6 139.5L1589.6 139.9L1593.2 140.3L1596.4 140.6L1599.2 140.9L1601.8 141.2L1604.2 141.5L1606.3 141.7L1608.2 141.9L1609.8 142.1L1611.2 142.2L1612.4 142.3L1613.4 142.5L1614.4 142.6L1615.4 142.7L1616.2 142.8L1617.0 142.8L1617.7 142.9L1618.5 143.0L1619.3 143.1L1620.0 143.2L1620.7 143.2L1621.3 143.3L1621.7 143.3L1622.0 143.4L1622.2 143.4L1622.5 143.4L1622.6 143.4L1622.8 143.5L1622.8 143.5L1627.2 144.0ZM1444.6 131.4L1108.5 102.2L1160.5 400.2Z" fill-rule="evenodd" fill="#000" fill-opacity="0.39"/>
</g></g>
<rect x="979.5" y="75.5" width="619.0" height="441.0" fill="none" stroke="#a4a4a4"/>
<line x1="979.5" y1="516.5" x2="979.5" y2="522" stroke="#d4d4d4" stroke-width="1"/>
<text x="979.5" y="535.8" font-size="12.6" fill="#d4d4d4" text-anchor="middle" textLength="8" lengthAdjust="spacingAndGlyphs">0</text>
<line x1="973.5" y1="516.5" x2="979.5" y2="516.5" stroke="#d4d4d4" stroke-width="1"/>
<text x="973" y="522.8" font-size="12.6" fill="#d4d4d4" text-anchor="end" textLength="8" lengthAdjust="spacingAndGlyphs">0</text>
<line x1="1031.1" y1="516.5" x2="1031.1" y2="522" stroke="#d4d4d4" stroke-width="1"/>
<text x="1031.1" y="535.8" font-size="12.6" fill="#d4d4d4" text-anchor="middle" textLength="27" lengthAdjust="spacingAndGlyphs">0,05</text>
<line x1="973.5" y1="479.825" x2="979.5" y2="479.825" stroke="#d4d4d4" stroke-width="1"/>
<text x="973" y="485.985" font-size="12.6" fill="#d4d4d4" text-anchor="end" textLength="27" lengthAdjust="spacingAndGlyphs">0,05</text>
<line x1="1082.7" y1="516.5" x2="1082.7" y2="522" stroke="#d4d4d4" stroke-width="1"/>
<text x="1082.7" y="535.8" font-size="12.6" fill="#d4d4d4" text-anchor="middle" textLength="18.5" lengthAdjust="spacingAndGlyphs">0,1</text>
<line x1="973.5" y1="443.15" x2="979.5" y2="443.15" stroke="#d4d4d4" stroke-width="1"/>
<text x="973" y="449.17" font-size="12.6" fill="#d4d4d4" text-anchor="end" textLength="18.5" lengthAdjust="spacingAndGlyphs">0,1</text>
<line x1="1134.3" y1="516.5" x2="1134.3" y2="522" stroke="#d4d4d4" stroke-width="1"/>
<text x="1134.3" y="535.8" font-size="12.6" fill="#d4d4d4" text-anchor="middle" textLength="27" lengthAdjust="spacingAndGlyphs">0,15</text>
<line x1="973.5" y1="406.475" x2="979.5" y2="406.475" stroke="#d4d4d4" stroke-width="1"/>
<text x="973" y="412.355" font-size="12.6" fill="#d4d4d4" text-anchor="end" textLength="27" lengthAdjust="spacingAndGlyphs">0,15</text>
<line x1="1185.9" y1="516.5" x2="1185.9" y2="522" stroke="#d4d4d4" stroke-width="1"/>
<text x="1185.9" y="535.8" font-size="12.6" fill="#d4d4d4" text-anchor="middle" textLength="18.5" lengthAdjust="spacingAndGlyphs">0,2</text>
<line x1="973.5" y1="369.8" x2="979.5" y2="369.8" stroke="#d4d4d4" stroke-width="1"/>
<text x="973" y="375.54" font-size="12.6" fill="#d4d4d4" text-anchor="end" textLength="18.5" lengthAdjust="spacingAndGlyphs">0,2</text>
<line x1="1237.5" y1="516.5" x2="1237.5" y2="522" stroke="#d4d4d4" stroke-width="1"/>
<text x="1237.5" y="535.8" font-size="12.6" fill="#d4d4d4" text-anchor="middle" textLength="27" lengthAdjust="spacingAndGlyphs">0,25</text>
<line x1="973.5" y1="333.125" x2="979.5" y2="333.125" stroke="#d4d4d4" stroke-width="1"/>
<text x="973" y="338.725" font-size="12.6" fill="#d4d4d4" text-anchor="end" textLength="27" lengthAdjust="spacingAndGlyphs">0,25</text>
<line x1="1289.1" y1="516.5" x2="1289.1" y2="522" stroke="#d4d4d4" stroke-width="1"/>
<text x="1289.1" y="535.8" font-size="12.6" fill="#d4d4d4" text-anchor="middle" textLength="18.5" lengthAdjust="spacingAndGlyphs">0,3</text>
<line x1="973.5" y1="296.45" x2="979.5" y2="296.45" stroke="#d4d4d4" stroke-width="1"/>
<text x="973" y="301.91" font-size="12.6" fill="#d4d4d4" text-anchor="end" textLength="18.5" lengthAdjust="spacingAndGlyphs">0,3</text>
<line x1="1340.7" y1="516.5" x2="1340.7" y2="522" stroke="#d4d4d4" stroke-width="1"/>
<text x="1340.7" y="535.8" font-size="12.6" fill="#d4d4d4" text-anchor="middle" textLength="27" lengthAdjust="spacingAndGlyphs">0,35</text>
<line x1="973.5" y1="259.775" x2="979.5" y2="259.775" stroke="#d4d4d4" stroke-width="1"/>
<text x="973" y="265.095" font-size="12.6" fill="#d4d4d4" text-anchor="end" textLength="27" lengthAdjust="spacingAndGlyphs">0,35</text>
<line x1="1392.3" y1="516.5" x2="1392.3" y2="522" stroke="#d4d4d4" stroke-width="1"/>
<text x="1392.3" y="535.8" font-size="12.6" fill="#d4d4d4" text-anchor="middle" textLength="18.5" lengthAdjust="spacingAndGlyphs">0,4</text>
<line x1="973.5" y1="223.1" x2="979.5" y2="223.1" stroke="#d4d4d4" stroke-width="1"/>
<text x="973" y="228.28" font-size="12.6" fill="#d4d4d4" text-anchor="end" textLength="18.5" lengthAdjust="spacingAndGlyphs">0,4</text>
<line x1="1443.9" y1="516.5" x2="1443.9" y2="522" stroke="#d4d4d4" stroke-width="1"/>
<text x="1443.9" y="535.8" font-size="12.6" fill="#d4d4d4" text-anchor="middle" textLength="27" lengthAdjust="spacingAndGlyphs">0,45</text>
<line x1="973.5" y1="186.425" x2="979.5" y2="186.425" stroke="#d4d4d4" stroke-width="1"/>
<text x="973" y="191.465" font-size="12.6" fill="#d4d4d4" text-anchor="end" textLength="27" lengthAdjust="spacingAndGlyphs">0,45</text>
<line x1="1495.5" y1="516.5" x2="1495.5" y2="522" stroke="#d4d4d4" stroke-width="1"/>
<text x="1495.5" y="535.8" font-size="12.6" fill="#d4d4d4" text-anchor="middle" textLength="18.5" lengthAdjust="spacingAndGlyphs">0,5</text>
<line x1="973.5" y1="149.75" x2="979.5" y2="149.75" stroke="#d4d4d4" stroke-width="1"/>
<text x="973" y="154.65" font-size="12.6" fill="#d4d4d4" text-anchor="end" textLength="18.5" lengthAdjust="spacingAndGlyphs">0,5</text>
<line x1="1547.1" y1="516.5" x2="1547.1" y2="522" stroke="#d4d4d4" stroke-width="1"/>
<text x="1547.1" y="535.8" font-size="12.6" fill="#d4d4d4" text-anchor="middle" textLength="27" lengthAdjust="spacingAndGlyphs">0,55</text>
<line x1="973.5" y1="113.075" x2="979.5" y2="113.075" stroke="#d4d4d4" stroke-width="1"/>
<text x="973" y="117.835" font-size="12.6" fill="#d4d4d4" text-anchor="end" textLength="27" lengthAdjust="spacingAndGlyphs">0,55</text>
<rect x="1101" y="95.8" width="13" height="12.4" fill="none" stroke="#fff" stroke-width="1.2"/>
<rect x="1125.1" y="117.7" width="13" height="12.4" fill="none" stroke="#fff" stroke-width="1.2"/>
<rect x="1163.1" y="110.2" width="13" height="12.4" fill="none" stroke="#fff" stroke-width="1.2"/>
<rect x="1183.1" y="103.2" width="13" height="12.4" fill="none" stroke="#fff" stroke-width="1.2"/>
<rect x="1209.5" y="106.6" width="13" height="12.4" fill="none" stroke="#fff" stroke-width="1.2"/>
<rect x="1239.6" y="112.7" width="13" height="12.4" fill="none" stroke="#fff" stroke-width="1.2"/>
<rect x="1280.4" y="116.8" width="13" height="12.4" fill="none" stroke="#fff" stroke-width="1.2"/>
<rect x="1437.5" y="125.2" width="13" height="12.4" fill="none" stroke="#fff" stroke-width="1.2"/>
<rect x="1162.2" y="130.3" width="13" height="12.4" fill="none" stroke="#fff" stroke-width="1.2"/>
<rect x="1225.1" y="143.2" width="13" height="12.4" fill="none" stroke="#fff" stroke-width="1.2"/>
<rect x="1212" y="148.2" width="13" height="12.4" fill="none" stroke="#fff" stroke-width="1.2"/>
<rect x="1299.3" y="154.4" width="13" height="12.4" fill="none" stroke="#fff" stroke-width="1.2"/>
<rect x="1358.5" y="142.4" width="13" height="12.4" fill="none" stroke="#fff" stroke-width="1.2"/>
<rect x="1131.6" y="159.3" width="13" height="12.4" fill="none" stroke="#fff" stroke-width="1.2"/>
<rect x="1115.4" y="175.4" width="13" height="12.4" fill="none" stroke="#fff" stroke-width="1.2"/>
<rect x="1120.9" y="203.3" width="13" height="12.4" fill="none" stroke="#fff" stroke-width="1.2"/>
<rect x="1153.9" y="200.6" width="13" height="12.4" fill="none" stroke="#fff" stroke-width="1.2"/>
<rect x="1175" y="205.8" width="13" height="12.4" fill="none" stroke="#fff" stroke-width="1.2"/>
<rect x="1268.5" y="197.3" width="13" height="12.4" fill="none" stroke="#fff" stroke-width="1.2"/>
<rect x="1208.1" y="220.4" width="13" height="12.4" fill="none" stroke="#fff" stroke-width="1.2"/>
<rect x="1156.5" y="248.4" width="13" height="12.4" fill="none" stroke="#fff" stroke-width="1.2"/>
<rect x="1287.1" y="266.7" width="13" height="12.4" fill="none" stroke="#fff" stroke-width="1.2"/>
<rect x="1156.5" y="292.4" width="13" height="12.4" fill="none" stroke="#fff" stroke-width="1.2"/>
<rect x="1154" y="393.3" width="13" height="12.4" fill="none" stroke="#fff" stroke-width="1.2"/>
<rect x="1177" y="166.1" width="12" height="11.6" fill="none" stroke="#000" stroke-width="2"/>
<ellipse cx="1173.4" cy="177" rx="4.2" ry="3.8" fill="#f4f4f4" stroke="#000" stroke-width="1.1"/>
<ellipse cx="1114.5" cy="101.1" rx="4.2" ry="3.8" fill="#00ff00" stroke="#000" stroke-width="1.1"/>
<ellipse cx="1155" cy="107" rx="4.2" ry="3.8" fill="#a2b444" stroke="#000" stroke-width="1.1"/>
<ellipse cx="1172.5" cy="105.6" rx="4.2" ry="3.8" fill="#ffff10" stroke="#000" stroke-width="1.1"/>
<ellipse cx="1195.8" cy="107.9" rx="4.2" ry="3.8" fill="#e2b436" stroke="#000" stroke-width="1.1"/>
<ellipse cx="1226.5" cy="113" rx="4.2" ry="3.8" fill="#d8a244" stroke="#000" stroke-width="1.1"/>
<ellipse cx="1270" cy="118" rx="4.2" ry="3.8" fill="#cc8238" stroke="#000" stroke-width="1.1"/>
<ellipse cx="1429.3" cy="129" rx="4.2" ry="3.8" fill="#f00000" stroke="#000" stroke-width="1.1"/>
<ellipse cx="1128.5" cy="118.9" rx="4.2" ry="3.8" fill="#4a8c4e" stroke="#000" stroke-width="1.1"/>
<ellipse cx="1159" cy="135" rx="4.2" ry="3.8" fill="#5c6c44" stroke="#000" stroke-width="1.1"/>
<ellipse cx="1218.5" cy="149.3" rx="4.2" ry="3.8" fill="#70584a" stroke="#000" stroke-width="1.1"/>
<ellipse cx="1203.9" cy="154.4" rx="4.2" ry="3.8" fill="#b49484" stroke="#000" stroke-width="1.1"/>
<ellipse cx="1300.8" cy="162.8" rx="4.2" ry="3.8" fill="#b05464" stroke="#000" stroke-width="1.1"/>
<ellipse cx="1369" cy="146.9" rx="4.2" ry="3.8" fill="#b03c4c" stroke="#000" stroke-width="1.1"/>
<ellipse cx="1137.8" cy="166.4" rx="4.2" ry="3.8" fill="#72b4a4" stroke="#000" stroke-width="1.1"/>
<ellipse cx="1174.8" cy="174" rx="4.2" ry="3.8" fill="#9c9c9c" stroke="#000" stroke-width="1.1"/>
<ellipse cx="1128.5" cy="186.4" rx="4.2" ry="3.8" fill="#10f4ff" stroke="#000" stroke-width="1.1"/>
<ellipse cx="1197.5" cy="195.1" rx="4.2" ry="3.8" fill="#000" stroke="#000" stroke-width="1.1"/>
<ellipse cx="1134" cy="223" rx="4.2" ry="3.8" fill="#108c94" stroke="#000" stroke-width="1.1"/>
<ellipse cx="1157.3" cy="216.4" rx="4.2" ry="3.8" fill="#6c82a2" stroke="#000" stroke-width="1.1"/>
<ellipse cx="1173.4" cy="216.4" rx="4.2" ry="3.8" fill="#8a8ab2" stroke="#000" stroke-width="1.1"/>
<ellipse cx="1261.9" cy="216.4" rx="4.2" ry="3.8" fill="#b26494" stroke="#000" stroke-width="1.1"/>
<ellipse cx="1202.5" cy="241" rx="4.2" ry="3.8" fill="#5c426a" stroke="#000" stroke-width="1.1"/>
<ellipse cx="1161.5" cy="273" rx="4.2" ry="3.8" fill="#5262a2" stroke="#000" stroke-width="1.1"/>
<ellipse cx="1270.2" cy="299.3" rx="4.2" ry="3.8" fill="#ff10ff" stroke="#000" stroke-width="1.1"/>
<ellipse cx="1163" cy="321.6" rx="4.2" ry="3.8" fill="#4a52a0" stroke="#000" stroke-width="1.1"/>
<ellipse cx="1164.9" cy="410" rx="4.2" ry="3.8" fill="#0000ff" stroke="#00004a" stroke-width="1.1"/>
<rect x="1398.5" y="359.5" width="198" height="122" fill="#222"/>
<clipPath id="cIn"><rect x="1401.5" y="362.5" width="192.0" height="116.0"/></clipPath><g clip-path="url(#cIn)">
<rect x="1401.5" y="362.5" width="192" height="116" fill="url(#gIn)"/>
<path d="M1391.5 369.5L1603.5 470.5V352.5H1391.5Z" fill="#000" fill-opacity="0.4"/>
<rect x="1489.7" y="413.4" width="14" height="13" fill="none" stroke="#fff" stroke-width="1.2"/>
<rect x="1574.3" y="470.5" width="14" height="13" fill="none" stroke="#fff" stroke-width="1.2"/>
<ellipse cx="1442.4" cy="371" rx="4.2" ry="3.8" fill="#fff41a" stroke="#000"/>
<ellipse cx="1528.5" cy="424.5" rx="4.2" ry="3.8" fill="#e6b42a" stroke="#000"/>
</g>
<rect x="1401.5" y="362.5" width="192.0" height="116.0" fill="none" stroke="#8c8c8c" stroke-width="1.2"/>
<rect x="1352" y="487.5" width="245" height="24.5" fill="#2c2c2c"/>
<text x="1353.6" y="505.8" font-size="18.5" fill="#f0f0f0" textLength="214.5" lengthAdjust="spacingAndGlyphs">RGB Triplet: 235, 235, 16</text>
<rect x="304" y="562" width="1297" height="12.3" fill="url(#gH1)"/>
<rect x="304" y="574.3" width="1297" height="12.5" fill="url(#gH2)"/>
<rect x="304" y="562" width="16" height="24.8" fill="#000"/>
<text x="453.7" y="579.3" font-size="13.5" fill="#f4f4f4" textLength="45" lengthAdjust="spacingAndGlyphs" stroke="#f4f4f4" stroke-width="0.28">White</text>
<text x="540.4" y="579.3" font-size="13.5" fill="#f4f4f4" textLength="59" lengthAdjust="spacingAndGlyphs" stroke="#f4f4f4" stroke-width="0.28">Gray 80</text>
<text x="627.2" y="579.3" font-size="13.5" fill="#f4f4f4" textLength="59" lengthAdjust="spacingAndGlyphs" stroke="#f4f4f4" stroke-width="0.28">Gray 65</text>
<text x="714.1" y="579.3" font-size="13.5" fill="#f4f4f4" textLength="59" lengthAdjust="spacingAndGlyphs" stroke="#f4f4f4" stroke-width="0.28">Gray 50</text>
<text x="801" y="579.3" font-size="13.5" fill="#f4f4f4" textLength="59" lengthAdjust="spacingAndGlyphs" stroke="#f4f4f4" stroke-width="0.28">Gray 35</text>
<text x="888" y="579.3" font-size="13.5" fill="#f4f4f4" textLength="40.5" lengthAdjust="spacingAndGlyphs" stroke="#f4f4f4" stroke-width="0.28">Black</text>
<text x="954.5" y="579.3" font-size="13.5" fill="#f4f4f4" textLength="71.4" lengthAdjust="spacingAndGlyphs" stroke="#f4f4f4" stroke-width="0.28">Dark Skin</text>
<text x="1036.2" y="579.3" font-size="13.5" fill="#f4f4f4" textLength="72.3" lengthAdjust="spacingAndGlyphs" stroke="#f4f4f4" stroke-width="0.28">Light Skin</text>
<text x="1122.9" y="579.3" font-size="13.5" fill="#f4f4f4" textLength="63.6" lengthAdjust="spacingAndGlyphs" stroke="#f4f4f4" stroke-width="0.28">Blue Sky</text>
<text x="1199.7" y="579.3" font-size="13.5" fill="#f4f4f4" textLength="54" lengthAdjust="spacingAndGlyphs" stroke="#f4f4f4" stroke-width="0.28">Foliage</text>
<text x="1276.5" y="579.3" font-size="13.5" fill="#f4f4f4" textLength="90" lengthAdjust="spacingAndGlyphs" stroke="#f4f4f4" stroke-width="0.28">Blue Flower</text>
<text x="1376.8" y="579.3" font-size="13.5" fill="#f4f4f4" textLength="97" lengthAdjust="spacingAndGlyphs" stroke="#f4f4f4" stroke-width="0.28">Bluish Green</text>
<text x="1484.2" y="579.3" font-size="13.5" fill="#f4f4f4" textLength="55.3" lengthAdjust="spacingAndGlyphs" stroke="#f4f4f4" stroke-width="0.28">Orange</text>
<text x="1571.7" y="579.3" font-size="13.5" fill="#f4f4f4" textLength="50" lengthAdjust="spacingAndGlyphs" stroke="#f4f4f4" stroke-width="0.28">Purple</text>
<rect x="320" y="586.8" width="1281" height="23.5" fill="url(#gRd)"/>
<rect x="304" y="586.8" width="16" height="23.5" fill="url(#gRh)"/>
<text x="325" y="603.6" font-size="15" fill="#f0f0f0" textLength="63.3" lengthAdjust="spacingAndGlyphs">x: CIE31</text>
<text x="453.2" y="603.6" font-size="15" fill="#f0f0f0" textLength="55" lengthAdjust="spacingAndGlyphs">0,2959</text>
<text x="539.9" y="603.6" font-size="15" fill="#f0f0f0" textLength="55" lengthAdjust="spacingAndGlyphs">0,2980</text>
<text x="626.7" y="603.6" font-size="15" fill="#f0f0f0" textLength="55" lengthAdjust="spacingAndGlyphs">0,2983</text>
<text x="713.6" y="603.6" font-size="15" fill="#f0f0f0" textLength="55" lengthAdjust="spacingAndGlyphs">0,2985</text>
<text x="800.5" y="603.6" font-size="15" fill="#f0f0f0" textLength="55" lengthAdjust="spacingAndGlyphs">0,2985</text>
<text x="887.5" y="603.6" font-size="15" fill="#f0f0f0" textLength="55" lengthAdjust="spacingAndGlyphs">0,3025</text>
<text x="954" y="603.6" font-size="15" fill="#f0f0f0" textLength="55" lengthAdjust="spacingAndGlyphs">0,3848</text>
<text x="1035.7" y="603.6" font-size="15" fill="#f0f0f0" textLength="55" lengthAdjust="spacingAndGlyphs">0,3596</text>
<text x="1122.4" y="603.6" font-size="15" fill="#f0f0f0" textLength="55" lengthAdjust="spacingAndGlyphs">0,2387</text>
<text x="1199.2" y="603.6" font-size="15" fill="#f0f0f0" textLength="55" lengthAdjust="spacingAndGlyphs">0,3300</text>
<text x="1276" y="603.6" font-size="15" fill="#f0f0f0" textLength="55" lengthAdjust="spacingAndGlyphs">0,2561</text>
<text x="1376.3" y="603.6" font-size="15" fill="#f0f0f0" textLength="55" lengthAdjust="spacingAndGlyphs">0,2603</text>
<text x="1483.7" y="603.6" font-size="15" fill="#f0f0f0" textLength="55" lengthAdjust="spacingAndGlyphs">0,5047</text>
<text x="1571.2" y="603.6" font-size="15" fill="#f0f0f0" textLength="55" lengthAdjust="spacingAndGlyphs">0,2089</text>
<rect x="320" y="610" width="1281" height="23.5" fill="url(#gRl)"/>
<rect x="304" y="610" width="16" height="23.5" fill="url(#gRh)"/>
<text x="325" y="626.8" font-size="15" fill="#f0f0f0" textLength="63.3" lengthAdjust="spacingAndGlyphs">y: CIE31</text>
<text x="453.2" y="626.8" font-size="15" fill="#f0f0f0" textLength="55" lengthAdjust="spacingAndGlyphs">0,3222</text>
<text x="539.9" y="626.8" font-size="15" fill="#f0f0f0" textLength="55" lengthAdjust="spacingAndGlyphs">0,3254</text>
<text x="626.7" y="626.8" font-size="15" fill="#f0f0f0" textLength="55" lengthAdjust="spacingAndGlyphs">0,3258</text>
<text x="713.6" y="626.8" font-size="15" fill="#f0f0f0" textLength="55" lengthAdjust="spacingAndGlyphs">0,3260</text>
<text x="800.5" y="626.8" font-size="15" fill="#f0f0f0" textLength="55" lengthAdjust="spacingAndGlyphs">0,3259</text>
<text x="887.5" y="626.8" font-size="15" fill="#f0f0f0" textLength="55" lengthAdjust="spacingAndGlyphs">0,2783</text>
<text x="954" y="626.8" font-size="15" fill="#f0f0f0" textLength="55" lengthAdjust="spacingAndGlyphs">0,3683</text>
<text x="1035.7" y="626.8" font-size="15" fill="#f0f0f0" textLength="55" lengthAdjust="spacingAndGlyphs">0,3596</text>
<text x="1122.4" y="626.8" font-size="15" fill="#f0f0f0" textLength="55" lengthAdjust="spacingAndGlyphs">0,2501</text>
<text x="1199.2" y="626.8" font-size="15" fill="#f0f0f0" textLength="55" lengthAdjust="spacingAndGlyphs">0,4368</text>
<text x="1276" y="626.8" font-size="15" fill="#f0f0f0" textLength="55" lengthAdjust="spacingAndGlyphs">0,2456</text>
<text x="1376.3" y="626.8" font-size="15" fill="#f0f0f0" textLength="55" lengthAdjust="spacingAndGlyphs">0,3552</text>
<text x="1483.7" y="626.8" font-size="15" fill="#f0f0f0" textLength="55" lengthAdjust="spacingAndGlyphs">0,4309</text>
<text x="1571.2" y="626.8" font-size="15" fill="#f0f0f0" textLength="55" lengthAdjust="spacingAndGlyphs">0,1691</text>
<rect x="320" y="633.2" width="1281" height="23.5" fill="url(#gRd)"/>
<rect x="304" y="633.2" width="16" height="23.5" fill="url(#gRh)"/>
<text x="325" y="650" font-size="15" fill="#f0f0f0" textLength="11.4" lengthAdjust="spacingAndGlyphs">Y</text>
<text x="453.2" y="650" font-size="15" fill="#f0f0f0" textLength="75.1" lengthAdjust="spacingAndGlyphs">459,3945</text>
<text x="539.9" y="650" font-size="15" fill="#f0f0f0" textLength="75.1" lengthAdjust="spacingAndGlyphs">367,7069</text>
<text x="626.7" y="650" font-size="15" fill="#f0f0f0" textLength="75.1" lengthAdjust="spacingAndGlyphs">302,8277</text>
<text x="713.6" y="650" font-size="15" fill="#f0f0f0" textLength="75.1" lengthAdjust="spacingAndGlyphs">237,2666</text>
<text x="800.5" y="650" font-size="15" fill="#f0f0f0" textLength="75.1" lengthAdjust="spacingAndGlyphs">166,0913</text>
<text x="887.5" y="650" font-size="15" fill="#f0f0f0" textLength="55" lengthAdjust="spacingAndGlyphs">0,7056</text>
<text x="954" y="650" font-size="15" fill="#f0f0f0" textLength="65.1" lengthAdjust="spacingAndGlyphs">44,9809</text>
<text x="1035.7" y="650" font-size="15" fill="#f0f0f0" textLength="75.1" lengthAdjust="spacingAndGlyphs">162,5462</text>
<text x="1122.4" y="650" font-size="15" fill="#f0f0f0" textLength="65.1" lengthAdjust="spacingAndGlyphs">91,4671</text>
<text x="1199.2" y="650" font-size="15" fill="#f0f0f0" textLength="65.1" lengthAdjust="spacingAndGlyphs">63,8245</text>
<text x="1276" y="650" font-size="15" fill="#f0f0f0" textLength="73.7" lengthAdjust="spacingAndGlyphs">113,2696</text>
<text x="1376.3" y="650" font-size="15" fill="#f0f0f0" textLength="75.1" lengthAdjust="spacingAndGlyphs">208,8048</text>
<text x="1483.7" y="650" font-size="15" fill="#f0f0f0" textLength="75.1" lengthAdjust="spacingAndGlyphs">126,1358</text>
<text x="1571.2" y="650" font-size="15" fill="#f0f0f0" textLength="65.1" lengthAdjust="spacingAndGlyphs">55,8273</text>
<rect x="320" y="656.4" width="1281" height="23.5" fill="url(#gRl)"/>
<rect x="304" y="656.4" width="16" height="23.5" fill="url(#gRh)"/>
<text x="325" y="673.2" font-size="15" fill="#f0f0f0" textLength="114.9" lengthAdjust="spacingAndGlyphs">Target x:CIE31</text>
<text x="453.2" y="673.2" font-size="15" fill="#f0f0f0" textLength="55" lengthAdjust="spacingAndGlyphs">0,3127</text>
<text x="539.9" y="673.2" font-size="15" fill="#f0f0f0" textLength="55" lengthAdjust="spacingAndGlyphs">0,3127</text>
<text x="626.7" y="673.2" font-size="15" fill="#f0f0f0" textLength="55" lengthAdjust="spacingAndGlyphs">0,3127</text>
<text x="713.6" y="673.2" font-size="15" fill="#f0f0f0" textLength="55" lengthAdjust="spacingAndGlyphs">0,3127</text>
<text x="800.5" y="673.2" font-size="15" fill="#f0f0f0" textLength="55" lengthAdjust="spacingAndGlyphs">0,3127</text>
<text x="887.5" y="673.2" font-size="15" fill="#f0f0f0" textLength="55" lengthAdjust="spacingAndGlyphs">0,3127</text>
<text x="954" y="673.2" font-size="15" fill="#f0f0f0" textLength="55" lengthAdjust="spacingAndGlyphs">0,4005</text>
<text x="1035.7" y="673.2" font-size="15" fill="#f0f0f0" textLength="55" lengthAdjust="spacingAndGlyphs">0,3782</text>
<text x="1122.4" y="673.2" font-size="15" fill="#f0f0f0" textLength="55" lengthAdjust="spacingAndGlyphs">0,2500</text>
<text x="1199.2" y="673.2" font-size="15" fill="#f0f0f0" textLength="55" lengthAdjust="spacingAndGlyphs">0,3400</text>
<text x="1276" y="673.2" font-size="15" fill="#f0f0f0" textLength="55" lengthAdjust="spacingAndGlyphs">0,2687</text>
<text x="1376.3" y="673.2" font-size="15" fill="#f0f0f0" textLength="55" lengthAdjust="spacingAndGlyphs">0,2620</text>
<text x="1483.7" y="673.2" font-size="15" fill="#f0f0f0" textLength="55" lengthAdjust="spacingAndGlyphs">0,5120</text>
<text x="1571.2" y="673.2" font-size="15" fill="#f0f0f0" textLength="55" lengthAdjust="spacingAndGlyphs">0,2135</text>
<rect x="320" y="679.6" width="1281" height="23.5" fill="url(#gRd)"/>
<rect x="304" y="679.6" width="16" height="23.5" fill="url(#gRh)"/>
<text x="325" y="696.4" font-size="15" fill="#f0f0f0" textLength="115.5" lengthAdjust="spacingAndGlyphs">Target y:CIE31</text>
<text x="453.2" y="696.4" font-size="15" fill="#f0f0f0" textLength="55" lengthAdjust="spacingAndGlyphs">0,3290</text>
<text x="539.9" y="696.4" font-size="15" fill="#f0f0f0" textLength="55" lengthAdjust="spacingAndGlyphs">0,3290</text>
<text x="626.7" y="696.4" font-size="15" fill="#f0f0f0" textLength="55" lengthAdjust="spacingAndGlyphs">0,3290</text>
<text x="713.6" y="696.4" font-size="15" fill="#f0f0f0" textLength="55" lengthAdjust="spacingAndGlyphs">0,3290</text>
<text x="800.5" y="696.4" font-size="15" fill="#f0f0f0" textLength="55" lengthAdjust="spacingAndGlyphs">0,3290</text>
<text x="887.5" y="696.4" font-size="15" fill="#f0f0f0" textLength="55" lengthAdjust="spacingAndGlyphs">0,3290</text>
<text x="954" y="696.4" font-size="15" fill="#f0f0f0" textLength="55" lengthAdjust="spacingAndGlyphs">0,3623</text>
<text x="1035.7" y="696.4" font-size="15" fill="#f0f0f0" textLength="55" lengthAdjust="spacingAndGlyphs">0,3560</text>
<text x="1122.4" y="696.4" font-size="15" fill="#f0f0f0" textLength="55" lengthAdjust="spacingAndGlyphs">0,2661</text>
<text x="1199.2" y="696.4" font-size="15" fill="#f0f0f0" textLength="55" lengthAdjust="spacingAndGlyphs">0,4261</text>
<text x="1276" y="696.4" font-size="15" fill="#f0f0f0" textLength="55" lengthAdjust="spacingAndGlyphs">0,2530</text>
<text x="1376.3" y="696.4" font-size="15" fill="#f0f0f0" textLength="55" lengthAdjust="spacingAndGlyphs">0,3597</text>
<text x="1483.7" y="696.4" font-size="15" fill="#f0f0f0" textLength="55" lengthAdjust="spacingAndGlyphs">0,4066</text>
<text x="1571.2" y="696.4" font-size="15" fill="#f0f0f0" textLength="55" lengthAdjust="spacingAndGlyphs">0,1926</text>
<rect x="320" y="702.8" width="1281" height="23.5" fill="url(#gRl)"/>
<rect x="304" y="702.8" width="16" height="23.5" fill="url(#gRh)"/>
<text x="325" y="719.6" font-size="15" fill="#f0f0f0" textLength="66.2" lengthAdjust="spacingAndGlyphs">Target Y</text>
<text x="453.2" y="719.6" font-size="15" fill="#f0f0f0" textLength="75.1" lengthAdjust="spacingAndGlyphs">459,3945</text>
<text x="539.9" y="719.6" font-size="15" fill="#f0f0f0" textLength="75.1" lengthAdjust="spacingAndGlyphs">361,3179</text>
<text x="626.7" y="719.6" font-size="15" fill="#f0f0f0" textLength="75.1" lengthAdjust="spacingAndGlyphs">294,7686</text>
<text x="713.6" y="719.6" font-size="15" fill="#f0f0f0" textLength="75.1" lengthAdjust="spacingAndGlyphs">226,3888</text>
<text x="800.5" y="719.6" font-size="15" fill="#f0f0f0" textLength="75.1" lengthAdjust="spacingAndGlyphs">157,8552</text>
<text x="887.5" y="719.6" font-size="15" fill="#f0f0f0" textLength="55" lengthAdjust="spacingAndGlyphs">0,0000</text>
<text x="954" y="719.6" font-size="15" fill="#f0f0f0" textLength="65.1" lengthAdjust="spacingAndGlyphs">46,0413</text>
<text x="1035.7" y="719.6" font-size="15" fill="#f0f0f0" textLength="75.1" lengthAdjust="spacingAndGlyphs">160,2267</text>
<text x="1122.4" y="719.6" font-size="15" fill="#f0f0f0" textLength="65.1" lengthAdjust="spacingAndGlyphs">86,2744</text>
<text x="1199.2" y="719.6" font-size="15" fill="#f0f0f0" textLength="65.1" lengthAdjust="spacingAndGlyphs">60,1588</text>
<text x="1276" y="719.6" font-size="15" fill="#f0f0f0" textLength="75.1" lengthAdjust="spacingAndGlyphs">107,3397</text>
<text x="1376.3" y="719.6" font-size="15" fill="#f0f0f0" textLength="75.1" lengthAdjust="spacingAndGlyphs">191,7687</text>
<text x="1483.7" y="719.6" font-size="15" fill="#f0f0f0" textLength="75.1" lengthAdjust="spacingAndGlyphs">129,8461</text>
<text x="1571.2" y="719.6" font-size="15" fill="#f0f0f0" textLength="63.7" lengthAdjust="spacingAndGlyphs">54,0311</text>
<rect x="320" y="726" width="1281" height="23.5" fill="url(#gRd)"/>
<rect x="304" y="726" width="16" height="23.5" fill="url(#gRh)"/>
<text x="325" y="742.8" font-size="15" fill="#f0f0f0" textLength="67.4" lengthAdjust="spacingAndGlyphs">ΔE 2000</text>
<text x="453.2" y="742.8" font-size="15" fill="#f0f0f0" textLength="55" lengthAdjust="spacingAndGlyphs">8,3179</text>
<text x="539.9" y="742.8" font-size="15" fill="#f0f0f0" textLength="55" lengthAdjust="spacingAndGlyphs">7,7498</text>
<text x="626.7" y="742.8" font-size="15" fill="#f0f0f0" textLength="55" lengthAdjust="spacingAndGlyphs">7,3519</text>
<text x="713.6" y="742.8" font-size="15" fill="#f0f0f0" textLength="55" lengthAdjust="spacingAndGlyphs">6,8893</text>
<text x="800.5" y="742.8" font-size="15" fill="#f0f0f0" textLength="55" lengthAdjust="spacingAndGlyphs">6,2075</text>
<text x="887.5" y="742.8" font-size="15" fill="#f0f0f0" textLength="55" lengthAdjust="spacingAndGlyphs">1,7231</text>
<text x="954" y="742.8" font-size="15" fill="#f0f0f0" textLength="55" lengthAdjust="spacingAndGlyphs">4,3377</text>
<text x="1035.7" y="742.8" font-size="15" fill="#f0f0f0" textLength="55" lengthAdjust="spacingAndGlyphs">6,6501</text>
<text x="1122.4" y="742.8" font-size="15" fill="#f0f0f0" textLength="55" lengthAdjust="spacingAndGlyphs">2,6649</text>
<text x="1199.2" y="742.8" font-size="15" fill="#f0f0f0" textLength="55" lengthAdjust="spacingAndGlyphs">2,9680</text>
<text x="1276" y="742.8" font-size="15" fill="#f0f0f0" textLength="55" lengthAdjust="spacingAndGlyphs">3,8602</text>
<text x="1376.3" y="742.8" font-size="15" fill="#f0f0f0" textLength="53.7" lengthAdjust="spacingAndGlyphs">2,1132</text>
<text x="1483.7" y="742.8" font-size="15" fill="#f0f0f0" textLength="55" lengthAdjust="spacingAndGlyphs">6,7534</text>
<text x="1571.2" y="742.8" font-size="15" fill="#f0f0f0" textLength="55" lengthAdjust="spacingAndGlyphs">2,7041</text>
<rect x="320" y="749.2" width="1281" height="14.8" fill="#5c5c5c"/>
<rect x="321.7" y="750.5" width="16.3" height="11.4" rx="2.5" fill="#8a8a8a"/><path d="M325.5 756.2l8-5v10z" fill="#2e2e2e"/>
<rect x="341" y="750.8" width="560" height="11" rx="5.5" fill="#444"/>
<rect x="1588" y="750.5" width="16.3" height="11.4" rx="2.5" fill="#8a8a8a"/><path d="M1600.5 756.2l-8-5v10z" fill="#2e2e2e"/>
<rect x="0" y="767.3" width="1126.5" height="85" fill="#414141"/>
<rect x="-48" y="768" width="75" height="73" rx="5.5" fill="url(#gSB)"/>
<rect x="-40.2" y="775.8" width="59.6" height="18.2" rx="6" fill="#d8566a"/>
<path d="M-39.7 790v-10.2a4 4 0 0 1 4-4h51" fill="none" stroke="#000" stroke-opacity="0.28" stroke-width="1.3"/>
<text x="-46.25" y="816.7" font-size="15" fill="#242424" textLength="71.5" lengthAdjust="spacingAndGlyphs" font-weight="bold">Moderate</text>
<text x="-46.25" y="834.2" font-size="15" fill="#242424" textLength="28" lengthAdjust="spacingAndGlyphs" font-weight="bold">Red</text>
<rect x="30" y="768" width="75" height="73" rx="5.5" fill="url(#gSB)"/>
<rect x="37.8" y="775.8" width="59.6" height="36.2" rx="5" fill="#5c3d6e"/>
<path d="M38.3 808v-28.2a4 4 0 0 1 4-4h51" fill="none" stroke="#000" stroke-opacity="0.28" stroke-width="1.3"/>
<text x="67.5" y="834.2" font-size="15" fill="#242424" text-anchor="middle" textLength="47.6" lengthAdjust="spacingAndGlyphs" font-weight="bold">Purple</text>
<rect x="108" y="768" width="75" height="73" rx="5.5" fill="url(#gSB)"/>
<rect x="115.8" y="775.8" width="59.6" height="18.2" rx="6" fill="#a2c040"/>
<path d="M116.3 790v-10.2a4 4 0 0 1 4-4h51" fill="none" stroke="#000" stroke-opacity="0.28" stroke-width="1.3"/>
<text x="121.7" y="816.7" font-size="15" fill="#242424" textLength="47.6" lengthAdjust="spacingAndGlyphs" font-weight="bold">Yellow</text>
<text x="121.7" y="834.2" font-size="15" fill="#242424" textLength="44" lengthAdjust="spacingAndGlyphs" font-weight="bold">Green</text>
<rect x="186" y="768" width="75" height="73" rx="5.5" fill="url(#gSB)"/>
<rect x="193.8" y="775.8" width="59.6" height="18.2" rx="6" fill="#eba52d"/>
<path d="M194.3 790v-10.2a4 4 0 0 1 4-4h51" fill="none" stroke="#000" stroke-opacity="0.28" stroke-width="1.3"/>
<text x="196.85" y="816.7" font-size="15" fill="#242424" textLength="53.3" lengthAdjust="spacingAndGlyphs" font-weight="bold">Orange</text>
<text x="196.85" y="834.2" font-size="15" fill="#242424" textLength="47.6" lengthAdjust="spacingAndGlyphs" font-weight="bold">Yellow</text>
<rect x="264" y="768" width="75" height="73" rx="5.5" fill="url(#gSB)"/>
<rect x="271.8" y="775.8" width="59.6" height="36.2" rx="5" fill="#3340a0"/>
<path d="M272.3 808v-28.2a4 4 0 0 1 4-4h51" fill="none" stroke="#000" stroke-opacity="0.28" stroke-width="1.3"/>
<text x="301.5" y="834.2" font-size="15" fill="#242424" text-anchor="middle" textLength="33" lengthAdjust="spacingAndGlyphs" font-weight="bold">Blue</text>
<rect x="342" y="768" width="75" height="73" rx="5.5" fill="url(#gSB)"/>
<rect x="349.8" y="775.8" width="59.6" height="36.2" rx="5" fill="#479a4c"/>
<path d="M350.3 808v-28.2a4 4 0 0 1 4-4h51" fill="none" stroke="#000" stroke-opacity="0.28" stroke-width="1.3"/>
<text x="379.5" y="834.2" font-size="15" fill="#242424" text-anchor="middle" textLength="44" lengthAdjust="spacingAndGlyphs" font-weight="bold">Green</text>
<rect x="420" y="768" width="75" height="73" rx="5.5" fill="url(#gSB)"/>
<rect x="427.8" y="775.8" width="59.6" height="36.2" rx="5" fill="#b8303c"/>
<path d="M428.3 808v-28.2a4 4 0 0 1 4-4h51" fill="none" stroke="#000" stroke-opacity="0.28" stroke-width="1.3"/>
<text x="457.5" y="834.2" font-size="15" fill="#242424" text-anchor="middle" textLength="28" lengthAdjust="spacingAndGlyphs" font-weight="bold">Red</text>
<rect x="498" y="768" width="75" height="73" rx="5.5" fill="url(#gSB)"/>
<rect x="505.8" y="775.8" width="59.6" height="36.2" rx="5" fill="#f0cd22"/>
<path d="M506.3 808v-28.2a4 4 0 0 1 4-4h51" fill="none" stroke="#000" stroke-opacity="0.28" stroke-width="1.3"/>
<text x="535.5" y="834.2" font-size="15" fill="#242424" text-anchor="middle" textLength="47.6" lengthAdjust="spacingAndGlyphs" font-weight="bold">Yellow</text>
<rect x="576" y="768" width="75" height="73" rx="5.5" fill="url(#gSB)"/>
<rect x="583.8" y="775.8" width="59.6" height="36.2" rx="5" fill="#bc5596"/>
<path d="M584.3 808v-28.2a4 4 0 0 1 4-4h51" fill="none" stroke="#000" stroke-opacity="0.28" stroke-width="1.3"/>
<text x="613.5" y="834.2" font-size="15" fill="#242424" text-anchor="middle" textLength="65" lengthAdjust="spacingAndGlyphs" font-weight="bold">Magenta</text>
<rect x="654" y="768" width="75" height="73" rx="5.5" fill="url(#gSB)"/>
<rect x="661.8" y="775.8" width="59.6" height="36.2" rx="5" fill="#0887a8"/>
<path d="M662.3 808v-28.2a4 4 0 0 1 4-4h51" fill="none" stroke="#000" stroke-opacity="0.28" stroke-width="1.3"/>
<text x="691.5" y="834.2" font-size="15" fill="#242424" text-anchor="middle" textLength="34.4" lengthAdjust="spacingAndGlyphs" font-weight="bold">Cyan</text>
<rect x="732" y="768" width="75" height="73" rx="5.5" fill="url(#gSB)"/>
<rect x="739.8" y="775.8" width="59.6" height="36.2" rx="5" fill="#ff0000"/>
<path d="M740.3 808v-28.2a4 4 0 0 1 4-4h51" fill="none" stroke="#000" stroke-opacity="0.28" stroke-width="1.3"/>
<text x="769.5" y="834.2" font-size="15" fill="#242424" text-anchor="middle" textLength="71.7" lengthAdjust="spacingAndGlyphs" font-weight="bold">100% Red</text>
<rect x="810" y="768" width="75" height="73" rx="5.5" fill="url(#gSB)"/>
<rect x="817.8" y="775.8" width="59.6" height="18.2" rx="6" fill="#00ff00"/>
<path d="M818.3 790v-10.2a4 4 0 0 1 4-4h51" fill="none" stroke="#000" stroke-opacity="0.28" stroke-width="1.3"/>
<text x="825.5" y="816.7" font-size="15" fill="#242424" textLength="39.9" lengthAdjust="spacingAndGlyphs" font-weight="bold">100%</text>
<text x="825.5" y="834.2" font-size="15" fill="#242424" textLength="44" lengthAdjust="spacingAndGlyphs" font-weight="bold">Green</text>
<rect x="888" y="768" width="75" height="73" rx="5.5" fill="url(#gSB)"/>
<rect x="895.8" y="775.8" width="59.6" height="18.2" rx="6" fill="#0000ff"/>
<path d="M896.3 790v-10.2a4 4 0 0 1 4-4h51" fill="none" stroke="#000" stroke-opacity="0.28" stroke-width="1.3"/>
<text x="905.55" y="816.7" font-size="15" fill="#242424" textLength="39.9" lengthAdjust="spacingAndGlyphs" font-weight="bold">100%</text>
<text x="905.55" y="834.2" font-size="15" fill="#242424" textLength="33" lengthAdjust="spacingAndGlyphs" font-weight="bold">Blue</text>
<rect x="966" y="768" width="75" height="73" rx="5.5" fill="url(#gSB)"/>
<rect x="973.8" y="775.8" width="59.6" height="18.2" rx="6" fill="#00ffff"/>
<path d="M974.3 790v-10.2a4 4 0 0 1 4-4h51" fill="none" stroke="#000" stroke-opacity="0.28" stroke-width="1.3"/>
<text x="983.55" y="816.7" font-size="15" fill="#242424" textLength="39.9" lengthAdjust="spacingAndGlyphs" font-weight="bold">100%</text>
<text x="983.55" y="834.2" font-size="15" fill="#242424" textLength="34.4" lengthAdjust="spacingAndGlyphs" font-weight="bold">Cyan</text>
<rect x="1044" y="768" width="75" height="73" rx="5.5" fill="url(#gSB)"/>
<rect x="1051.8" y="775.8" width="59.6" height="18.2" rx="6" fill="#ff00ff"/>
<path d="M1052.3 790v-10.2a4 4 0 0 1 4-4h51" fill="none" stroke="#000" stroke-opacity="0.28" stroke-width="1.3"/>
<text x="1049" y="816.7" font-size="15" fill="#242424" textLength="39.9" lengthAdjust="spacingAndGlyphs" font-weight="bold">100%</text>
<text x="1049" y="834.2" font-size="15" fill="#242424" textLength="65" lengthAdjust="spacingAndGlyphs" font-weight="bold">Magenta</text>
<rect x="0" y="842" width="1124.5" height="9" fill="#767676"/>
<rect x="545" y="843.3" width="524.5" height="12" rx="5" fill="#4e4e4e"/>
<rect x="-4" y="843" width="13.5" height="12" rx="2.5" fill="#9a9a9a"/><path d="M1 851l6-6v6z" fill="#333"/>
<rect x="1110" y="843" width="14" height="12" rx="2.5" fill="#9a9a9a"/><path d="M1113.5 844.5l8 6.5h-8z" fill="#333"/>
<rect x="1126.5" y="764" width="480" height="90" fill="#333"/>
<path d="M1126.7 795.2V773a5 5 0 0 1 5-5h62a5 5 0 0 1 5 5v22.2z" fill="url(#gB2)"/>
<rect x="1126.7" y="796.2" width="72" height="56" fill="url(#gB3)"/>
<circle cx="1162.4" cy="782.2" r="11.2" fill="url(#gC1)"/><path d="M1156 784.2l6.6-7 6.6 7z" fill="#333"/>
<rect x="1140.8" y="805.8" width="44" height="50" rx="5.5" fill="#a2a2a2" stroke="#262626" stroke-width="3.6"/>
<rect x="1142.6" y="828" width="40.4" height="24" fill="#7a7a7a"/>
<rect x="1152.2" y="818.2" width="20.6" height="19.8" fill="#000"/>
<rect x="1152.2" y="818.2" width="20.6" height="9.8" fill="#1c1c1c"/>
<rect x="1199.9" y="767.8" width="68.9" height="45.5" fill="url(#gB1)"/>
<circle cx="1234.45" cy="790.7" r="15" fill="url(#gC1)"/>
<rect x="1270" y="767.8" width="65.9" height="45.5" fill="url(#gB1)"/>
<circle cx="1303.05" cy="790.7" r="15" fill="url(#gC1)"/>
<rect x="1337.1" y="767.8" width="66.7" height="45.5" fill="url(#gB1)"/>
<circle cx="1370.55" cy="790.7" r="15" fill="url(#gC1)"/>
<rect x="1405" y="767.8" width="65.8" height="45.5" fill="url(#gB1)"/>
<circle cx="1438" cy="790.7" r="15" fill="url(#gC1)"/>
<rect x="1472" y="767.8" width="66.8" height="45.5" fill="url(#gBd)"/>
<circle cx="1505.5" cy="790.7" r="15" fill="url(#gC2)"/>
<rect x="1540" y="767.8" width="65.8" height="45.5" fill="url(#gBd)"/>
<circle cx="1573" cy="790.7" r="15" fill="url(#gC2)"/>
<rect x="1228.6" y="784.8" width="11.6" height="11.4" fill="#303030"/>
<path d="M1299.2 784.6l12.2 6.8-12.2 6.8z" fill="#303030"/>
<path d="M1366 783.5h-3.7v16h3.7v-2.4h-1.2v-11.2h1.2zM1376.2 783.5h3.7v16h-3.7v-2.4h1.2v-11.2h-1.2zM1366.7 788.7h2.8v2.8h-2.8zM1371.7 788.7h2.8v2.8h-2.8z" fill="#303030"/>
<text x="1438.6" y="798.2" font-size="25" fill="#303030" text-anchor="middle" textLength="21.5" lengthAdjust="spacingAndGlyphs" stroke="#303030" stroke-width="0.6">∞</text>
<g fill="none" stroke="#1c1c1c" stroke-width="2.6"><path d="M1498.5 789a7 7 0 0 1 12.5-3.5"/><path d="M1512 792.5a7 7 0 0 1-12.5 3.5"/></g>
<path d="M1513.5 781.5v7h-7z" fill="#1c1c1c"/><path d="M1497 800v-7h7z" fill="#1c1c1c"/>
<path d="M1199.9 852V819.6a5 5 0 0 1 5-5H1403.8v37.4z" fill="url(#gBN)"/>
<rect x="1405" y="814.6" width="200" height="37.4" fill="url(#gBN)"/>
<circle cx="1246.2" cy="837.8" r="15" fill="url(#gC3)"/><circle cx="1566.2" cy="837.8" r="15" fill="url(#gC3)"/>
<g fill="none" stroke="#333" stroke-width="2.4"><path d="M1245.5 830l-6 7.8 6 7.8M1252.5 830l-6 7.8 6 7.8"/><path d="M1560 830l6 7.8-6 7.8M1567 830l6 7.8-6 7.8"/></g>
<text x="1284.8" y="851.3" font-size="35.5" fill="#333" textLength="75.5" lengthAdjust="spacingAndGlyphs" stroke="#333" stroke-width="0.7">Back</text>
<text x="1444.5" y="851.3" font-size="35.5" fill="#333" textLength="79.5" lengthAdjust="spacingAndGlyphs" stroke="#333" stroke-width="0.7">Next</text>
</svg>
</body></html>
